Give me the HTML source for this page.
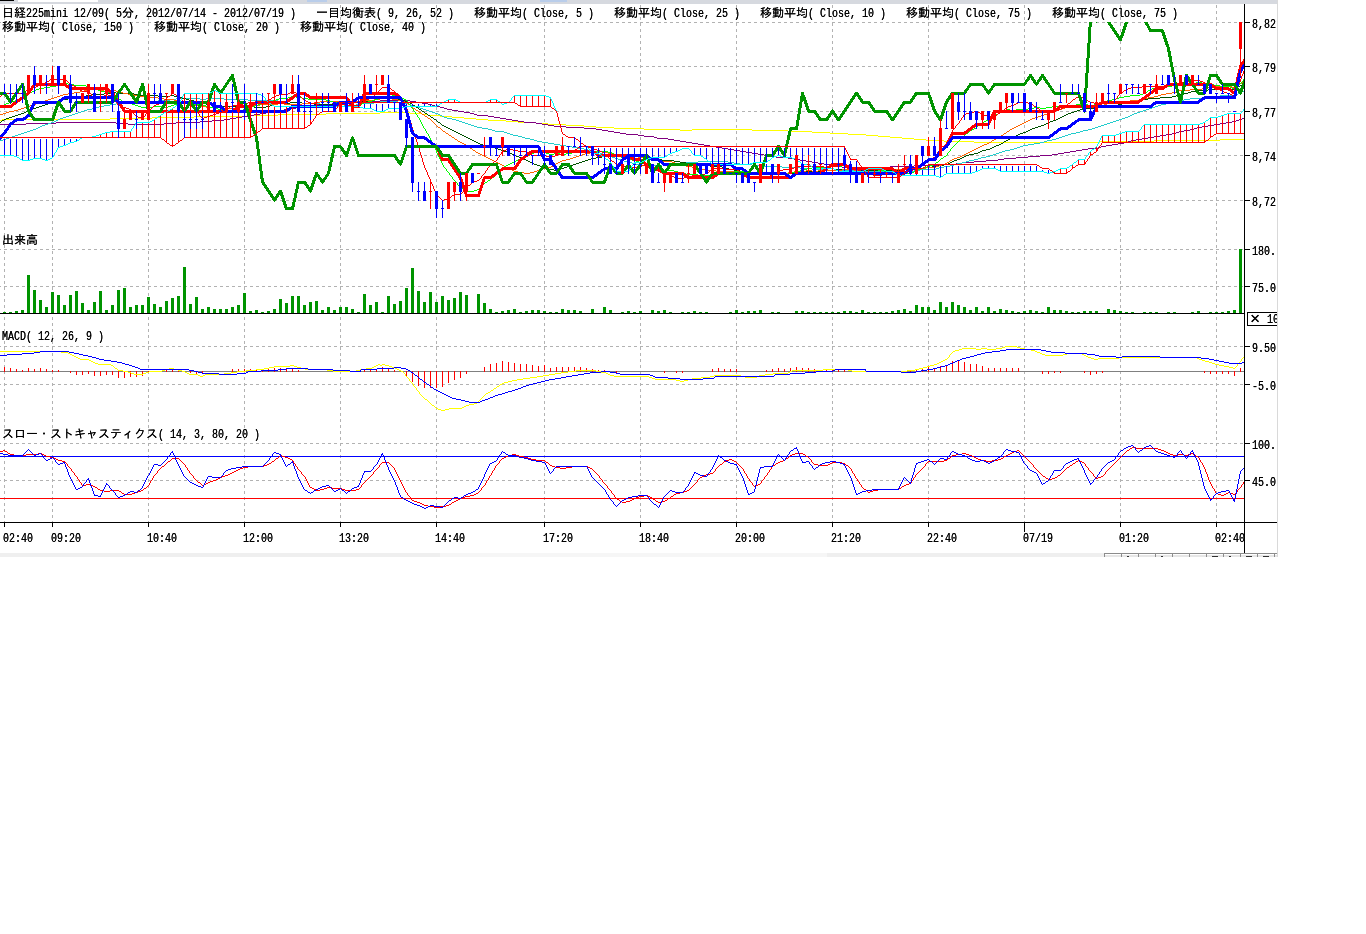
<!DOCTYPE html>
<html><head><meta charset="utf-8"><title>chart</title>
<style>
html,body{margin:0;padding:0;background:#fff;}
body{width:1366px;height:934px;position:relative;overflow:hidden;}
.t{position:absolute;white-space:nowrap;will-change:transform;text-shadow:0 0 0 #000;line-height:12px;height:12px;color:#000;font-size:12px;font-family:"Liberation Mono","IPAGothic",monospace;}
.j{font-family:"Liberation Mono","IPAGothic",monospace;font-size:12px;}
.l{font-family:"Liberation Mono",monospace;font-size:10px;display:inline-block;transform:scaleY(1.2);transform-origin:50% 70%;}
</style></head><body>
<svg width="1366" height="934" viewBox="0 0 1366 934" shape-rendering="crispEdges" style="position:absolute;left:0;top:0">
<defs><clipPath id="cm"><rect x="0" y="22" width="1244" height="204"/></clipPath><clipPath id="cl"><rect x="0" y="314" width="1244" height="208"/></clipPath></defs>
<rect x="0" y="0" width="1278" height="4" fill="#d6d9df"/>
<rect x="0" y="0" width="14" height="1" fill="#000"/>
<rect x="307" y="0" width="20" height="2" fill="#b9cdea"/>
<rect x="540" y="0" width="27" height="2" fill="#b9cdea"/>
<rect x="18" y="0" width="80" height="2" fill="#fff"/>
<rect x="1277" y="0" width="1" height="557" fill="#d9d9d9"/>
<line x1="0" y1="22.5" x2="1244" y2="22.5" stroke="#b2b2b2" stroke-width="1" stroke-dasharray="3,3" stroke-dashoffset="2"/>
<line x1="0" y1="66.5" x2="1244" y2="66.5" stroke="#b2b2b2" stroke-width="1" stroke-dasharray="3,3" stroke-dashoffset="2"/>
<line x1="0" y1="111.5" x2="1244" y2="111.5" stroke="#b2b2b2" stroke-width="1" stroke-dasharray="3,3" stroke-dashoffset="2"/>
<line x1="0" y1="155.5" x2="1244" y2="155.5" stroke="#b2b2b2" stroke-width="1" stroke-dasharray="3,3" stroke-dashoffset="2"/>
<line x1="0" y1="200.5" x2="1244" y2="200.5" stroke="#b2b2b2" stroke-width="1" stroke-dasharray="3,3" stroke-dashoffset="2"/>
<line x1="0" y1="249.5" x2="1244" y2="249.5" stroke="#b2b2b2" stroke-width="1" stroke-dasharray="3,3" stroke-dashoffset="2"/>
<line x1="0" y1="286.5" x2="1244" y2="286.5" stroke="#b2b2b2" stroke-width="1" stroke-dasharray="3,3" stroke-dashoffset="2"/>
<line x1="0" y1="346.5" x2="1244" y2="346.5" stroke="#b2b2b2" stroke-width="1" stroke-dasharray="3,3" stroke-dashoffset="2"/>
<line x1="0" y1="384.5" x2="1244" y2="384.5" stroke="#b2b2b2" stroke-width="1" stroke-dasharray="3,3" stroke-dashoffset="2"/>
<line x1="0" y1="443.5" x2="1244" y2="443.5" stroke="#b2b2b2" stroke-width="1" stroke-dasharray="3,3" stroke-dashoffset="2"/>
<line x1="0" y1="480.5" x2="1244" y2="480.5" stroke="#b2b2b2" stroke-width="1" stroke-dasharray="3,3" stroke-dashoffset="2"/>
<line x1="4.5" y1="4" x2="4.5" y2="522" stroke="#b2b2b2" stroke-width="1" stroke-dasharray="3,3" stroke-dashoffset="5"/>
<line x1="52.5" y1="4" x2="52.5" y2="522" stroke="#b2b2b2" stroke-width="1" stroke-dasharray="3,3" stroke-dashoffset="5"/>
<line x1="148.5" y1="4" x2="148.5" y2="522" stroke="#b2b2b2" stroke-width="1" stroke-dasharray="3,3" stroke-dashoffset="5"/>
<line x1="244.5" y1="4" x2="244.5" y2="522" stroke="#b2b2b2" stroke-width="1" stroke-dasharray="3,3" stroke-dashoffset="5"/>
<line x1="340.5" y1="4" x2="340.5" y2="522" stroke="#b2b2b2" stroke-width="1" stroke-dasharray="3,3" stroke-dashoffset="5"/>
<line x1="436.5" y1="4" x2="436.5" y2="522" stroke="#b2b2b2" stroke-width="1" stroke-dasharray="3,3" stroke-dashoffset="5"/>
<line x1="544.5" y1="4" x2="544.5" y2="522" stroke="#b2b2b2" stroke-width="1" stroke-dasharray="3,3" stroke-dashoffset="5"/>
<line x1="640.5" y1="4" x2="640.5" y2="522" stroke="#b2b2b2" stroke-width="1" stroke-dasharray="3,3" stroke-dashoffset="5"/>
<line x1="736.5" y1="4" x2="736.5" y2="522" stroke="#b2b2b2" stroke-width="1" stroke-dasharray="3,3" stroke-dashoffset="5"/>
<line x1="832.5" y1="4" x2="832.5" y2="522" stroke="#b2b2b2" stroke-width="1" stroke-dasharray="3,3" stroke-dashoffset="5"/>
<line x1="928.5" y1="4" x2="928.5" y2="522" stroke="#b2b2b2" stroke-width="1" stroke-dasharray="3,3" stroke-dashoffset="5"/>
<line x1="1024.5" y1="4" x2="1024.5" y2="522" stroke="#b2b2b2" stroke-width="1" stroke-dasharray="3,3" stroke-dashoffset="5"/>
<line x1="1120.5" y1="4" x2="1120.5" y2="522" stroke="#b2b2b2" stroke-width="1" stroke-dasharray="3,3" stroke-dashoffset="5"/>
<line x1="1216.5" y1="4" x2="1216.5" y2="522" stroke="#b2b2b2" stroke-width="1" stroke-dasharray="3,3" stroke-dashoffset="5"/>
<g clip-path="url(#cm)">
<path d="M0 120h2v1h-2zM2 119h108v1h-108zM110 118h42v1h-42zM152 117h42v1h-42zM194 116h54v1h-54zM248 115h30v1h-30zM278 114h48v1h-48zM326 113h54v1h-54zM380 112h30v1h-30zM410 113h12v1h-12zM422 114h6v1h-6zM428 115h12v1h-12zM440 116h12v1h-12zM452 117h12v1h-12zM464 118h12v1h-12zM476 119h12v1h-12zM488 120h18v1h-18zM506 121h12v1h-12zM518 122h18v1h-18zM536 123h12v1h-12zM548 124h18v1h-18zM566 125h18v1h-18zM584 126h12v1h-12zM596 127h18v1h-18zM614 128h30v1h-30zM644 129h36v1h-36zM680 130h12v1h-12zM692 129h60v1h-60zM752 130h36v1h-36zM788 131h24v1h-24zM812 132h18v1h-18zM830 133h18v1h-18zM848 134h18v1h-18zM866 135h12v1h-12zM878 136h12v1h-12zM890 137h12v1h-12zM902 138h12v1h-12zM914 139h12v1h-12zM926 140h18v1h-18zM944 141h30v1h-30zM974 142h126v1h-126zM1100 141h54v1h-54zM1154 140h66v1h-66zM1220 139h24v1h-24z" fill="#ffff00"/>
<path d="M0 124h26v1h-26zM26 123h30v1h-30zM56 122h60v1h-60zM116 123h12v1h-12zM128 124h36v1h-36zM164 123h12v1h-12zM176 122h24v1h-24zM200 121h12v1h-12zM212 120h12v1h-12zM224 119h6v1h-6zM230 118h6v1h-6zM236 117h6v1h-6zM242 116h6v1h-6zM248 115h6v1h-6zM254 114h6v1h-6zM260 113h6v1h-6zM266 112h6v1h-6zM272 111h6v1h-6zM278 110h6v1h-6zM284 109h6v1h-6zM290 108h6v1h-6zM296 107h6v1h-6zM302 106h6v1h-6zM308 105h12v1h-12zM320 104h12v1h-12zM332 103h18v1h-18zM350 102h18v1h-18zM368 101h12v1h-12zM380 100h30v1h-30zM410 101h6v1h-6zM416 102h6v1h-6zM422 103h6v1h-6zM428 104h4v1h-4zM432 105h3v1h-3zM435 106h5v1h-5zM440 107h4v1h-4zM444 108h3v1h-3zM447 109h5v1h-5zM452 110h6v1h-6zM458 111h6v1h-6zM464 112h6v1h-6zM470 113h4v1h-4zM474 114h3v1h-3zM477 115h11v1h-11zM488 116h6v1h-6zM494 117h6v1h-6zM500 118h6v1h-6zM506 119h6v1h-6zM512 120h6v1h-6zM518 121h6v1h-6zM524 122h12v1h-12zM536 123h6v1h-6zM542 124h6v1h-6zM548 125h6v1h-6zM554 126h12v1h-12zM566 127h18v1h-18zM584 128h12v1h-12zM596 129h6v1h-6zM602 130h6v1h-6zM608 131h6v1h-6zM614 132h6v1h-6zM620 133h6v1h-6zM626 134h12v1h-12zM638 135h6v1h-6zM644 136h10v1h-10zM654 137h3v1h-3zM657 138h11v1h-11zM668 139h6v1h-6zM674 140h6v1h-6zM680 141h6v1h-6zM686 142h6v1h-6zM692 143h6v1h-6zM698 144h6v1h-6zM704 145h6v1h-6zM710 146h6v1h-6zM716 147h6v1h-6zM722 148h6v1h-6zM728 149h6v1h-6zM734 150h6v1h-6zM740 151h6v1h-6zM746 152h6v1h-6zM752 153h6v1h-6zM758 154h6v1h-6zM764 155h6v1h-6zM770 156h6v1h-6zM776 157h12v1h-12zM788 158h6v1h-6zM794 159h6v1h-6zM800 160h6v1h-6zM806 161h6v1h-6zM812 162h6v1h-6zM818 163h6v1h-6zM824 164h6v1h-6zM830 165h6v1h-6zM836 166h6v1h-6zM842 167h12v1h-12zM854 168h18v1h-18zM872 167h18v1h-18zM890 166h24v1h-24zM914 165h24v1h-24zM938 164h18v1h-18zM956 163h6v1h-6zM962 162h12v1h-12zM974 161h12v1h-12zM986 160h12v1h-12zM998 159h6v1h-6zM1004 158h12v1h-12zM1016 157h12v1h-12zM1028 156h12v1h-12zM1040 155h12v1h-12zM1052 154h6v1h-6zM1058 153h6v1h-6zM1064 152h6v1h-6zM1070 151h6v1h-6zM1076 150h6v1h-6zM1082 149h6v1h-6zM1088 148h10v1h-10zM1098 147h3v1h-3zM1101 146h5v1h-5zM1106 145h6v1h-6zM1112 144h6v1h-6zM1118 143h6v1h-6zM1124 142h4v1h-4zM1128 141h3v1h-3zM1131 140h5v1h-5zM1136 139h6v1h-6zM1142 138h6v1h-6zM1148 137h6v1h-6zM1154 136h6v1h-6zM1160 135h6v1h-6zM1166 134h6v1h-6zM1172 133h4v1h-4zM1176 132h3v1h-3zM1179 131h5v1h-5zM1184 130h6v1h-6zM1190 129h4v1h-4zM1194 128h3v1h-3zM1197 127h5v1h-5zM1202 126h6v1h-6zM1208 125h6v1h-6zM1214 124h6v1h-6zM1220 123h6v1h-6zM1226 122h6v1h-6zM1232 121h4v1h-4zM1236 120h3v1h-3zM1239 119h3v1h-3zM1242 118h2v1h-2z" fill="#800080"/>
<path d="M0 140h3v1h-3zM3 139h3v1h-3zM6 138h3v1h-3zM9 137h3v1h-3zM12 136h3v1h-3zM15 135h3v1h-3zM18 134h3v1h-3zM21 133h3v1h-3zM24 132h3v1h-3zM27 131h3v1h-3zM30 130h3v1h-3zM33 129h3v1h-3zM36 128h2v1h-2zM38 127h2v1h-2zM40 126h2v1h-2zM42 125h3v1h-3zM45 124h3v1h-3zM48 123h3v1h-3zM51 122h3v1h-3zM54 121h2v1h-2zM56 120h2v1h-2zM58 119h2v1h-2zM60 118h3v1h-3zM63 117h3v1h-3zM66 116h3v1h-3zM69 115h3v1h-3zM72 114h3v1h-3zM75 113h3v1h-3zM78 112h3v1h-3zM81 111h3v1h-3zM84 110h3v1h-3zM87 109h5v1h-5zM92 108h4v1h-4zM96 107h3v1h-3zM99 106h5v1h-5zM104 105h6v1h-6zM110 104h6v1h-6zM116 103h12v1h-12zM128 102h18v1h-18zM146 101h12v1h-12zM158 100h12v1h-12zM170 99h6v1h-6zM176 98h24v1h-24zM200 99h6v1h-6zM206 98h18v1h-18zM224 99h24v1h-24zM248 100h30v1h-30zM278 101h12v1h-12zM290 102h12v1h-12zM302 103h18v1h-18zM320 104h24v1h-24zM344 105h12v1h-12zM356 104h6v1h-6zM362 103h12v1h-12zM374 102h6v1h-6zM380 101h18v1h-18zM398 102h6v1h-6zM404 103h4v1h-4zM408 104h3v1h-3zM411 105h3v1h-3zM414 106h3v1h-3zM417 107h3v1h-3zM420 108h3v1h-3zM423 109h3v1h-3zM426 110h3v1h-3zM429 111h3v1h-3zM432 112h3v1h-3zM435 113h3v1h-3zM438 114h2v1h-2zM440 115h2v1h-2zM442 116h2v1h-2zM444 117h3v1h-3zM447 118h5v1h-5zM452 119h4v1h-4zM456 120h3v1h-3zM459 121h3v1h-3zM462 122h3v1h-3zM465 123h3v1h-3zM468 124h3v1h-3zM471 125h3v1h-3zM474 126h3v1h-3zM477 127h5v1h-5zM482 128h6v1h-6zM488 129h4v1h-4zM492 130h3v1h-3zM495 131h9v1h-9zM504 132h3v1h-3zM507 133h3v1h-3zM510 134h3v1h-3zM513 135h5v1h-5zM518 136h4v1h-4zM522 137h3v1h-3zM525 138h5v1h-5zM530 139h4v1h-4zM534 140h3v1h-3zM537 141h5v1h-5zM542 142h6v1h-6zM548 143h6v1h-6zM554 144h6v1h-6zM560 145h6v1h-6zM566 146h6v1h-6zM572 147h6v1h-6zM578 148h6v1h-6zM584 149h4v1h-4zM588 150h3v1h-3zM591 151h5v1h-5zM596 152h4v1h-4zM600 153h3v1h-3zM603 154h3v1h-3zM606 155h3v1h-3zM609 156h3v1h-3zM612 157h3v1h-3zM615 158h3v1h-3zM618 159h3v1h-3zM621 160h3v1h-3zM624 161h3v1h-3zM627 162h5v1h-5zM632 163h4v1h-4zM636 164h3v1h-3zM639 165h23v1h-23zM662 164h12v1h-12zM674 163h12v1h-12zM686 162h12v1h-12zM698 161h30v1h-30zM728 162h6v1h-6zM734 163h6v1h-6zM740 164h12v1h-12zM752 165h12v1h-12zM764 166h18v1h-18zM782 167h18v1h-18zM800 168h12v1h-12zM812 169h12v1h-12zM824 170h36v1h-36zM860 171h54v1h-54zM914 170h6v1h-6zM920 169h16v1h-16zM936 168h3v1h-3zM939 167h5v1h-5zM944 166h6v1h-6zM950 165h4v1h-4zM954 164h3v1h-3zM957 163h5v1h-5zM962 162h4v1h-4zM966 161h3v1h-3zM969 160h5v1h-5zM974 159h4v1h-4zM978 158h3v1h-3zM981 157h5v1h-5zM986 156h4v1h-4zM990 155h3v1h-3zM993 154h3v1h-3zM996 153h3v1h-3zM999 152h3v1h-3zM1002 151h3v1h-3zM1005 150h5v1h-5zM1010 149h4v1h-4zM1014 148h3v1h-3zM1017 147h3v1h-3zM1020 146h3v1h-3zM1023 145h5v1h-5zM1028 144h6v1h-6zM1034 143h6v1h-6zM1040 142h4v1h-4zM1044 141h3v1h-3zM1047 140h5v1h-5zM1052 139h4v1h-4zM1056 138h3v1h-3zM1059 137h3v1h-3zM1062 136h3v1h-3zM1065 135h3v1h-3zM1068 134h3v1h-3zM1071 133h5v1h-5zM1076 132h4v1h-4zM1080 131h3v1h-3zM1083 130h5v1h-5zM1088 129h4v1h-4zM1092 128h3v1h-3zM1095 127h3v1h-3zM1098 126h3v1h-3zM1101 125h3v1h-3zM1104 124h3v1h-3zM1107 123h3v1h-3zM1110 122h3v1h-3zM1113 121h3v1h-3zM1116 120h3v1h-3zM1119 119h3v1h-3zM1122 118h3v1h-3zM1125 117h3v1h-3zM1128 116h2v1h-2zM1130 115h2v1h-2zM1132 114h2v1h-2zM1134 113h3v1h-3zM1137 112h3v1h-3zM1140 111h3v1h-3zM1143 110h3v1h-3zM1146 109h3v1h-3zM1149 108h3v1h-3zM1152 107h3v1h-3zM1155 106h3v1h-3zM1158 105h3v1h-3zM1161 104h5v1h-5zM1166 103h4v1h-4zM1170 102h3v1h-3zM1173 101h5v1h-5zM1178 100h6v1h-6zM1184 99h6v1h-6zM1190 98h12v1h-12zM1202 97h6v1h-6zM1208 96h12v1h-12zM1220 95h16v1h-16zM1236 94h2v1h-2zM1238 93h2v1h-2zM1240 92h2v1h-2zM1242 91h2v1h-2z" fill="#22cccc"/>
<path d="M0 122h1v1h-1zM1 121h1v1h-1zM2 120h2v1h-2zM4 119h2v1h-2zM6 118h3v1h-3zM9 117h3v1h-3zM12 116h3v1h-3zM15 115h3v1h-3zM18 114h3v1h-3zM21 113h3v1h-3zM24 112h2v1h-2zM26 111h2v1h-2zM28 110h2v1h-2zM30 109h3v1h-3zM33 108h3v1h-3zM36 107h3v1h-3zM39 106h3v1h-3zM42 105h3v1h-3zM45 104h3v1h-3zM48 103h3v1h-3zM51 102h5v1h-5zM56 101h4v1h-4zM60 100h3v1h-3zM63 99h5v1h-5zM68 98h10v1h-10zM78 97h3v1h-3zM81 96h5v1h-5zM86 95h6v1h-6zM92 94h12v1h-12zM104 93h6v1h-6zM110 92h6v1h-6zM116 93h18v1h-18zM134 94h6v1h-6zM140 95h18v1h-18zM158 96h12v1h-12zM170 95h4v1h-4zM174 96h3v1h-3zM177 97h5v1h-5zM182 98h4v1h-4zM186 99h3v1h-3zM189 100h5v1h-5zM194 101h4v1h-4zM198 102h3v1h-3zM201 103h5v1h-5zM206 104h6v1h-6zM212 105h6v1h-6zM218 106h18v1h-18zM236 107h6v1h-6zM242 106h12v1h-12zM254 107h12v1h-12zM266 106h4v1h-4zM270 105h3v1h-3zM273 104h5v1h-5zM278 103h12v1h-12zM290 102h12v1h-12zM302 103h12v1h-12zM314 104h24v1h-24zM338 103h12v1h-12zM350 102h12v1h-12zM362 101h6v1h-6zM368 100h6v1h-6zM374 99h6v1h-6zM380 98h18v1h-18zM398 99h4v1h-4zM402 100h3v1h-3zM405 101h3v1h-3zM408 102h2v1h-2zM410 103h2v1h-2zM412 104h1v1h-1zM413 105h2v1h-2zM415 106h1v1h-1zM416 107h2v1h-2zM418 108h1v1h-1zM419 109h2v1h-2zM421 110h1v1h-1zM422 111h2v1h-2zM424 112h1v1h-1zM425 113h2v1h-2zM427 114h1v1h-1zM428 115h2v1h-2zM430 116h1v1h-1zM431 117h2v1h-2zM433 118h1v1h-1zM434 119h2v1h-2zM436 120h1v1h-1zM437 121h1v1h-1zM438 122h2v1h-2zM440 123h1v1h-1zM441 124h1v1h-1zM442 125h2v1h-2zM444 126h2v1h-2zM446 127h2v1h-2zM448 128h2v1h-2zM450 129h2v1h-2zM452 130h2v1h-2zM454 131h2v1h-2zM456 132h2v1h-2zM458 133h2v1h-2zM460 134h2v1h-2zM462 135h2v1h-2zM464 136h2v1h-2zM466 137h2v1h-2zM468 138h2v1h-2zM470 139h2v1h-2zM472 140h2v1h-2zM474 141h2v1h-2zM476 142h2v1h-2zM478 143h2v1h-2zM480 144h3v1h-3zM483 145h5v1h-5zM488 146h4v1h-4zM492 147h3v1h-3zM495 148h3v1h-3zM498 149h3v1h-3zM501 150h3v1h-3zM504 151h3v1h-3zM507 152h3v1h-3zM510 153h2v1h-2zM512 154h2v1h-2zM514 155h2v1h-2zM516 156h3v1h-3zM519 157h3v1h-3zM522 158h2v1h-2zM524 159h2v1h-2zM526 160h2v1h-2zM528 161h2v1h-2zM530 162h2v1h-2zM532 163h2v1h-2zM534 164h3v1h-3zM537 165h3v1h-3zM540 166h3v1h-3zM543 167h3v1h-3zM546 168h3v1h-3zM549 169h5v1h-5zM554 170h4v1h-4zM558 169h3v1h-3zM561 168h3v1h-3zM564 167h3v1h-3zM567 166h3v1h-3zM570 165h3v1h-3zM573 164h3v1h-3zM576 163h3v1h-3zM579 162h3v1h-3zM582 161h3v1h-3zM585 160h3v1h-3zM588 159h3v1h-3zM591 158h5v1h-5zM596 157h6v1h-6zM602 156h6v1h-6zM608 155h18v1h-18zM626 154h6v1h-6zM632 155h6v1h-6zM638 156h10v1h-10zM648 157h3v1h-3zM651 158h5v1h-5zM656 159h6v1h-6zM662 160h12v1h-12zM674 161h6v1h-6zM680 162h6v1h-6zM686 163h6v1h-6zM692 164h12v1h-12zM704 165h6v1h-6zM710 166h12v1h-12zM722 167h4v1h-4zM726 168h3v1h-3zM729 169h5v1h-5zM734 170h6v1h-6zM740 171h6v1h-6zM746 172h36v1h-36zM782 173h12v1h-12zM794 172h12v1h-12zM806 171h18v1h-18zM824 170h12v1h-12zM836 169h18v1h-18zM854 170h48v1h-48zM902 169h18v1h-18zM920 168h6v1h-6zM926 167h6v1h-6zM932 166h6v1h-6zM938 165h6v1h-6zM944 164h4v1h-4zM948 163h2v1h-2zM950 162h2v1h-2zM952 161h2v1h-2zM954 160h3v1h-3zM957 159h3v1h-3zM960 158h2v1h-2zM962 157h2v1h-2zM964 156h2v1h-2zM966 155h3v1h-3zM969 154h5v1h-5zM974 153h4v1h-4zM978 152h2v1h-2zM980 151h2v1h-2zM982 150h4v1h-4zM986 149h4v1h-4zM990 148h2v1h-2zM992 147h2v1h-2zM994 146h2v1h-2zM996 145h3v1h-3zM999 144h2v1h-2zM1001 143h2v1h-2zM1003 142h1v1h-1zM1004 141h2v1h-2zM1006 140h2v1h-2zM1008 139h2v1h-2zM1010 138h2v1h-2zM1012 137h2v1h-2zM1014 136h2v1h-2zM1016 135h2v1h-2zM1018 134h2v1h-2zM1020 133h3v1h-3zM1023 132h3v1h-3zM1026 131h2v1h-2zM1028 130h2v1h-2zM1030 129h2v1h-2zM1032 128h3v1h-3zM1035 127h3v1h-3zM1038 126h3v1h-3zM1041 125h3v1h-3zM1044 124h2v1h-2zM1046 123h2v1h-2zM1048 122h2v1h-2zM1050 121h3v1h-3zM1053 120h3v1h-3zM1056 119h2v1h-2zM1058 118h2v1h-2zM1060 117h2v1h-2zM1062 116h2v1h-2zM1064 115h2v1h-2zM1066 114h2v1h-2zM1068 113h3v1h-3zM1071 112h3v1h-3zM1074 111h3v1h-3zM1077 110h3v1h-3zM1080 109h3v1h-3zM1083 108h11v1h-11zM1094 107h12v1h-12zM1106 106h6v1h-6zM1112 105h6v1h-6zM1118 104h4v1h-4zM1122 103h3v1h-3zM1125 102h5v1h-5zM1130 101h6v1h-6zM1136 100h6v1h-6zM1142 99h6v1h-6zM1148 98h12v1h-12zM1160 97h12v1h-12zM1172 96h4v1h-4zM1176 95h3v1h-3zM1179 94h5v1h-5zM1184 93h4v1h-4zM1188 92h3v1h-3zM1191 91h5v1h-5zM1196 90h12v1h-12zM1208 89h27v1h-27zM1235 88h2v1h-2zM1237 87h1v1h-1zM1238 86h2v1h-2zM1240 85h2v1h-2zM1242 84h2v1h-2z" fill="#005000"/>
<path d="M0 114h3v1h-3zM3 113h3v1h-3zM6 112h3v1h-3zM9 111h5v1h-5zM14 110h4v1h-4zM18 109h3v1h-3zM21 108h3v1h-3zM24 107h3v1h-3zM27 106h3v1h-3zM30 105h3v1h-3zM33 104h3v1h-3zM36 103h3v1h-3zM39 102h3v1h-3zM42 101h3v1h-3zM45 100h3v1h-3zM48 99h3v1h-3zM51 98h3v1h-3zM54 97h3v1h-3zM57 96h3v1h-3zM60 95h3v1h-3zM63 94h5v1h-5zM68 93h6v1h-6zM74 92h6v1h-6zM80 91h4v1h-4zM84 90h3v1h-3zM87 89h11v1h-11zM98 90h6v1h-6zM104 89h6v1h-6zM110 90h6v1h-6zM116 91h4v1h-4zM120 92h3v1h-3zM123 93h5v1h-5zM128 94h6v1h-6zM134 95h6v1h-6zM140 96h6v1h-6zM146 97h12v1h-12zM158 98h6v1h-6zM164 99h10v1h-10zM174 100h3v1h-3zM177 101h3v1h-3zM180 102h3v1h-3zM183 103h5v1h-5zM188 104h6v1h-6zM194 105h6v1h-6zM200 106h6v1h-6zM206 107h18v1h-18zM224 108h12v1h-12zM236 107h6v1h-6zM242 106h12v1h-12zM254 105h6v1h-6zM260 104h18v1h-18zM278 103h6v1h-6zM284 104h18v1h-18zM302 103h12v1h-12zM314 102h6v1h-6zM320 101h42v1h-42zM362 100h12v1h-12zM374 99h6v1h-6zM380 98h12v1h-12zM392 99h6v1h-6zM398 100h4v1h-4zM402 101h3v1h-3zM405 102h2v1h-2zM407 103h1v1h-1zM408 104h2v1h-2zM410 105h1v1h-1zM411 106h1v1h-1zM412 107h1v1h-1zM413 108h2v1h-2zM415 109h1v1h-1zM416 110h2v1h-2zM418 111h1v1h-1zM419 112h2v1h-2zM421 113h1v1h-1zM422 114h2v1h-2zM424 115h1v1h-1zM425 116h2v1h-2zM427 117h1v1h-1zM428 118h2v1h-2zM430 119h1v1h-1zM431 120h1v1h-1zM432 121h1v1h-1zM433 122h1v1h-1zM434 123h1v1h-1zM435 124h1v1h-1zM436 125h1v1h-1zM437 126h1v1h-1zM438 127h2v1h-2zM440 128h1v1h-1zM441 129h1v1h-1zM442 130h1v1h-1zM443 131h2v1h-2zM445 132h1v1h-1zM446 133h2v1h-2zM448 134h1v1h-1zM449 135h2v1h-2zM451 136h1v1h-1zM452 137h2v1h-2zM454 138h1v1h-1zM455 139h2v1h-2zM457 140h1v1h-1zM458 141h2v1h-2zM460 142h2v1h-2zM462 143h2v1h-2zM464 144h2v1h-2zM466 145h1v1h-1zM467 146h2v1h-2zM469 147h1v1h-1zM470 148h2v1h-2zM472 149h1v1h-1zM473 150h2v1h-2zM475 151h1v1h-1zM476 152h2v1h-2zM478 153h2v1h-2zM480 154h2v1h-2zM482 155h2v1h-2zM484 156h2v1h-2zM486 157h2v1h-2zM488 158h2v1h-2zM490 159h2v1h-2zM492 160h2v1h-2zM494 161h2v1h-2zM496 162h2v1h-2zM498 163h2v1h-2zM500 164h2v1h-2zM502 165h2v1h-2zM504 166h2v1h-2zM506 167h2v1h-2zM508 168h2v1h-2zM510 169h2v1h-2zM512 170h2v1h-2zM514 171h4v1h-4zM518 172h6v1h-6zM524 173h6v1h-6zM530 172h4v1h-4zM534 171h3v1h-3zM537 170h3v1h-3zM540 169h3v1h-3zM543 168h5v1h-5zM548 167h3v1h-3zM551 166h2v1h-2zM553 165h1v1h-1zM554 164h2v1h-2zM556 163h2v1h-2zM558 162h2v1h-2zM560 161h2v1h-2zM562 160h4v1h-4zM566 159h4v1h-4zM570 158h3v1h-3zM573 157h3v1h-3zM576 156h3v1h-3zM579 155h3v1h-3zM582 154h3v1h-3zM585 153h5v1h-5zM590 152h6v1h-6zM596 151h6v1h-6zM602 152h6v1h-6zM608 153h6v1h-6zM614 154h6v1h-6zM620 155h6v1h-6zM626 156h12v1h-12zM638 157h10v1h-10zM648 158h3v1h-3zM651 159h5v1h-5zM656 160h6v1h-6zM662 161h10v1h-10zM672 162h3v1h-3zM675 163h3v1h-3zM678 164h3v1h-3zM681 165h5v1h-5zM686 166h6v1h-6zM692 167h6v1h-6zM698 168h4v1h-4zM702 169h3v1h-3zM705 170h11v1h-11zM716 171h24v1h-24zM740 172h6v1h-6zM746 173h6v1h-6zM752 174h24v1h-24zM776 173h12v1h-12zM788 172h6v1h-6zM794 171h12v1h-12zM806 170h6v1h-6zM812 171h6v1h-6zM818 170h24v1h-24zM842 169h12v1h-12zM854 170h6v1h-6zM860 169h12v1h-12zM872 168h6v1h-6zM878 169h42v1h-42zM920 168h6v1h-6zM926 167h10v1h-10zM936 166h3v1h-3zM939 165h3v1h-3zM942 164h3v1h-3zM945 163h2v1h-2zM947 162h2v1h-2zM949 161h1v1h-1zM950 160h2v1h-2zM952 159h2v1h-2zM954 158h3v1h-3zM957 157h3v1h-3zM960 156h2v1h-2zM962 155h2v1h-2zM964 154h2v1h-2zM966 153h2v1h-2zM968 152h2v1h-2zM970 151h2v1h-2zM972 150h2v1h-2zM974 149h2v1h-2zM976 148h2v1h-2zM978 147h2v1h-2zM980 146h2v1h-2zM982 145h2v1h-2zM984 144h3v1h-3zM987 143h2v1h-2zM989 142h2v1h-2zM991 141h1v1h-1zM992 140h2v1h-2zM994 139h2v1h-2zM996 138h2v1h-2zM998 137h2v1h-2zM1000 136h1v1h-1zM1001 135h2v1h-2zM1003 134h1v1h-1zM1004 133h2v1h-2zM1006 132h1v1h-1zM1007 131h2v1h-2zM1009 130h1v1h-1zM1010 129h2v1h-2zM1012 128h2v1h-2zM1014 127h2v1h-2zM1016 126h2v1h-2zM1018 125h2v1h-2zM1020 124h2v1h-2zM1022 123h2v1h-2zM1024 122h2v1h-2zM1026 121h2v1h-2zM1028 120h2v1h-2zM1030 119h2v1h-2zM1032 118h3v1h-3zM1035 117h3v1h-3zM1038 116h3v1h-3zM1041 115h3v1h-3zM1044 114h3v1h-3zM1047 113h3v1h-3zM1050 112h3v1h-3zM1053 111h3v1h-3zM1056 110h3v1h-3zM1059 109h3v1h-3zM1062 108h3v1h-3zM1065 107h11v1h-11zM1076 106h24v1h-24zM1100 105h4v1h-4zM1104 104h3v1h-3zM1107 103h5v1h-5zM1112 102h12v1h-12zM1124 101h6v1h-6zM1130 100h10v1h-10zM1140 99h3v1h-3zM1143 98h5v1h-5zM1148 97h6v1h-6zM1154 96h4v1h-4zM1158 95h3v1h-3zM1161 94h5v1h-5zM1166 93h6v1h-6zM1172 92h4v1h-4zM1176 91h3v1h-3zM1179 90h11v1h-11zM1190 89h12v1h-12zM1202 88h4v1h-4zM1206 87h3v1h-3zM1209 86h23v1h-23zM1232 87h3v1h-3zM1235 86h2v1h-2zM1237 85h1v1h-1zM1238 84h2v1h-2zM1240 83h2v1h-2zM1242 82h2v1h-2z" fill="#ff6400"/>
<path d="M0 106h2v1h-2zM2 105h2v1h-2zM4 104h2v1h-2zM6 103h3v1h-3zM9 102h3v1h-3zM12 101h3v1h-3zM15 100h3v1h-3zM18 99h2v1h-2zM20 98h2v1h-2zM22 97h1v1h-1zM23 96h2v1h-2zM25 95h1v1h-1zM26 94h2v1h-2zM28 93h2v1h-2zM30 92h2v1h-2zM32 91h2v1h-2zM34 90h2v1h-2zM36 89h3v1h-3zM39 88h5v1h-5zM44 87h6v1h-6zM50 86h6v1h-6zM56 85h4v1h-4zM60 84h3v1h-3zM63 83h5v1h-5zM68 84h6v1h-6zM74 85h12v1h-12zM86 86h4v1h-4zM90 87h3v1h-3zM93 88h3v1h-3zM96 89h2v1h-2zM98 90h2v1h-2zM100 91h8v1h-8zM108 92h2v1h-2zM110 93h2v1h-2zM112 94h1v1h-1zM113 95h2v1h-2zM115 96h1v1h-1zM116 97h2v1h-2zM118 98h1v1h-1zM119 99h2v1h-2zM121 100h1v1h-1zM122 101h2v1h-2zM124 102h4v1h-4zM128 103h4v1h-4zM132 104h3v1h-3zM135 105h3v1h-3zM138 106h3v1h-3zM141 107h5v1h-5zM146 108h4v1h-4zM150 107h3v1h-3zM153 106h11v1h-11zM164 107h4v1h-4zM168 106h3v1h-3zM171 105h3v1h-3zM174 104h3v1h-3zM177 103h11v1h-11zM188 104h12v1h-12zM200 105h6v1h-6zM206 106h4v1h-4zM210 107h3v1h-3zM213 108h5v1h-5zM218 109h6v1h-6zM224 110h6v1h-6zM230 111h10v1h-10zM240 110h3v1h-3zM243 109h3v1h-3zM246 108h3v1h-3zM249 107h3v1h-3zM252 106h3v1h-3zM255 105h3v1h-3zM258 104h3v1h-3zM261 103h5v1h-5zM266 102h4v1h-4zM270 101h3v1h-3zM273 100h3v1h-3zM276 99h3v1h-3zM279 98h9v1h-9zM288 97h3v1h-3zM291 96h5v1h-5zM296 97h6v1h-6zM302 98h6v1h-6zM308 99h18v1h-18zM326 100h4v1h-4zM330 101h3v1h-3zM333 102h5v1h-5zM338 103h6v1h-6zM344 104h4v1h-4zM348 105h3v1h-3zM351 106h5v1h-5zM356 105h4v1h-4zM360 104h2v1h-2zM362 103h2v1h-2zM364 102h4v1h-4zM368 101h4v1h-4zM372 100h3v1h-3zM375 99h3v1h-3zM378 98h2v1h-2zM380 97h2v1h-2zM382 96h10v1h-10zM392 95h4v1h-4zM396 96h3v1h-3zM399 97h3v1h-3zM402 98h2v1h-2zM404 99h2v1h-2zM406 100h1v1h-1zM407 101h1v1h-1zM407 102h1v1h-1zM408 103h1v1h-1zM409 104h1v1h-1zM410 105h1v1h-1zM410 106h1v1h-1zM411 107h1v1h-1zM412 108h1v1h-1zM413 109h1v1h-1zM413 110h1v1h-1zM414 111h1v1h-1zM415 112h1v1h-1zM415 113h1v1h-1zM416 114h1v1h-1zM417 115h1v1h-1zM417 116h1v1h-1zM418 117h1v1h-1zM419 118h1v1h-1zM419 119h1v1h-1zM420 120h1v1h-1zM420 121h1v1h-1zM421 122h1v1h-1zM421 123h1v1h-1zM422 124h1v1h-1zM422 125h1v1h-1zM423 126h1v1h-1zM423 127h1v1h-1zM424 128h1v1h-1zM425 129h1v1h-1zM425 130h1v1h-1zM426 131h1v1h-1zM426 132h1v1h-1zM427 133h1v1h-1zM428 134h1v1h-1zM428 135h1v1h-1zM429 136h1v1h-1zM429 137h1v1h-1zM430 138h1v1h-1zM430 139h1v1h-1zM431 140h1v1h-1zM431 141h1v1h-1zM432 142h1v1h-1zM432 143h1v1h-1zM433 144h1v1h-1zM433 145h1v1h-1zM434 146h1v1h-1zM434 147h1v1h-1zM435 148h1v1h-1zM435 149h1v1h-1zM436 150h1v1h-1zM436 151h1v1h-1zM436 152h1v1h-1zM437 153h1v1h-1zM437 154h1v1h-1zM438 155h1v1h-1zM438 156h1v1h-1zM439 157h1v1h-1zM439 158h1v1h-1zM440 159h1v1h-1zM440 160h1v1h-1zM441 161h1v1h-1zM441 162h1v1h-1zM442 163h1v1h-1zM442 164h1v1h-1zM443 165h1v1h-1zM443 166h1v1h-1zM444 167h1v1h-1zM445 168h1v1h-1zM446 169h1v1h-1zM446 170h1v1h-1zM447 171h1v1h-1zM448 172h1v1h-1zM449 173h1v1h-1zM449 174h1v1h-1zM450 175h1v1h-1zM451 176h1v1h-1zM452 177h1v1h-1zM452 178h1v1h-1zM453 179h1v1h-1zM454 180h1v1h-1zM455 181h1v1h-1zM456 182h1v1h-1zM457 183h1v1h-1zM457 184h1v1h-1zM458 185h1v1h-1zM459 186h1v1h-1zM460 187h1v1h-1zM461 188h2v1h-2zM463 189h1v1h-1zM464 190h2v1h-2zM466 191h8v1h-8zM474 190h3v1h-3zM477 189h2v1h-2zM479 188h1v1h-1zM480 187h1v1h-1zM481 186h1v1h-1zM482 185h1v1h-1zM483 184h1v1h-1zM484 183h1v1h-1zM485 182h2v1h-2zM487 181h1v1h-1zM488 180h2v1h-2zM490 179h1v1h-1zM491 178h1v1h-1zM492 177h2v1h-2zM494 176h1v1h-1zM495 175h1v1h-1zM496 174h1v1h-1zM497 173h1v1h-1zM498 172h1v1h-1zM499 170h1v1h-1zM499 171h1v1h-1zM500 169h1v1h-1zM501 168h1v1h-1zM502 167h2v1h-2zM504 166h2v1h-2zM506 165h2v1h-2zM508 164h2v1h-2zM510 163h2v1h-2zM512 162h2v1h-2zM514 161h2v1h-2zM516 160h2v1h-2zM518 159h2v1h-2zM520 158h2v1h-2zM522 157h3v1h-3zM525 156h3v1h-3zM528 155h2v1h-2zM530 154h2v1h-2zM532 153h2v1h-2zM534 152h3v1h-3zM537 151h5v1h-5zM542 152h4v1h-4zM546 153h3v1h-3zM549 154h5v1h-5zM554 153h6v1h-6zM560 154h6v1h-6zM566 153h6v1h-6zM572 152h6v1h-6zM578 151h30v1h-30zM608 152h4v1h-4zM612 153h2v1h-2zM614 154h2v1h-2zM616 155h2v1h-2zM618 156h3v1h-3zM621 157h3v1h-3zM624 158h3v1h-3zM627 159h5v1h-5zM632 160h4v1h-4zM636 161h3v1h-3zM639 162h3v1h-3zM642 163h3v1h-3zM645 164h3v1h-3zM648 165h2v1h-2zM650 166h2v1h-2zM652 167h2v1h-2zM654 168h3v1h-3zM657 169h5v1h-5zM662 170h12v1h-12zM674 171h4v1h-4zM678 172h3v1h-3zM681 173h5v1h-5zM686 174h12v1h-12zM698 175h12v1h-12zM710 174h4v1h-4zM714 173h3v1h-3zM717 172h17v1h-17zM734 171h12v1h-12zM746 172h4v1h-4zM750 173h3v1h-3zM753 174h5v1h-5zM758 173h12v1h-12zM770 174h18v1h-18zM788 173h4v1h-4zM792 172h3v1h-3zM795 171h5v1h-5zM800 170h4v1h-4zM804 169h3v1h-3zM807 168h5v1h-5zM812 167h18v1h-18zM830 166h12v1h-12zM842 165h6v1h-6zM848 166h4v1h-4zM852 167h3v1h-3zM855 168h11v1h-11zM866 169h12v1h-12zM878 170h6v1h-6zM884 171h6v1h-6zM890 172h6v1h-6zM896 173h16v1h-16zM912 172h2v1h-2zM914 171h2v1h-2zM916 170h2v1h-2zM918 169h3v1h-3zM921 168h3v1h-3zM924 167h3v1h-3zM927 166h3v1h-3zM930 165h3v1h-3zM933 164h2v1h-2zM935 163h1v1h-1zM936 162h2v1h-2zM938 161h1v1h-1zM939 160h1v1h-1zM940 159h1v1h-1zM941 158h2v1h-2zM943 157h1v1h-1zM944 156h2v1h-2zM946 155h1v1h-1zM947 153h1v1h-1zM947 154h1v1h-1zM948 152h1v1h-1zM949 151h1v1h-1zM950 149h1v1h-1zM950 150h1v1h-1zM951 148h1v1h-1zM952 147h1v1h-1zM953 146h1v1h-1zM954 145h1v1h-1zM955 144h1v1h-1zM956 143h1v1h-1zM957 142h1v1h-1zM958 141h1v1h-1zM959 140h1v1h-1zM960 139h1v1h-1zM961 138h1v1h-1zM962 137h1v1h-1zM963 136h1v1h-1zM964 135h1v1h-1zM965 134h1v1h-1zM966 133h2v1h-2zM968 132h1v1h-1zM969 131h1v1h-1zM970 130h2v1h-2zM972 129h2v1h-2zM974 128h2v1h-2zM976 127h1v1h-1zM977 126h1v1h-1zM978 125h2v1h-2zM980 124h1v1h-1zM981 123h1v1h-1zM982 122h2v1h-2zM984 121h2v1h-2zM986 120h2v1h-2zM988 119h1v1h-1zM989 118h2v1h-2zM991 117h1v1h-1zM992 116h2v1h-2zM994 115h2v1h-2zM996 114h2v1h-2zM998 113h2v1h-2zM1000 112h2v1h-2zM1002 111h2v1h-2zM1004 110h2v1h-2zM1006 109h4v1h-4zM1010 110h6v1h-6zM1016 109h12v1h-12zM1028 108h6v1h-6zM1034 107h6v1h-6zM1040 108h6v1h-6zM1046 107h6v1h-6zM1052 106h18v1h-18zM1070 105h6v1h-6zM1076 104h12v1h-12zM1088 105h6v1h-6zM1094 104h4v1h-4zM1098 103h3v1h-3zM1101 102h3v1h-3zM1104 101h3v1h-3zM1107 100h5v1h-5zM1112 99h4v1h-4zM1116 98h3v1h-3zM1119 97h5v1h-5zM1124 96h6v1h-6zM1130 95h10v1h-10zM1140 94h3v1h-3zM1143 93h2v1h-2zM1145 92h2v1h-2zM1147 91h1v1h-1zM1148 90h2v1h-2zM1150 89h2v1h-2zM1152 88h3v1h-3zM1155 87h5v1h-5zM1160 86h12v1h-12zM1172 85h6v1h-6zM1178 84h12v1h-12zM1190 83h6v1h-6zM1196 82h6v1h-6zM1202 83h6v1h-6zM1208 84h6v1h-6zM1214 85h6v1h-6zM1220 86h10v1h-10zM1230 87h2v1h-2zM1232 88h2v1h-2zM1234 89h1v1h-1zM1235 88h1v1h-1zM1236 87h1v1h-1zM1237 86h1v1h-1zM1238 85h1v1h-1zM1239 84h1v1h-1zM1240 83h1v1h-1zM1241 82h1v1h-1zM1242 81h1v1h-1zM1243 79h1v1h-1zM1243 80h1v1h-1z" fill="#00ff00"/>
<path d="M0 96h1v1h-1zM1 95h1v1h-1zM2 94h2v1h-2zM4 93h19v1h-19zM23 92h2v1h-2zM25 91h1v1h-1zM26 90h2v1h-2zM28 89h2v1h-2zM30 88h3v1h-3zM33 87h3v1h-3zM36 86h2v1h-2zM38 85h2v1h-2zM40 84h2v1h-2zM42 83h3v1h-3zM45 82h2v1h-2zM47 81h2v1h-2zM49 80h1v1h-1zM50 79h2v1h-2zM52 78h2v1h-2zM54 79h3v1h-3zM57 80h3v1h-3zM60 79h3v1h-3zM63 78h2v1h-2zM65 79h1v1h-1zM66 80h1v1h-1zM67 81h1v1h-1zM68 82h1v1h-1zM69 83h1v1h-1zM70 84h2v1h-2zM72 85h2v1h-2zM74 86h2v1h-2zM76 87h1v1h-1zM77 88h2v1h-2zM79 89h1v1h-1zM80 90h2v1h-2zM82 91h7v1h-7zM89 92h1v1h-1zM90 93h1v1h-1zM91 94h1v1h-1zM91 95h1v1h-1zM92 96h1v1h-1zM93 97h1v1h-1zM94 98h7v1h-7zM101 97h2v1h-2zM103 96h1v1h-1zM104 95h2v1h-2zM106 94h2v1h-2zM108 95h3v1h-3zM111 96h2v1h-2zM113 97h1v1h-1zM113 98h1v1h-1zM114 99h1v1h-1zM115 100h1v1h-1zM115 101h1v1h-1zM116 102h1v1h-1zM117 103h1v1h-1zM117 104h1v1h-1zM118 105h2v1h-2zM120 106h3v1h-3zM123 107h3v1h-3zM126 108h3v1h-3zM129 109h2v1h-2zM131 110h1v1h-1zM132 111h1v1h-1zM133 112h1v1h-1zM133 113h1v1h-1zM134 114h1v1h-1zM135 115h1v1h-1zM136 116h2v1h-2zM138 117h3v1h-3zM141 118h2v1h-2zM143 117h1v1h-1zM144 116h1v1h-1zM145 114h1v1h-1zM145 115h1v1h-1zM146 113h1v1h-1zM147 112h1v1h-1zM148 111h1v1h-1zM149 110h1v1h-1zM150 109h1v1h-1zM151 108h1v1h-1zM152 107h1v1h-1zM153 106h1v1h-1zM154 105h2v1h-2zM156 104h3v1h-3zM159 103h2v1h-2zM161 102h1v1h-1zM162 101h2v1h-2zM164 100h1v1h-1zM165 99h1v1h-1zM166 98h1v1h-1zM167 97h1v1h-1zM168 96h2v1h-2zM170 95h1v1h-1zM171 94h1v1h-1zM172 93h2v1h-2zM174 94h2v1h-2zM176 95h2v1h-2zM178 96h1v1h-1zM179 97h1v1h-1zM180 98h1v1h-1zM181 99h1v1h-1zM182 100h1v1h-1zM183 101h1v1h-1zM184 102h2v1h-2zM186 103h2v1h-2zM188 104h2v1h-2zM190 105h1v1h-1zM191 106h1v1h-1zM192 107h1v1h-1zM193 108h1v1h-1zM194 109h1v1h-1zM195 110h1v1h-1zM196 111h1v1h-1zM197 112h1v1h-1zM198 113h1v1h-1zM199 114h1v1h-1zM199 115h1v1h-1zM200 116h1v1h-1zM201 117h1v1h-1zM202 118h2v1h-2zM204 117h3v1h-3zM207 116h3v1h-3zM210 115h3v1h-3zM213 114h3v1h-3zM216 113h3v1h-3zM219 112h3v1h-3zM222 111h2v1h-2zM224 110h2v1h-2zM226 109h1v1h-1zM227 108h2v1h-2zM229 107h1v1h-1zM230 106h2v1h-2zM232 105h8v1h-8zM240 104h3v1h-3zM243 103h5v1h-5zM248 102h16v1h-16zM264 101h3v1h-3zM267 100h2v1h-2zM269 99h2v1h-2zM271 98h1v1h-1zM272 97h2v1h-2zM274 96h2v1h-2zM276 95h3v1h-3zM279 94h9v1h-9zM288 93h2v1h-2zM290 92h2v1h-2zM292 91h2v1h-2zM294 92h2v1h-2zM296 93h2v1h-2zM298 94h1v1h-1zM299 95h1v1h-1zM300 96h1v1h-1zM301 97h1v1h-1zM302 98h1v1h-1zM303 99h1v1h-1zM304 100h2v1h-2zM306 101h2v1h-2zM308 102h2v1h-2zM310 103h7v1h-7zM317 104h2v1h-2zM319 105h1v1h-1zM320 106h2v1h-2zM322 107h2v1h-2zM324 106h3v1h-3zM327 105h9v1h-9zM336 104h3v1h-3zM339 103h3v1h-3zM342 104h3v1h-3zM345 105h14v1h-14zM359 104h1v1h-1zM360 103h2v1h-2zM362 102h1v1h-1zM363 101h1v1h-1zM364 100h2v1h-2zM366 99h3v1h-3zM369 98h2v1h-2zM371 97h1v1h-1zM372 96h2v1h-2zM374 95h1v1h-1zM375 94h1v1h-1zM376 93h1v1h-1zM377 92h1v1h-1zM378 91h1v1h-1zM379 90h1v1h-1zM380 89h1v1h-1zM381 88h1v1h-1zM382 87h7v1h-7zM389 88h2v1h-2zM391 89h1v1h-1zM392 90h2v1h-2zM394 91h1v1h-1zM395 92h1v1h-1zM396 93h2v1h-2zM398 94h1v1h-1zM399 95h1v1h-1zM400 96h1v1h-1zM401 97h1v1h-1zM401 98h1v1h-1zM402 99h1v1h-1zM402 100h1v1h-1zM403 101h1v1h-1zM403 102h1v1h-1zM404 103h1v1h-1zM404 104h1v1h-1zM405 105h1v1h-1zM405 106h1v1h-1zM406 107h1v1h-1zM406 108h1v1h-1zM407 109h1v1h-1zM407 110h1v1h-1zM407 111h1v1h-1zM407 112h1v1h-1zM408 113h1v1h-1zM408 114h1v1h-1zM408 115h1v1h-1zM409 116h1v1h-1zM409 117h1v1h-1zM409 118h1v1h-1zM409 119h1v1h-1zM410 120h1v1h-1zM410 121h1v1h-1zM410 122h1v1h-1zM411 123h1v1h-1zM411 124h1v1h-1zM411 125h1v1h-1zM411 126h1v1h-1zM412 127h1v1h-1zM412 128h1v1h-1zM412 129h1v1h-1zM413 130h1v1h-1zM413 131h1v1h-1zM413 132h1v1h-1zM414 133h1v1h-1zM414 134h1v1h-1zM414 135h1v1h-1zM415 136h1v1h-1zM415 137h1v1h-1zM415 138h1v1h-1zM416 139h1v1h-1zM416 140h1v1h-1zM416 141h1v1h-1zM417 142h1v1h-1zM417 143h1v1h-1zM417 144h1v1h-1zM418 145h1v1h-1zM418 146h1v1h-1zM418 147h1v1h-1zM419 148h1v1h-1zM419 149h1v1h-1zM419 150h1v1h-1zM419 151h1v1h-1zM420 152h1v1h-1zM420 153h1v1h-1zM420 154h1v1h-1zM421 155h1v1h-1zM421 156h1v1h-1zM421 157h1v1h-1zM422 158h1v1h-1zM422 159h1v1h-1zM422 160h1v1h-1zM422 161h1v1h-1zM423 162h1v1h-1zM423 163h1v1h-1zM423 164h1v1h-1zM424 165h1v1h-1zM424 166h1v1h-1zM424 167h1v1h-1zM425 168h1v1h-1zM425 169h1v1h-1zM426 170h1v1h-1zM426 171h1v1h-1zM427 172h1v1h-1zM427 173h1v1h-1zM427 174h1v1h-1zM428 175h1v1h-1zM428 176h1v1h-1zM429 177h1v1h-1zM429 178h1v1h-1zM430 179h1v1h-1zM430 180h1v1h-1zM430 181h1v1h-1zM431 182h1v1h-1zM431 183h1v1h-1zM432 184h1v1h-1zM432 185h1v1h-1zM433 186h1v1h-1zM433 187h1v1h-1zM433 188h1v1h-1zM434 189h1v1h-1zM434 190h1v1h-1zM435 191h1v1h-1zM435 192h1v1h-1zM436 193h1v1h-1zM436 194h1v1h-1zM437 195h1v1h-1zM438 196h1v1h-1zM439 197h1v1h-1zM440 198h1v1h-1zM441 199h1v1h-1zM442 200h2v1h-2zM444 199h3v1h-3zM447 198h2v1h-2zM449 197h2v1h-2zM451 196h1v1h-1zM452 195h2v1h-2zM454 194h7v1h-7zM461 193h1v1h-1zM462 192h1v1h-1zM463 190h1v1h-1zM463 191h1v1h-1zM464 189h1v1h-1zM465 188h1v1h-1zM466 187h1v1h-1zM467 186h1v1h-1zM468 185h2v1h-2zM470 184h1v1h-1zM471 183h1v1h-1zM472 182h2v1h-2zM474 181h3v1h-3zM477 180h2v1h-2zM479 179h1v1h-1zM480 178h1v1h-1zM481 176h1v1h-1zM481 177h1v1h-1zM482 175h1v1h-1zM483 174h1v1h-1zM484 173h1v1h-1zM485 171h1v1h-1zM485 172h1v1h-1zM486 170h1v1h-1zM487 168h1v1h-1zM487 169h1v1h-1zM488 167h1v1h-1zM489 165h1v1h-1zM489 166h1v1h-1zM490 164h1v1h-1zM491 163h2v1h-2zM493 162h1v1h-1zM494 161h2v1h-2zM496 160h1v1h-1zM497 158h1v1h-1zM497 159h1v1h-1zM498 157h1v1h-1zM499 155h1v1h-1zM499 156h1v1h-1zM500 154h1v1h-1zM501 152h1v1h-1zM501 153h1v1h-1zM502 151h2v1h-2zM504 150h2v1h-2zM506 149h2v1h-2zM508 148h2v1h-2zM510 149h3v1h-3zM513 150h5v1h-5zM518 151h9v1h-9zM527 152h2v1h-2zM529 153h1v1h-1zM530 154h2v1h-2zM532 155h14v1h-14zM546 156h3v1h-3zM549 157h3v1h-3zM552 156h3v1h-3zM555 155h3v1h-3zM558 154h3v1h-3zM561 153h3v1h-3zM564 152h3v1h-3zM567 151h5v1h-5zM572 150h3v1h-3zM575 149h2v1h-2zM577 148h1v1h-1zM578 147h2v1h-2zM580 146h8v1h-8zM588 147h3v1h-3zM591 148h3v1h-3zM594 149h3v1h-3zM597 150h3v1h-3zM600 151h2v1h-2zM602 152h2v1h-2zM604 153h1v1h-1zM605 154h1v1h-1zM606 155h1v1h-1zM607 156h1v1h-1zM608 157h1v1h-1zM609 158h1v1h-1zM610 159h1v1h-1zM611 160h1v1h-1zM612 161h2v1h-2zM614 162h1v1h-1zM615 163h1v1h-1zM616 164h2v1h-2zM618 165h3v1h-3zM621 166h5v1h-5zM626 167h12v1h-12zM638 166h4v1h-4zM642 165h3v1h-3zM645 164h3v1h-3zM648 165h2v1h-2zM650 166h2v1h-2zM652 167h1v1h-1zM653 168h2v1h-2zM655 169h1v1h-1zM656 170h2v1h-2zM658 171h2v1h-2zM660 172h3v1h-3zM663 173h3v1h-3zM666 174h3v1h-3zM669 175h3v1h-3zM672 176h2v1h-2zM674 177h2v1h-2zM676 178h8v1h-8zM684 177h3v1h-3zM687 176h5v1h-5zM692 175h10v1h-10zM702 174h3v1h-3zM705 173h2v1h-2zM707 172h2v1h-2zM709 171h1v1h-1zM710 170h2v1h-2zM712 169h2v1h-2zM714 168h3v1h-3zM717 167h3v1h-3zM720 168h3v1h-3zM723 169h14v1h-14zM737 170h2v1h-2zM739 171h1v1h-1zM740 172h2v1h-2zM742 173h2v1h-2zM744 174h2v1h-2zM746 175h2v1h-2zM748 176h2v1h-2zM750 177h3v1h-3zM753 178h3v1h-3zM756 177h3v1h-3zM759 176h11v1h-11zM770 175h3v1h-3zM773 174h2v1h-2zM775 173h1v1h-1zM776 172h2v1h-2zM778 171h2v1h-2zM780 170h3v1h-3zM783 169h9v1h-9zM792 168h2v1h-2zM794 167h2v1h-2zM796 166h28v1h-28zM824 167h6v1h-6zM830 166h10v1h-10zM840 165h3v1h-3zM843 164h3v1h-3zM846 165h3v1h-3zM849 166h3v1h-3zM852 167h2v1h-2zM854 168h2v1h-2zM856 169h2v1h-2zM858 170h3v1h-3zM861 171h3v1h-3zM864 172h3v1h-3zM867 173h3v1h-3zM870 174h3v1h-3zM873 175h9v1h-9zM882 174h3v1h-3zM885 173h15v1h-15zM900 172h3v1h-3zM903 171h8v1h-8zM911 170h2v1h-2zM913 169h1v1h-1zM914 168h2v1h-2zM916 167h2v1h-2zM918 166h2v1h-2zM920 165h2v1h-2zM922 164h1v1h-1zM923 163h1v1h-1zM924 162h2v1h-2zM926 161h1v1h-1zM927 160h1v1h-1zM928 159h2v1h-2zM930 158h3v1h-3zM933 157h2v1h-2zM935 155h1v1h-1zM935 156h1v1h-1zM936 154h1v1h-1zM937 152h1v1h-1zM937 153h1v1h-1zM938 151h1v1h-1zM939 149h1v1h-1zM939 150h1v1h-1zM940 148h1v1h-1zM941 147h1v1h-1zM942 146h2v1h-2zM944 145h1v1h-1zM945 144h1v1h-1zM946 142h1v1h-1zM946 143h1v1h-1zM947 140h1v1h-1zM947 141h1v1h-1zM948 138h1v1h-1zM948 139h1v1h-1zM949 136h1v1h-1zM949 137h1v1h-1zM950 134h1v1h-1zM950 135h1v1h-1zM951 132h1v1h-1zM951 133h1v1h-1zM952 130h1v1h-1zM952 131h1v1h-1zM953 129h1v1h-1zM954 128h1v1h-1zM955 126h1v1h-1zM955 127h1v1h-1zM956 125h1v1h-1zM957 124h1v1h-1zM958 123h1v1h-1zM959 121h1v1h-1zM959 122h1v1h-1zM960 120h1v1h-1zM961 118h1v1h-1zM961 119h1v1h-1zM962 117h1v1h-1zM963 115h1v1h-1zM963 116h1v1h-1zM964 114h2v1h-2zM966 113h3v1h-3zM969 112h5v1h-5zM974 111h4v1h-4zM978 112h2v1h-2zM980 113h2v1h-2zM982 114h2v1h-2zM984 115h3v1h-3zM987 116h8v1h-8zM995 115h2v1h-2zM997 114h1v1h-1zM998 113h2v1h-2zM1000 112h1v1h-1zM1001 111h1v1h-1zM1002 110h2v1h-2zM1004 109h1v1h-1zM1005 108h1v1h-1zM1006 107h2v1h-2zM1008 106h3v1h-3zM1011 105h3v1h-3zM1014 104h2v1h-2zM1016 103h2v1h-2zM1018 102h10v1h-10zM1028 103h3v1h-3zM1031 104h2v1h-2zM1033 105h1v1h-1zM1034 106h2v1h-2zM1036 107h1v1h-1zM1037 108h2v1h-2zM1039 109h1v1h-1zM1040 110h2v1h-2zM1042 111h4v1h-4zM1046 112h6v1h-6zM1052 111h4v1h-4zM1056 110h3v1h-3zM1059 109h2v1h-2zM1061 108h2v1h-2zM1063 107h1v1h-1zM1064 106h2v1h-2zM1066 105h1v1h-1zM1067 104h1v1h-1zM1068 103h2v1h-2zM1070 102h1v1h-1zM1071 101h1v1h-1zM1072 100h1v1h-1zM1073 99h2v1h-2zM1075 98h1v1h-1zM1076 97h2v1h-2zM1078 96h2v1h-2zM1080 97h3v1h-3zM1083 98h2v1h-2zM1085 99h2v1h-2zM1087 100h1v1h-1zM1088 101h2v1h-2zM1090 102h4v1h-4zM1094 103h16v1h-16zM1110 102h2v1h-2zM1112 101h2v1h-2zM1114 100h1v1h-1zM1115 99h1v1h-1zM1116 98h1v1h-1zM1117 96h1v1h-1zM1117 97h1v1h-1zM1118 95h1v1h-1zM1119 94h1v1h-1zM1120 93h1v1h-1zM1121 92h2v1h-2zM1123 91h1v1h-1zM1124 90h2v1h-2zM1126 89h2v1h-2zM1128 88h3v1h-3zM1131 87h11v1h-11zM1142 86h22v1h-22zM1164 85h3v1h-3zM1167 84h9v1h-9zM1176 83h3v1h-3zM1179 82h9v1h-9zM1188 81h3v1h-3zM1191 80h9v1h-9zM1200 81h3v1h-3zM1203 82h2v1h-2zM1205 83h2v1h-2zM1207 84h1v1h-1zM1208 85h2v1h-2zM1210 86h4v1h-4zM1214 87h3v1h-3zM1217 88h2v1h-2zM1219 89h1v1h-1zM1220 90h2v1h-2zM1222 91h2v1h-2zM1224 92h3v1h-3zM1227 93h3v1h-3zM1230 94h2v1h-2zM1232 95h3v1h-3zM1234 96h1v1h-1zM1235 92h1v1h-1zM1235 93h1v1h-1zM1235 94h1v1h-1zM1236 90h1v1h-1zM1236 91h1v1h-1zM1237 87h1v1h-1zM1237 88h1v1h-1zM1237 89h1v1h-1zM1238 84h1v1h-1zM1238 85h1v1h-1zM1238 86h1v1h-1zM1239 82h1v1h-1zM1239 83h1v1h-1zM1240 79h1v1h-1zM1240 80h1v1h-1zM1240 81h1v1h-1zM1241 76h1v1h-1zM1241 77h1v1h-1zM1241 78h1v1h-1zM1242 74h1v1h-1zM1242 75h1v1h-1zM1243 71h1v1h-1zM1243 72h1v1h-1zM1243 73h1v1h-1z" fill="#ff0000"/>
<polyline points="-1.5,106.6 4.5,106.6 10.5,106.6 16.5,102.1 22.5,97.7 28.5,93.2 34.5,84.3 40.5,84.3 46.5,84.3 52.5,84.3 58.5,84.3 64.5,84.3 70.5,88.8 76.5,88.8 82.5,88.8 88.5,88.8 94.5,88.8 100.5,88.8 106.5,88.8 112.5,93.2 118.5,102.1 124.5,111.0 130.5,111.0 136.5,111.0 142.5,111.0 148.5,111.0 154.5,111.0 160.5,111.0 166.5,111.0 172.5,111.0 178.5,111.0 184.5,111.0 190.5,111.0 196.5,111.0 202.5,111.0 208.5,111.0 214.5,111.0 220.5,111.0 226.5,111.0 232.5,111.0 238.5,106.6 244.5,106.6 250.5,106.6 256.5,102.1 262.5,102.1 268.5,102.1 274.5,102.1 280.5,102.1 286.5,102.1 292.5,97.7 298.5,93.2 304.5,93.2 310.5,97.7 316.5,97.7 322.5,97.7 328.5,97.7 334.5,97.7 340.5,97.7 346.5,97.7 352.5,106.6 358.5,106.6 364.5,93.2 370.5,93.2 376.5,93.2 382.5,93.2 388.5,93.2 394.5,93.2 400.5,97.7 406.5,111.0 412.5,133.2 418.5,137.7 424.5,137.7 430.5,142.2 436.5,146.6 442.5,159.9 448.5,159.9 454.5,168.9 460.5,177.8 466.5,195.6 472.5,195.6 478.5,195.6 484.5,177.8 490.5,177.8 496.5,173.3 502.5,168.9 508.5,168.9 514.5,168.9 520.5,159.9 526.5,155.5 532.5,151.1 538.5,151.1 544.5,151.1 550.5,151.1 556.5,151.1 562.5,151.1 568.5,151.1 574.5,151.1 580.5,151.1 586.5,151.1 592.5,151.1 598.5,155.5 604.5,155.5 610.5,155.5 616.5,155.5 622.5,155.5 628.5,155.5 634.5,159.9 640.5,159.9 646.5,164.4 652.5,168.9 658.5,168.9 664.5,173.3 670.5,173.3 676.5,173.3 682.5,173.3 688.5,177.8 694.5,177.8 700.5,177.8 706.5,177.8 712.5,177.8 718.5,173.3 724.5,173.3 730.5,173.3 736.5,173.3 742.5,173.3 748.5,177.8 754.5,177.8 760.5,177.8 766.5,177.8 772.5,177.8 778.5,177.8 784.5,177.8 790.5,177.8 796.5,173.3 802.5,173.3 808.5,173.3 814.5,173.3 820.5,173.3 826.5,168.9 832.5,164.4 838.5,164.4 844.5,164.4 850.5,168.9 856.5,168.9 862.5,168.9 868.5,168.9 874.5,168.9 880.5,168.9 886.5,168.9 892.5,168.9 898.5,173.3 904.5,168.9 910.5,168.9 916.5,168.9 922.5,164.4 928.5,159.9 934.5,159.9 940.5,151.1 946.5,146.6 952.5,133.2 958.5,133.2 964.5,133.2 970.5,128.8 976.5,124.3 982.5,124.3 988.5,124.3 994.5,111.0 1000.5,111.0 1006.5,111.0 1012.5,111.0 1018.5,111.0 1024.5,111.0 1030.5,111.0 1036.5,111.0 1042.5,111.0 1048.5,111.0 1054.5,111.0 1060.5,106.6 1066.5,106.6 1072.5,106.6 1078.5,106.6 1084.5,106.6 1090.5,106.6 1096.5,106.6 1102.5,102.1 1108.5,102.1 1114.5,102.1 1120.5,102.1 1126.5,102.1 1132.5,102.1 1138.5,102.1 1144.5,97.7 1150.5,93.2 1156.5,88.8 1162.5,88.8 1168.5,84.3 1174.5,84.3 1180.5,84.3 1186.5,84.3 1192.5,84.3 1198.5,84.3 1204.5,84.3 1210.5,84.3 1216.5,88.8 1222.5,88.8 1228.5,88.8 1234.5,93.2 1240.5,66.5 1246.5,57.6" fill="none" stroke="#ff0000" stroke-width="3" stroke-linejoin="round"/>
<polyline points="-1.5,139.5 4.5,133.2 10.5,124.3 16.5,119.9 22.5,119.9 28.5,115.5 34.5,102.1 40.5,102.1 46.5,102.1 52.5,102.1 58.5,102.1 64.5,97.7 70.5,97.7 76.5,97.7 82.5,97.7 88.5,97.7 94.5,97.7 100.5,97.7 106.5,97.7 112.5,97.7 118.5,102.1 124.5,102.1 130.5,102.1 136.5,102.1 142.5,102.1 148.5,102.1 154.5,102.1 160.5,102.1 166.5,102.1 172.5,102.1 178.5,102.1 184.5,102.1 190.5,102.1 196.5,102.1 202.5,102.1 208.5,102.1 214.5,106.6 220.5,106.6 226.5,111.0 232.5,111.0 238.5,111.0 244.5,111.0 250.5,111.0 256.5,111.0 262.5,111.0 268.5,111.0 274.5,111.0 280.5,111.0 286.5,111.0 292.5,106.6 298.5,106.6 304.5,106.6 310.5,106.6 316.5,106.6 322.5,106.6 328.5,106.6 334.5,106.6 340.5,102.1 346.5,102.1 352.5,102.1 358.5,97.7 364.5,97.7 370.5,97.7 376.5,97.7 382.5,97.7 388.5,97.7 394.5,97.7 400.5,97.7 406.5,111.0 412.5,133.2 418.5,137.7 424.5,137.7 430.5,142.2 436.5,146.6 442.5,146.6 448.5,146.6 454.5,146.6 460.5,146.6 466.5,146.6 472.5,146.6 478.5,146.6 484.5,146.6 490.5,146.6 496.5,146.6 502.5,146.6 508.5,146.6 514.5,146.6 520.5,146.6 526.5,146.6 532.5,146.6 538.5,146.6 544.5,159.9 550.5,159.9 556.5,168.9 562.5,177.8 568.5,177.8 574.5,177.8 580.5,177.8 586.5,177.8 592.5,177.8 598.5,173.3 604.5,168.9 610.5,168.9 616.5,168.9 622.5,159.9 628.5,155.5 634.5,155.5 640.5,155.5 646.5,155.5 652.5,159.9 658.5,159.9 664.5,164.4 670.5,164.4 676.5,164.4 682.5,164.4 688.5,164.4 694.5,164.4 700.5,164.4 706.5,164.4 712.5,164.4 718.5,164.4 724.5,164.4 730.5,164.4 736.5,168.9 742.5,168.9 748.5,173.3 754.5,173.3 760.5,173.3 766.5,173.3 772.5,173.3 778.5,173.3 784.5,173.3 790.5,177.8 796.5,173.3 802.5,173.3 808.5,173.3 814.5,173.3 820.5,173.3 826.5,173.3 832.5,173.3 838.5,173.3 844.5,173.3 850.5,173.3 856.5,173.3 862.5,173.3 868.5,173.3 874.5,173.3 880.5,173.3 886.5,173.3 892.5,173.3 898.5,173.3 904.5,173.3 910.5,168.9 916.5,168.9 922.5,164.4 928.5,159.9 934.5,159.9 940.5,151.1 946.5,146.6 952.5,137.7 958.5,137.7 964.5,137.7 970.5,137.7 976.5,137.7 982.5,137.7 988.5,137.7 994.5,137.7 1000.5,137.7 1006.5,137.7 1012.5,137.7 1018.5,137.7 1024.5,137.7 1030.5,137.7 1036.5,137.7 1042.5,137.7 1048.5,137.7 1054.5,133.2 1060.5,128.8 1066.5,128.8 1072.5,124.3 1078.5,119.9 1084.5,119.9 1090.5,119.9 1096.5,106.6 1102.5,106.6 1108.5,106.6 1114.5,106.6 1120.5,106.6 1126.5,106.6 1132.5,106.6 1138.5,106.6 1144.5,106.6 1150.5,106.6 1156.5,102.1 1162.5,102.1 1168.5,102.1 1174.5,102.1 1180.5,102.1 1186.5,102.1 1192.5,102.1 1198.5,102.1 1204.5,97.7 1210.5,97.7 1216.5,97.7 1222.5,97.7 1228.5,97.7 1234.5,97.7 1240.5,71.0 1246.5,62.0" fill="none" stroke="#0000ff" stroke-width="3" stroke-linejoin="round"/>
<polyline points="-1.5,93.2 4.5,93.2 10.5,102.1 16.5,93.2 22.5,84.3 28.5,111.0 34.5,119.9 40.5,119.9 46.5,119.9 52.5,119.9 58.5,102.1 64.5,111.0 70.5,111.0 76.5,102.1 82.5,102.1 88.5,102.1 94.5,102.1 100.5,102.1 106.5,102.1 112.5,102.1 118.5,93.2 124.5,84.3 130.5,93.2 136.5,102.1 142.5,84.3 148.5,111.0 154.5,111.0 160.5,111.0 166.5,102.1 172.5,102.1 178.5,102.1 184.5,111.0 190.5,102.1 196.5,111.0 202.5,102.1 208.5,102.1 214.5,84.3 220.5,93.2 226.5,84.3 232.5,75.4 238.5,102.1 244.5,102.1 250.5,119.9 256.5,137.7 262.5,182.2 268.5,191.1 274.5,200.0 280.5,191.1 286.5,208.9 292.5,208.9 298.5,182.2 304.5,182.2 310.5,191.1 316.5,173.3 322.5,182.2 328.5,173.3 334.5,146.6 340.5,146.6 346.5,155.5 352.5,137.7 358.5,155.5 364.5,155.5 370.5,155.5 376.5,155.5 382.5,155.5 388.5,155.5 394.5,155.5 400.5,164.4 406.5,146.6 412.5,146.6 418.5,146.6 424.5,146.6 430.5,146.6 436.5,146.6 442.5,155.5 448.5,155.5 454.5,164.4 460.5,173.3 466.5,173.3 472.5,164.4 478.5,164.4 484.5,164.4 490.5,164.4 496.5,164.4 502.5,182.2 508.5,182.2 514.5,173.3 520.5,173.3 526.5,182.2 532.5,182.2 538.5,173.3 544.5,164.4 550.5,173.3 556.5,173.3 562.5,164.4 568.5,164.4 574.5,173.3 580.5,173.3 586.5,173.3 592.5,182.2 598.5,182.2 604.5,182.2 610.5,164.4 616.5,173.3 622.5,173.3 628.5,164.4 634.5,173.3 640.5,164.4 646.5,155.5 652.5,173.3 658.5,164.4 664.5,173.3 670.5,164.4 676.5,164.4 682.5,164.4 688.5,164.4 694.5,164.4 700.5,173.3 706.5,182.2 712.5,173.3 718.5,173.3 724.5,173.3 730.5,173.3 736.5,173.3 742.5,173.3 748.5,173.3 754.5,164.4 760.5,173.3 766.5,155.5 772.5,155.5 778.5,146.6 784.5,155.5 790.5,128.8 796.5,128.8 802.5,93.2 808.5,111.0 814.5,111.0 820.5,119.9 826.5,119.9 832.5,111.0 838.5,119.9 844.5,111.0 850.5,102.1 856.5,93.2 862.5,102.1 868.5,102.1 874.5,111.0 880.5,111.0 886.5,111.0 892.5,119.9 898.5,111.0 904.5,102.1 910.5,102.1 916.5,93.2 922.5,93.2 928.5,93.2 934.5,111.0 940.5,119.9 946.5,102.1 952.5,93.2 958.5,93.2 964.5,93.2 970.5,84.3 976.5,84.3 982.5,84.3 988.5,93.2 994.5,84.3 1000.5,84.3 1006.5,84.3 1012.5,84.3 1018.5,84.3 1024.5,84.3 1030.5,75.4 1036.5,84.3 1042.5,75.4 1048.5,84.3 1054.5,93.2 1060.5,93.2 1066.5,93.2 1072.5,93.2 1078.5,93.2 1084.5,111.0 1090.5,20.2 1096.5,21.1 1102.5,8.6 1108.5,22.0 1114.5,30.9 1120.5,39.8 1126.5,22.0 1132.5,8.6 1138.5,8.6 1144.5,19.3 1150.5,30.9 1156.5,30.9 1162.5,30.9 1168.5,48.7 1174.5,79.8 1180.5,102.1 1186.5,75.4 1192.5,84.3 1198.5,93.2 1204.5,93.2 1210.5,75.4 1216.5,75.4 1222.5,84.3 1228.5,84.3 1234.5,84.3 1240.5,93.2 1246.5,75.4" fill="none" stroke="#009400" stroke-width="3" stroke-linejoin="round"/>
<rect x="4" y="139" width="1" height="17" fill="#0000ff"/>
<rect x="10" y="139" width="1" height="17" fill="#0000ff"/>
<rect x="16" y="139" width="1" height="18" fill="#0000ff"/>
<rect x="22" y="139" width="1" height="22" fill="#0000ff"/>
<rect x="28" y="139" width="1" height="22" fill="#0000ff"/>
<rect x="34" y="139" width="1" height="20" fill="#0000ff"/>
<rect x="40" y="139" width="1" height="20" fill="#0000ff"/>
<rect x="46" y="139" width="1" height="22" fill="#0000ff"/>
<rect x="52" y="139" width="1" height="19" fill="#0000ff"/>
<rect x="58" y="139" width="1" height="9" fill="#0000ff"/>
<rect x="64" y="139" width="1" height="7" fill="#0000ff"/>
<rect x="70" y="139" width="1" height="4" fill="#0000ff"/>
<rect x="76" y="139" width="1" height="3" fill="#0000ff"/>
<rect x="100" y="134" width="1" height="4" fill="#ff0000"/>
<rect x="106" y="132" width="1" height="6" fill="#ff0000"/>
<rect x="112" y="131" width="1" height="7" fill="#ff0000"/>
<rect x="118" y="131" width="1" height="7" fill="#ff0000"/>
<rect x="124" y="131" width="1" height="7" fill="#ff0000"/>
<rect x="130" y="131" width="1" height="7" fill="#ff0000"/>
<rect x="136" y="122" width="1" height="16" fill="#ff0000"/>
<rect x="142" y="122" width="1" height="16" fill="#ff0000"/>
<rect x="148" y="122" width="1" height="16" fill="#ff0000"/>
<rect x="154" y="119" width="1" height="19" fill="#ff0000"/>
<rect x="160" y="115" width="1" height="23" fill="#ff0000"/>
<rect x="166" y="111" width="1" height="32" fill="#ff0000"/>
<rect x="172" y="108" width="1" height="39" fill="#ff0000"/>
<rect x="178" y="104" width="1" height="39" fill="#ff0000"/>
<rect x="184" y="93" width="1" height="45" fill="#ff0000"/>
<rect x="190" y="93" width="1" height="45" fill="#ff0000"/>
<rect x="196" y="93" width="1" height="45" fill="#ff0000"/>
<rect x="202" y="93" width="1" height="45" fill="#ff0000"/>
<rect x="208" y="93" width="1" height="45" fill="#ff0000"/>
<rect x="214" y="90" width="1" height="48" fill="#ff0000"/>
<rect x="220" y="93" width="1" height="45" fill="#ff0000"/>
<rect x="226" y="93" width="1" height="45" fill="#ff0000"/>
<rect x="232" y="93" width="1" height="45" fill="#ff0000"/>
<rect x="238" y="93" width="1" height="45" fill="#ff0000"/>
<rect x="244" y="93" width="1" height="45" fill="#ff0000"/>
<rect x="250" y="93" width="1" height="45" fill="#ff0000"/>
<rect x="256" y="93" width="1" height="41" fill="#ff0000"/>
<rect x="262" y="95" width="1" height="34" fill="#ff0000"/>
<rect x="268" y="102" width="1" height="27" fill="#ff0000"/>
<rect x="274" y="106" width="1" height="23" fill="#ff0000"/>
<rect x="280" y="106" width="1" height="23" fill="#ff0000"/>
<rect x="286" y="106" width="1" height="23" fill="#ff0000"/>
<rect x="292" y="106" width="1" height="23" fill="#ff0000"/>
<rect x="298" y="106" width="1" height="23" fill="#ff0000"/>
<rect x="304" y="106" width="1" height="23" fill="#ff0000"/>
<rect x="310" y="106" width="1" height="19" fill="#ff0000"/>
<rect x="316" y="106" width="1" height="10" fill="#ff0000"/>
<rect x="322" y="106" width="1" height="6" fill="#ff0000"/>
<rect x="328" y="106" width="1" height="6" fill="#ff0000"/>
<rect x="334" y="106" width="1" height="6" fill="#ff0000"/>
<rect x="340" y="104" width="1" height="3" fill="#0000ff"/>
<rect x="346" y="104" width="1" height="3" fill="#0000ff"/>
<rect x="352" y="104" width="1" height="3" fill="#0000ff"/>
<rect x="358" y="104" width="1" height="3" fill="#0000ff"/>
<rect x="364" y="104" width="1" height="5" fill="#0000ff"/>
<rect x="370" y="104" width="1" height="5" fill="#0000ff"/>
<rect x="376" y="104" width="1" height="8" fill="#0000ff"/>
<rect x="382" y="104" width="1" height="8" fill="#0000ff"/>
<rect x="388" y="104" width="1" height="5" fill="#0000ff"/>
<rect x="394" y="104" width="1" height="5" fill="#0000ff"/>
<rect x="400" y="104" width="1" height="5" fill="#0000ff"/>
<rect x="406" y="104" width="1" height="3" fill="#0000ff"/>
<rect x="412" y="104" width="1" height="3" fill="#0000ff"/>
<rect x="418" y="104" width="1" height="3" fill="#0000ff"/>
<rect x="424" y="104" width="1" height="3" fill="#0000ff"/>
<rect x="430" y="104" width="1" height="3" fill="#0000ff"/>
<rect x="436" y="104" width="1" height="3" fill="#0000ff"/>
<rect x="448" y="99" width="1" height="4" fill="#ff0000"/>
<rect x="454" y="99" width="1" height="4" fill="#ff0000"/>
<rect x="490" y="99" width="1" height="4" fill="#ff0000"/>
<rect x="496" y="99" width="1" height="4" fill="#ff0000"/>
<rect x="502" y="104" width="1" height="1" fill="#0000ff"/>
<rect x="514" y="95" width="1" height="8" fill="#ff0000"/>
<rect x="520" y="95" width="1" height="12" fill="#ff0000"/>
<rect x="526" y="95" width="1" height="12" fill="#ff0000"/>
<rect x="532" y="95" width="1" height="12" fill="#ff0000"/>
<rect x="538" y="95" width="1" height="12" fill="#ff0000"/>
<rect x="544" y="95" width="1" height="12" fill="#ff0000"/>
<rect x="550" y="97" width="1" height="10" fill="#ff0000"/>
<rect x="592" y="148" width="1" height="6" fill="#0000ff"/>
<rect x="598" y="148" width="1" height="6" fill="#0000ff"/>
<rect x="604" y="148" width="1" height="10" fill="#0000ff"/>
<rect x="610" y="148" width="1" height="15" fill="#0000ff"/>
<rect x="616" y="148" width="1" height="24" fill="#0000ff"/>
<rect x="622" y="148" width="1" height="24" fill="#0000ff"/>
<rect x="628" y="148" width="1" height="24" fill="#0000ff"/>
<rect x="634" y="148" width="1" height="15" fill="#0000ff"/>
<rect x="640" y="148" width="1" height="15" fill="#0000ff"/>
<rect x="646" y="148" width="1" height="12" fill="#0000ff"/>
<rect x="652" y="148" width="1" height="10" fill="#0000ff"/>
<rect x="658" y="148" width="1" height="10" fill="#0000ff"/>
<rect x="664" y="148" width="1" height="10" fill="#0000ff"/>
<rect x="670" y="148" width="1" height="6" fill="#0000ff"/>
<rect x="676" y="148" width="1" height="4" fill="#0000ff"/>
<rect x="682" y="148" width="1" height="1" fill="#0000ff"/>
<rect x="688" y="148" width="1" height="1" fill="#0000ff"/>
<rect x="694" y="148" width="1" height="8" fill="#0000ff"/>
<rect x="700" y="148" width="1" height="8" fill="#0000ff"/>
<rect x="706" y="148" width="1" height="12" fill="#0000ff"/>
<rect x="712" y="148" width="1" height="17" fill="#0000ff"/>
<rect x="718" y="148" width="1" height="17" fill="#0000ff"/>
<rect x="724" y="148" width="1" height="17" fill="#0000ff"/>
<rect x="730" y="148" width="1" height="17" fill="#0000ff"/>
<rect x="736" y="148" width="1" height="17" fill="#0000ff"/>
<rect x="742" y="148" width="1" height="17" fill="#0000ff"/>
<rect x="748" y="148" width="1" height="17" fill="#0000ff"/>
<rect x="754" y="148" width="1" height="15" fill="#0000ff"/>
<rect x="760" y="148" width="1" height="15" fill="#0000ff"/>
<rect x="766" y="148" width="1" height="15" fill="#0000ff"/>
<rect x="772" y="148" width="1" height="10" fill="#0000ff"/>
<rect x="778" y="148" width="1" height="8" fill="#0000ff"/>
<rect x="784" y="148" width="1" height="10" fill="#0000ff"/>
<rect x="790" y="148" width="1" height="10" fill="#0000ff"/>
<rect x="796" y="148" width="1" height="12" fill="#0000ff"/>
<rect x="802" y="148" width="1" height="17" fill="#0000ff"/>
<rect x="808" y="148" width="1" height="17" fill="#0000ff"/>
<rect x="814" y="148" width="1" height="21" fill="#0000ff"/>
<rect x="820" y="148" width="1" height="21" fill="#0000ff"/>
<rect x="826" y="148" width="1" height="21" fill="#0000ff"/>
<rect x="832" y="148" width="1" height="21" fill="#0000ff"/>
<rect x="838" y="148" width="1" height="24" fill="#0000ff"/>
<rect x="844" y="148" width="1" height="24" fill="#0000ff"/>
<rect x="850" y="161" width="1" height="11" fill="#0000ff"/>
<rect x="856" y="161" width="1" height="11" fill="#0000ff"/>
<rect x="862" y="170" width="1" height="2" fill="#0000ff"/>
<rect x="868" y="168" width="1" height="10" fill="#ff0000"/>
<rect x="874" y="168" width="1" height="10" fill="#ff0000"/>
<rect x="880" y="168" width="1" height="10" fill="#ff0000"/>
<rect x="886" y="171" width="1" height="7" fill="#ff0000"/>
<rect x="892" y="171" width="1" height="7" fill="#ff0000"/>
<rect x="898" y="175" width="1" height="3" fill="#ff0000"/>
<rect x="904" y="175" width="1" height="1" fill="#0000ff"/>
<rect x="910" y="170" width="1" height="6" fill="#0000ff"/>
<rect x="916" y="170" width="1" height="6" fill="#0000ff"/>
<rect x="922" y="170" width="1" height="6" fill="#0000ff"/>
<rect x="928" y="166" width="1" height="10" fill="#0000ff"/>
<rect x="934" y="166" width="1" height="10" fill="#0000ff"/>
<rect x="940" y="166" width="1" height="12" fill="#0000ff"/>
<rect x="946" y="166" width="1" height="8" fill="#0000ff"/>
<rect x="952" y="166" width="1" height="8" fill="#0000ff"/>
<rect x="958" y="166" width="1" height="8" fill="#0000ff"/>
<rect x="964" y="166" width="1" height="8" fill="#0000ff"/>
<rect x="970" y="166" width="1" height="8" fill="#0000ff"/>
<rect x="976" y="166" width="1" height="6" fill="#0000ff"/>
<rect x="982" y="166" width="1" height="3" fill="#0000ff"/>
<rect x="988" y="166" width="1" height="3" fill="#0000ff"/>
<rect x="994" y="166" width="1" height="3" fill="#0000ff"/>
<rect x="1000" y="166" width="1" height="6" fill="#0000ff"/>
<rect x="1006" y="166" width="1" height="6" fill="#0000ff"/>
<rect x="1012" y="166" width="1" height="6" fill="#0000ff"/>
<rect x="1018" y="166" width="1" height="6" fill="#0000ff"/>
<rect x="1024" y="166" width="1" height="6" fill="#0000ff"/>
<rect x="1030" y="166" width="1" height="6" fill="#0000ff"/>
<rect x="1036" y="166" width="1" height="6" fill="#0000ff"/>
<rect x="1042" y="170" width="1" height="2" fill="#0000ff"/>
<rect x="1048" y="170" width="1" height="4" fill="#0000ff"/>
<rect x="1054" y="171" width="1" height="3" fill="#ff0000"/>
<rect x="1060" y="168" width="1" height="6" fill="#ff0000"/>
<rect x="1066" y="168" width="1" height="6" fill="#ff0000"/>
<rect x="1072" y="164" width="1" height="5" fill="#ff0000"/>
<rect x="1078" y="159" width="1" height="6" fill="#ff0000"/>
<rect x="1084" y="159" width="1" height="6" fill="#ff0000"/>
<rect x="1090" y="151" width="1" height="5" fill="#ff0000"/>
<rect x="1096" y="146" width="1" height="6" fill="#ff0000"/>
<rect x="1102" y="135" width="1" height="8" fill="#ff0000"/>
<rect x="1108" y="135" width="1" height="8" fill="#ff0000"/>
<rect x="1114" y="135" width="1" height="8" fill="#ff0000"/>
<rect x="1120" y="133" width="1" height="10" fill="#ff0000"/>
<rect x="1126" y="131" width="1" height="12" fill="#ff0000"/>
<rect x="1132" y="131" width="1" height="12" fill="#ff0000"/>
<rect x="1138" y="131" width="1" height="12" fill="#ff0000"/>
<rect x="1144" y="124" width="1" height="19" fill="#ff0000"/>
<rect x="1150" y="124" width="1" height="19" fill="#ff0000"/>
<rect x="1156" y="124" width="1" height="19" fill="#ff0000"/>
<rect x="1162" y="124" width="1" height="19" fill="#ff0000"/>
<rect x="1168" y="124" width="1" height="19" fill="#ff0000"/>
<rect x="1174" y="124" width="1" height="19" fill="#ff0000"/>
<rect x="1180" y="124" width="1" height="19" fill="#ff0000"/>
<rect x="1186" y="124" width="1" height="19" fill="#ff0000"/>
<rect x="1192" y="124" width="1" height="19" fill="#ff0000"/>
<rect x="1198" y="124" width="1" height="19" fill="#ff0000"/>
<rect x="1204" y="122" width="1" height="21" fill="#ff0000"/>
<rect x="1210" y="117" width="1" height="21" fill="#ff0000"/>
<rect x="1216" y="117" width="1" height="17" fill="#ff0000"/>
<rect x="1222" y="115" width="1" height="19" fill="#ff0000"/>
<rect x="1228" y="113" width="1" height="21" fill="#ff0000"/>
<rect x="1234" y="113" width="1" height="21" fill="#ff0000"/>
<rect x="1240" y="113" width="1" height="21" fill="#ff0000"/>
<path d="M0 155h14v1h-14zM14 156h3v1h-3zM17 157h2v1h-2zM19 158h1v1h-1zM20 159h2v1h-2zM22 160h8v1h-8zM30 159h3v1h-3zM33 158h9v1h-9zM42 159h3v1h-3zM45 160h3v1h-3zM48 159h2v1h-2zM50 158h2v1h-2zM52 157h1v1h-1zM53 155h1v1h-1zM53 156h1v1h-1zM54 153h1v1h-1zM54 154h1v1h-1zM55 152h1v1h-1zM56 150h1v1h-1zM56 151h1v1h-1zM57 148h1v1h-1zM57 149h1v1h-1zM58 147h2v1h-2zM60 146h3v1h-3zM63 145h3v1h-3zM66 144h2v1h-2zM68 143h2v1h-2zM70 142h4v1h-4zM74 141h3v1h-3zM77 140h2v1h-2zM79 139h1v1h-1zM80 138h2v1h-2zM82 137h10v1h-10zM92 136h4v1h-4zM96 135h3v1h-3zM99 134h3v1h-3zM102 133h3v1h-3zM105 132h5v1h-5zM110 131h21v1h-21zM131 129h1v1h-1zM131 130h1v1h-1zM132 128h1v1h-1zM133 126h1v1h-1zM133 127h1v1h-1zM134 125h1v1h-1zM135 123h1v1h-1zM135 124h1v1h-1zM136 122h14v1h-14zM150 121h2v1h-2zM152 120h2v1h-2zM154 119h1v1h-1zM155 118h2v1h-2zM157 117h1v1h-1zM158 116h2v1h-2zM160 115h1v1h-1zM161 114h2v1h-2zM163 113h1v1h-1zM164 112h2v1h-2zM166 111h2v1h-2zM168 110h2v1h-2zM170 109h2v1h-2zM172 108h1v1h-1zM173 107h2v1h-2zM175 106h1v1h-1zM176 105h2v1h-2zM178 104h1v1h-1zM179 102h1v1h-1zM179 103h1v1h-1zM180 100h1v1h-1zM180 101h1v1h-1zM181 98h1v1h-1zM181 99h1v1h-1zM182 96h1v1h-1zM182 97h1v1h-1zM183 94h1v1h-1zM183 95h1v1h-1zM184 93h26v1h-26zM210 92h2v1h-2zM212 91h2v1h-2zM214 90h2v1h-2zM216 91h2v1h-2zM218 92h2v1h-2zM220 93h38v1h-38zM258 94h3v1h-3zM261 95h2v1h-2zM263 96h1v1h-1zM264 97h1v1h-1zM265 98h1v1h-1zM265 99h1v1h-1zM266 100h1v1h-1zM267 101h1v1h-1zM268 102h1v1h-1zM269 103h2v1h-2zM271 104h1v1h-1zM272 105h2v1h-2zM274 106h86v1h-86zM360 107h3v1h-3zM363 108h9v1h-9zM372 109h2v1h-2zM374 110h2v1h-2zM376 111h8v1h-8zM384 110h2v1h-2zM386 109h2v1h-2zM388 108h14v1h-14zM402 107h3v1h-3zM405 106h32v1h-32zM437 105h2v1h-2zM439 104h1v1h-1zM440 103h2v1h-2zM442 102h2v1h-2zM444 101h2v1h-2zM446 100h2v1h-2zM448 99h8v1h-8zM456 100h2v1h-2zM458 101h2v1h-2zM460 102h26v1h-26zM486 101h2v1h-2zM488 100h2v1h-2zM490 99h7v1h-7zM497 100h1v1h-1zM498 101h2v1h-2zM500 102h1v1h-1zM501 103h1v1h-1zM502 104h2v1h-2zM504 103h3v1h-3zM507 102h2v1h-2zM509 101h1v1h-1zM510 100h1v1h-1zM511 98h1v1h-1zM511 99h1v1h-1zM512 97h1v1h-1zM513 96h1v1h-1zM514 95h32v1h-32zM546 96h3v1h-3zM549 97h2v1h-2zM550 98h1v1h-1zM551 99h1v1h-1zM551 100h1v1h-1zM552 101h1v1h-1zM552 102h1v1h-1zM553 103h1v1h-1zM553 104h1v1h-1zM553 105h1v1h-1zM554 106h1v1h-1zM554 107h1v1h-1zM555 108h1v1h-1zM555 109h1v1h-1zM556 110h1v1h-1zM556 111h1v1h-1zM556 112h1v1h-1zM557 113h1v1h-1zM557 114h1v1h-1zM557 115h1v1h-1zM557 116h1v1h-1zM558 117h1v1h-1zM558 118h1v1h-1zM558 119h1v1h-1zM558 120h1v1h-1zM559 121h1v1h-1zM559 122h1v1h-1zM559 123h1v1h-1zM560 124h1v1h-1zM560 125h1v1h-1zM560 126h1v1h-1zM560 127h1v1h-1zM561 128h1v1h-1zM561 129h1v1h-1zM561 130h1v1h-1zM561 131h1v1h-1zM562 132h1v1h-1zM562 133h1v1h-1zM563 134h2v1h-2zM565 135h1v1h-1zM566 136h2v1h-2zM568 137h7v1h-7zM575 138h1v1h-1zM576 139h2v1h-2zM578 140h1v1h-1zM579 141h1v1h-1zM580 142h1v1h-1zM581 143h2v1h-2zM583 144h1v1h-1zM584 145h2v1h-2zM586 146h1v1h-1zM587 147h1v1h-1zM588 148h1v1h-1zM589 149h1v1h-1zM589 150h1v1h-1zM590 151h1v1h-1zM591 152h1v1h-1zM592 153h7v1h-7zM599 154h2v1h-2zM601 155h1v1h-1zM602 156h2v1h-2zM604 157h1v1h-1zM605 158h1v1h-1zM606 159h2v1h-2zM608 160h1v1h-1zM609 161h1v1h-1zM610 162h1v1h-1zM611 163h1v1h-1zM611 164h1v1h-1zM612 165h1v1h-1zM613 166h1v1h-1zM613 167h1v1h-1zM614 168h1v1h-1zM615 169h1v1h-1zM615 170h1v1h-1zM616 171h13v1h-13zM629 169h1v1h-1zM629 170h1v1h-1zM630 168h1v1h-1zM631 166h1v1h-1zM631 167h1v1h-1zM632 165h1v1h-1zM633 163h1v1h-1zM633 164h1v1h-1zM634 162h8v1h-8zM642 161h2v1h-2zM644 160h2v1h-2zM646 159h2v1h-2zM648 158h3v1h-3zM651 157h14v1h-14zM665 156h2v1h-2zM667 155h1v1h-1zM668 154h2v1h-2zM670 153h2v1h-2zM672 152h3v1h-3zM675 151h3v1h-3zM678 150h2v1h-2zM680 149h2v1h-2zM682 148h7v1h-7zM689 149h1v1h-1zM690 150h1v1h-1zM691 151h1v1h-1zM691 152h1v1h-1zM692 153h1v1h-1zM693 154h1v1h-1zM694 155h7v1h-7zM701 156h2v1h-2zM703 157h1v1h-1zM704 158h2v1h-2zM706 159h1v1h-1zM707 160h1v1h-1zM708 161h2v1h-2zM710 162h1v1h-1zM711 163h1v1h-1zM712 164h38v1h-38zM750 163h3v1h-3zM753 162h14v1h-14zM767 161h1v1h-1zM768 160h2v1h-2zM770 159h1v1h-1zM771 158h1v1h-1zM772 157h2v1h-2zM774 156h3v1h-3zM777 155h3v1h-3zM780 156h3v1h-3zM783 157h9v1h-9zM792 158h3v1h-3zM795 159h2v1h-2zM797 160h1v1h-1zM798 161h2v1h-2zM800 162h1v1h-1zM801 163h1v1h-1zM802 164h7v1h-7zM809 165h2v1h-2zM811 166h1v1h-1zM812 167h2v1h-2zM814 168h20v1h-20zM834 169h2v1h-2zM836 170h2v1h-2zM838 171h26v1h-26zM864 170h2v1h-2zM866 169h2v1h-2zM868 168h14v1h-14zM882 169h2v1h-2zM884 170h2v1h-2zM886 171h7v1h-7zM893 172h2v1h-2zM895 173h1v1h-1zM896 174h2v1h-2zM898 175h38v1h-38zM936 176h3v1h-3zM939 177h2v1h-2zM941 176h2v1h-2zM943 175h1v1h-1zM944 174h2v1h-2zM946 173h26v1h-26zM972 172h3v1h-3zM975 171h3v1h-3zM978 170h2v1h-2zM980 169h2v1h-2zM982 168h14v1h-14zM996 169h2v1h-2zM998 170h2v1h-2zM1000 171h44v1h-44zM1044 172h3v1h-3zM1047 173h3v1h-3zM1050 172h3v1h-3zM1053 171h3v1h-3zM1056 170h2v1h-2zM1058 169h2v1h-2zM1060 168h7v1h-7zM1067 167h2v1h-2zM1069 166h1v1h-1zM1070 165h2v1h-2zM1072 164h1v1h-1zM1073 163h1v1h-1zM1074 162h2v1h-2zM1076 161h1v1h-1zM1077 160h1v1h-1zM1078 159h7v1h-7zM1085 157h1v1h-1zM1085 158h1v1h-1zM1086 156h1v1h-1zM1087 155h1v1h-1zM1088 153h1v1h-1zM1088 154h1v1h-1zM1089 152h1v1h-1zM1090 151h1v1h-1zM1091 150h1v1h-1zM1092 149h2v1h-2zM1094 148h1v1h-1zM1095 147h1v1h-1zM1096 146h1v1h-1zM1097 144h1v1h-1zM1097 145h1v1h-1zM1098 142h1v1h-1zM1098 143h1v1h-1zM1099 140h1v1h-1zM1099 141h1v1h-1zM1100 138h1v1h-1zM1100 139h1v1h-1zM1101 136h1v1h-1zM1101 137h1v1h-1zM1102 135h14v1h-14zM1116 134h3v1h-3zM1119 133h3v1h-3zM1122 132h3v1h-3zM1125 131h14v1h-14zM1139 130h1v1h-1zM1140 129h1v1h-1zM1141 127h1v1h-1zM1141 128h1v1h-1zM1142 126h1v1h-1zM1143 125h1v1h-1zM1144 124h56v1h-56zM1200 123h3v1h-3zM1203 122h2v1h-2zM1205 121h1v1h-1zM1206 120h2v1h-2zM1208 119h1v1h-1zM1209 118h1v1h-1zM1210 117h8v1h-8zM1218 116h3v1h-3zM1221 115h3v1h-3zM1224 114h3v1h-3zM1227 113h14v1h-14zM1241 112h1v1h-1zM1242 111h1v1h-1zM1243 109h1v1h-1zM1243 110h1v1h-1z" fill="#00ffff"/>
<path d="M0 137h161v1h-161zM161 138h1v1h-1zM162 139h2v1h-2zM164 140h1v1h-1zM165 141h1v1h-1zM166 142h1v1h-1zM167 143h2v1h-2zM169 144h1v1h-1zM170 145h2v1h-2zM172 146h1v1h-1zM173 145h2v1h-2zM175 144h1v1h-1zM176 143h2v1h-2zM178 142h1v1h-1zM179 141h1v1h-1zM180 140h2v1h-2zM182 139h1v1h-1zM183 138h1v1h-1zM184 137h67v1h-67zM251 136h2v1h-2zM253 135h1v1h-1zM254 134h2v1h-2zM256 133h1v1h-1zM257 132h1v1h-1zM258 131h2v1h-2zM260 130h1v1h-1zM261 129h1v1h-1zM262 128h43v1h-43zM305 127h2v1h-2zM307 126h1v1h-1zM308 125h2v1h-2zM310 124h1v1h-1zM311 122h1v1h-1zM311 123h1v1h-1zM312 121h1v1h-1zM313 119h1v1h-1zM313 120h1v1h-1zM314 118h1v1h-1zM315 116h1v1h-1zM315 117h1v1h-1zM316 115h1v1h-1zM317 114h2v1h-2zM319 113h1v1h-1zM320 112h2v1h-2zM322 111h13v1h-13zM335 109h1v1h-1zM335 110h1v1h-1zM336 108h1v1h-1zM337 106h1v1h-1zM337 107h1v1h-1zM338 105h1v1h-1zM339 103h1v1h-1zM339 104h1v1h-1zM340 102h175v1h-175zM515 103h2v1h-2zM517 104h1v1h-1zM518 105h2v1h-2zM520 106h31v1h-31zM551 107h1v1h-1zM552 108h2v1h-2zM554 109h1v1h-1zM555 110h1v1h-1zM556 111h1v1h-1zM556 112h1v1h-1zM557 113h1v1h-1zM557 114h1v1h-1zM557 115h1v1h-1zM557 116h1v1h-1zM558 117h1v1h-1zM558 118h1v1h-1zM558 119h1v1h-1zM558 120h1v1h-1zM559 121h1v1h-1zM559 122h1v1h-1zM559 123h1v1h-1zM560 124h1v1h-1zM560 125h1v1h-1zM560 126h1v1h-1zM560 127h1v1h-1zM561 128h1v1h-1zM561 129h1v1h-1zM561 130h1v1h-1zM561 131h1v1h-1zM562 132h1v1h-1zM562 133h1v1h-1zM563 134h2v1h-2zM565 135h1v1h-1zM566 136h2v1h-2zM568 137h7v1h-7zM575 138h1v1h-1zM576 139h2v1h-2zM578 140h1v1h-1zM579 141h1v1h-1zM580 142h1v1h-1zM581 143h2v1h-2zM583 144h1v1h-1zM584 145h2v1h-2zM586 146h259v1h-259zM844 147h1v1h-1zM845 148h1v1h-1zM845 149h1v1h-1zM846 150h1v1h-1zM846 151h1v1h-1zM847 152h1v1h-1zM847 153h1v1h-1zM848 154h1v1h-1zM848 155h1v1h-1zM849 156h1v1h-1zM849 157h1v1h-1zM850 158h1v1h-1zM850 159h7v1h-7zM857 160h1v1h-1zM857 161h1v1h-1zM858 162h1v1h-1zM859 163h1v1h-1zM859 164h1v1h-1zM860 165h1v1h-1zM861 166h1v1h-1zM861 167h1v1h-1zM862 168h1v1h-1zM863 169h1v1h-1zM863 170h1v1h-1zM864 171h1v1h-1zM865 172h1v1h-1zM865 173h1v1h-1zM866 174h1v1h-1zM867 175h1v1h-1zM867 176h1v1h-1zM868 177h31v1h-31zM899 176h2v1h-2zM901 175h1v1h-1zM902 174h2v1h-2zM904 173h1v1h-1zM905 172h1v1h-1zM906 171h2v1h-2zM908 170h1v1h-1zM909 169h1v1h-1zM910 168h13v1h-13zM923 167h2v1h-2zM925 166h1v1h-1zM926 165h2v1h-2zM928 164h109v1h-109zM1037 165h2v1h-2zM1039 166h1v1h-1zM1040 167h2v1h-2zM1042 168h7v1h-7zM1049 169h1v1h-1zM1050 170h2v1h-2zM1052 171h1v1h-1zM1053 172h1v1h-1zM1054 173h13v1h-13zM1067 172h1v1h-1zM1068 171h2v1h-2zM1070 170h1v1h-1zM1071 169h1v1h-1zM1072 168h1v1h-1zM1073 167h2v1h-2zM1075 166h1v1h-1zM1076 165h2v1h-2zM1078 164h7v1h-7zM1085 162h1v1h-1zM1085 163h1v1h-1zM1086 161h1v1h-1zM1087 159h1v1h-1zM1087 160h1v1h-1zM1088 158h1v1h-1zM1089 156h1v1h-1zM1089 157h1v1h-1zM1090 155h1v1h-1zM1091 154h2v1h-2zM1093 153h1v1h-1zM1094 152h2v1h-2zM1096 151h1v1h-1zM1097 149h1v1h-1zM1097 150h1v1h-1zM1098 148h1v1h-1zM1099 146h1v1h-1zM1099 147h1v1h-1zM1100 145h1v1h-1zM1101 143h1v1h-1zM1101 144h1v1h-1zM1102 142h103v1h-103zM1205 141h1v1h-1zM1206 140h2v1h-2zM1208 139h1v1h-1zM1209 138h1v1h-1zM1210 137h1v1h-1zM1211 136h2v1h-2zM1213 135h1v1h-1zM1214 134h2v1h-2zM1216 133h28v1h-28z" fill="#ff0000"/>
<rect x="4" y="84" width="1" height="10" fill="#0000ff"/>
<rect x="3" y="93" width="3" height="1" fill="#0000ff"/>
<rect x="10" y="84" width="1" height="19" fill="#0000ff"/>
<rect x="9" y="93" width="3" height="1" fill="#0000ff"/>
<rect x="16" y="84" width="1" height="19" fill="#0000ff"/>
<rect x="15" y="93" width="3" height="1" fill="#0000ff"/>
<rect x="22" y="84" width="1" height="19" fill="#0000ff"/>
<rect x="21" y="93" width="3" height="1" fill="#0000ff"/>
<rect x="28" y="75" width="1" height="19" fill="#ff0000"/>
<rect x="27" y="75" width="3" height="19" fill="#ff0000"/>
<rect x="34" y="66" width="1" height="28" fill="#0000ff"/>
<rect x="33" y="75" width="3" height="10" fill="#0000ff"/>
<rect x="40" y="75" width="1" height="19" fill="#ff0000"/>
<rect x="39" y="75" width="3" height="10" fill="#ff0000"/>
<rect x="46" y="75" width="1" height="19" fill="#0000ff"/>
<rect x="45" y="84" width="3" height="1" fill="#0000ff"/>
<rect x="52" y="66" width="1" height="19" fill="#ff0000"/>
<rect x="51" y="75" width="3" height="10" fill="#ff0000"/>
<rect x="58" y="66" width="1" height="28" fill="#0000ff"/>
<rect x="57" y="66" width="3" height="19" fill="#0000ff"/>
<rect x="64" y="75" width="1" height="10" fill="#ff0000"/>
<rect x="63" y="75" width="3" height="10" fill="#ff0000"/>
<rect x="70" y="75" width="1" height="37" fill="#0000ff"/>
<rect x="69" y="84" width="3" height="19" fill="#0000ff"/>
<rect x="76" y="93" width="1" height="19" fill="#0000ff"/>
<rect x="75" y="102" width="3" height="1" fill="#0000ff"/>
<rect x="82" y="93" width="1" height="10" fill="#ff0000"/>
<rect x="81" y="93" width="3" height="10" fill="#ff0000"/>
<rect x="88" y="84" width="1" height="19" fill="#ff0000"/>
<rect x="87" y="84" width="3" height="10" fill="#ff0000"/>
<rect x="94" y="84" width="1" height="28" fill="#0000ff"/>
<rect x="93" y="93" width="3" height="19" fill="#0000ff"/>
<rect x="100" y="84" width="1" height="28" fill="#ff0000"/>
<rect x="99" y="102" width="3" height="1" fill="#ff0000"/>
<rect x="106" y="84" width="1" height="19" fill="#ff0000"/>
<rect x="105" y="84" width="3" height="10" fill="#ff0000"/>
<rect x="112" y="84" width="1" height="28" fill="#0000ff"/>
<rect x="111" y="84" width="3" height="19" fill="#0000ff"/>
<rect x="118" y="93" width="1" height="45" fill="#0000ff"/>
<rect x="117" y="111" width="3" height="18" fill="#0000ff"/>
<rect x="124" y="111" width="1" height="18" fill="#ff0000"/>
<rect x="123" y="119" width="3" height="10" fill="#ff0000"/>
<rect x="130" y="111" width="1" height="9" fill="#ff0000"/>
<rect x="129" y="111" width="3" height="9" fill="#ff0000"/>
<rect x="136" y="111" width="1" height="18" fill="#0000ff"/>
<rect x="135" y="119" width="3" height="1" fill="#0000ff"/>
<rect x="142" y="111" width="1" height="9" fill="#ff0000"/>
<rect x="141" y="111" width="3" height="9" fill="#ff0000"/>
<rect x="148" y="84" width="1" height="36" fill="#ff0000"/>
<rect x="147" y="93" width="3" height="27" fill="#ff0000"/>
<rect x="154" y="84" width="1" height="19" fill="#0000ff"/>
<rect x="153" y="93" width="3" height="1" fill="#0000ff"/>
<rect x="160" y="84" width="1" height="19" fill="#0000ff"/>
<rect x="159" y="93" width="3" height="10" fill="#0000ff"/>
<rect x="166" y="93" width="1" height="19" fill="#ff0000"/>
<rect x="165" y="93" width="3" height="1" fill="#ff0000"/>
<rect x="172" y="84" width="1" height="10" fill="#ff0000"/>
<rect x="171" y="84" width="3" height="10" fill="#ff0000"/>
<rect x="178" y="84" width="1" height="36" fill="#0000ff"/>
<rect x="177" y="84" width="3" height="28" fill="#0000ff"/>
<rect x="184" y="111" width="1" height="27" fill="#0000ff"/>
<rect x="183" y="119" width="3" height="1" fill="#0000ff"/>
<rect x="190" y="111" width="1" height="18" fill="#0000ff"/>
<rect x="189" y="119" width="3" height="1" fill="#0000ff"/>
<rect x="196" y="102" width="1" height="27" fill="#0000ff"/>
<rect x="195" y="119" width="3" height="1" fill="#0000ff"/>
<rect x="202" y="111" width="1" height="18" fill="#0000ff"/>
<rect x="201" y="119" width="3" height="1" fill="#0000ff"/>
<rect x="208" y="93" width="1" height="19" fill="#ff0000"/>
<rect x="207" y="102" width="3" height="10" fill="#ff0000"/>
<rect x="214" y="102" width="1" height="10" fill="#0000ff"/>
<rect x="213" y="102" width="3" height="10" fill="#0000ff"/>
<rect x="220" y="102" width="1" height="10" fill="#0000ff"/>
<rect x="219" y="111" width="3" height="1" fill="#0000ff"/>
<rect x="226" y="102" width="1" height="10" fill="#ff0000"/>
<rect x="225" y="102" width="3" height="10" fill="#ff0000"/>
<rect x="232" y="84" width="1" height="28" fill="#0000ff"/>
<rect x="231" y="102" width="3" height="1" fill="#0000ff"/>
<rect x="238" y="102" width="1" height="10" fill="#ff0000"/>
<rect x="237" y="102" width="3" height="10" fill="#ff0000"/>
<rect x="244" y="84" width="1" height="36" fill="#0000ff"/>
<rect x="243" y="102" width="3" height="1" fill="#0000ff"/>
<rect x="250" y="102" width="1" height="10" fill="#ff0000"/>
<rect x="249" y="102" width="3" height="10" fill="#ff0000"/>
<rect x="256" y="93" width="1" height="19" fill="#0000ff"/>
<rect x="255" y="102" width="3" height="1" fill="#0000ff"/>
<rect x="262" y="93" width="1" height="10" fill="#0000ff"/>
<rect x="261" y="102" width="3" height="1" fill="#0000ff"/>
<rect x="268" y="93" width="1" height="10" fill="#ff0000"/>
<rect x="267" y="93" width="3" height="1" fill="#ff0000"/>
<rect x="274" y="84" width="1" height="19" fill="#ff0000"/>
<rect x="273" y="84" width="3" height="10" fill="#ff0000"/>
<rect x="280" y="84" width="1" height="28" fill="#0000ff"/>
<rect x="279" y="84" width="3" height="10" fill="#0000ff"/>
<rect x="286" y="84" width="1" height="19" fill="#0000ff"/>
<rect x="285" y="102" width="3" height="1" fill="#0000ff"/>
<rect x="292" y="75" width="1" height="19" fill="#ff0000"/>
<rect x="291" y="84" width="3" height="10" fill="#ff0000"/>
<rect x="298" y="75" width="1" height="37" fill="#0000ff"/>
<rect x="297" y="84" width="3" height="28" fill="#0000ff"/>
<rect x="304" y="93" width="1" height="19" fill="#0000ff"/>
<rect x="303" y="111" width="3" height="1" fill="#0000ff"/>
<rect x="310" y="102" width="1" height="18" fill="#0000ff"/>
<rect x="309" y="111" width="3" height="1" fill="#0000ff"/>
<rect x="316" y="93" width="1" height="19" fill="#ff0000"/>
<rect x="315" y="102" width="3" height="1" fill="#ff0000"/>
<rect x="322" y="93" width="1" height="19" fill="#0000ff"/>
<rect x="321" y="102" width="3" height="1" fill="#0000ff"/>
<rect x="328" y="93" width="1" height="19" fill="#0000ff"/>
<rect x="327" y="102" width="3" height="1" fill="#0000ff"/>
<rect x="334" y="102" width="1" height="10" fill="#0000ff"/>
<rect x="333" y="102" width="3" height="10" fill="#0000ff"/>
<rect x="340" y="102" width="1" height="10" fill="#ff0000"/>
<rect x="339" y="102" width="3" height="10" fill="#ff0000"/>
<rect x="346" y="93" width="1" height="19" fill="#0000ff"/>
<rect x="345" y="102" width="3" height="10" fill="#0000ff"/>
<rect x="352" y="93" width="1" height="19" fill="#ff0000"/>
<rect x="351" y="102" width="3" height="10" fill="#ff0000"/>
<rect x="358" y="93" width="1" height="14" fill="#0000ff"/>
<rect x="357" y="102" width="3" height="1" fill="#0000ff"/>
<rect x="364" y="75" width="1" height="28" fill="#ff0000"/>
<rect x="363" y="84" width="3" height="19" fill="#ff0000"/>
<rect x="370" y="84" width="1" height="10" fill="#0000ff"/>
<rect x="369" y="84" width="3" height="10" fill="#0000ff"/>
<rect x="376" y="75" width="1" height="19" fill="#ff0000"/>
<rect x="375" y="84" width="3" height="1" fill="#ff0000"/>
<rect x="382" y="75" width="1" height="10" fill="#ff0000"/>
<rect x="381" y="75" width="3" height="10" fill="#ff0000"/>
<rect x="388" y="75" width="1" height="28" fill="#0000ff"/>
<rect x="387" y="84" width="3" height="19" fill="#0000ff"/>
<rect x="394" y="102" width="1" height="10" fill="#0000ff"/>
<rect x="393" y="102" width="3" height="1" fill="#0000ff"/>
<rect x="400" y="102" width="1" height="18" fill="#0000ff"/>
<rect x="399" y="102" width="3" height="18" fill="#0000ff"/>
<rect x="406" y="119" width="1" height="28" fill="#0000ff"/>
<rect x="405" y="119" width="3" height="19" fill="#0000ff"/>
<rect x="412" y="137" width="1" height="55" fill="#0000ff"/>
<rect x="411" y="137" width="3" height="46" fill="#0000ff"/>
<rect x="418" y="182" width="1" height="19" fill="#0000ff"/>
<rect x="417" y="191" width="3" height="1" fill="#0000ff"/>
<rect x="424" y="182" width="1" height="19" fill="#0000ff"/>
<rect x="423" y="191" width="3" height="10" fill="#0000ff"/>
<rect x="430" y="182" width="1" height="27" fill="#ff0000"/>
<rect x="429" y="191" width="3" height="1" fill="#ff0000"/>
<rect x="436" y="191" width="1" height="27" fill="#0000ff"/>
<rect x="435" y="191" width="3" height="18" fill="#0000ff"/>
<rect x="442" y="200" width="1" height="18" fill="#0000ff"/>
<rect x="441" y="208" width="3" height="1" fill="#0000ff"/>
<rect x="448" y="182" width="1" height="27" fill="#ff0000"/>
<rect x="447" y="182" width="3" height="27" fill="#ff0000"/>
<rect x="454" y="182" width="1" height="19" fill="#ff0000"/>
<rect x="453" y="182" width="3" height="10" fill="#ff0000"/>
<rect x="460" y="173" width="1" height="28" fill="#0000ff"/>
<rect x="459" y="182" width="3" height="10" fill="#0000ff"/>
<rect x="466" y="173" width="1" height="28" fill="#ff0000"/>
<rect x="465" y="173" width="3" height="19" fill="#ff0000"/>
<rect x="472" y="173" width="1" height="10" fill="#0000ff"/>
<rect x="471" y="173" width="3" height="10" fill="#0000ff"/>
<rect x="478" y="173" width="1" height="1" fill="#ff0000"/>
<rect x="477" y="173" width="3" height="1" fill="#ff0000"/>
<rect x="484" y="137" width="1" height="19" fill="#ff0000"/>
<rect x="483" y="146" width="3" height="1" fill="#ff0000"/>
<rect x="490" y="137" width="1" height="19" fill="#0000ff"/>
<rect x="489" y="137" width="3" height="10" fill="#0000ff"/>
<rect x="496" y="146" width="1" height="10" fill="#0000ff"/>
<rect x="495" y="155" width="3" height="1" fill="#0000ff"/>
<rect x="502" y="137" width="1" height="19" fill="#ff0000"/>
<rect x="501" y="137" width="3" height="10" fill="#ff0000"/>
<rect x="508" y="146" width="1" height="10" fill="#0000ff"/>
<rect x="507" y="146" width="3" height="10" fill="#0000ff"/>
<rect x="514" y="146" width="1" height="19" fill="#0000ff"/>
<rect x="513" y="155" width="3" height="1" fill="#0000ff"/>
<rect x="520" y="146" width="1" height="10" fill="#0000ff"/>
<rect x="519" y="155" width="3" height="1" fill="#0000ff"/>
<rect x="526" y="146" width="1" height="10" fill="#0000ff"/>
<rect x="525" y="155" width="3" height="1" fill="#0000ff"/>
<rect x="532" y="155" width="1" height="10" fill="#0000ff"/>
<rect x="531" y="155" width="3" height="1" fill="#0000ff"/>
<rect x="538" y="146" width="1" height="10" fill="#0000ff"/>
<rect x="537" y="155" width="3" height="1" fill="#0000ff"/>
<rect x="544" y="146" width="1" height="19" fill="#0000ff"/>
<rect x="543" y="155" width="3" height="1" fill="#0000ff"/>
<rect x="550" y="155" width="1" height="10" fill="#0000ff"/>
<rect x="549" y="155" width="3" height="10" fill="#0000ff"/>
<rect x="556" y="146" width="1" height="10" fill="#ff0000"/>
<rect x="555" y="146" width="3" height="10" fill="#ff0000"/>
<rect x="562" y="137" width="1" height="19" fill="#ff0000"/>
<rect x="561" y="146" width="3" height="10" fill="#ff0000"/>
<rect x="568" y="146" width="1" height="10" fill="#0000ff"/>
<rect x="567" y="146" width="3" height="1" fill="#0000ff"/>
<rect x="574" y="137" width="1" height="10" fill="#0000ff"/>
<rect x="573" y="146" width="3" height="1" fill="#0000ff"/>
<rect x="580" y="137" width="1" height="19" fill="#0000ff"/>
<rect x="579" y="146" width="3" height="1" fill="#0000ff"/>
<rect x="586" y="146" width="1" height="10" fill="#0000ff"/>
<rect x="585" y="146" width="3" height="1" fill="#0000ff"/>
<rect x="592" y="146" width="1" height="19" fill="#0000ff"/>
<rect x="591" y="146" width="3" height="10" fill="#0000ff"/>
<rect x="598" y="155" width="1" height="10" fill="#0000ff"/>
<rect x="597" y="155" width="3" height="1" fill="#0000ff"/>
<rect x="604" y="155" width="1" height="19" fill="#0000ff"/>
<rect x="603" y="164" width="3" height="1" fill="#0000ff"/>
<rect x="610" y="164" width="1" height="10" fill="#0000ff"/>
<rect x="609" y="164" width="3" height="10" fill="#0000ff"/>
<rect x="616" y="164" width="1" height="10" fill="#0000ff"/>
<rect x="615" y="173" width="3" height="1" fill="#0000ff"/>
<rect x="622" y="164" width="1" height="10" fill="#ff0000"/>
<rect x="621" y="164" width="3" height="10" fill="#ff0000"/>
<rect x="628" y="155" width="1" height="19" fill="#0000ff"/>
<rect x="627" y="155" width="3" height="10" fill="#0000ff"/>
<rect x="634" y="164" width="1" height="10" fill="#0000ff"/>
<rect x="633" y="164" width="3" height="1" fill="#0000ff"/>
<rect x="640" y="164" width="1" height="10" fill="#0000ff"/>
<rect x="639" y="164" width="3" height="1" fill="#0000ff"/>
<rect x="646" y="164" width="1" height="10" fill="#ff0000"/>
<rect x="645" y="164" width="3" height="10" fill="#ff0000"/>
<rect x="652" y="164" width="1" height="19" fill="#0000ff"/>
<rect x="651" y="164" width="3" height="19" fill="#0000ff"/>
<rect x="658" y="173" width="1" height="10" fill="#0000ff"/>
<rect x="657" y="182" width="3" height="1" fill="#0000ff"/>
<rect x="664" y="173" width="1" height="19" fill="#ff0000"/>
<rect x="663" y="173" width="3" height="10" fill="#ff0000"/>
<rect x="670" y="173" width="1" height="10" fill="#ff0000"/>
<rect x="669" y="173" width="3" height="10" fill="#ff0000"/>
<rect x="676" y="173" width="1" height="10" fill="#0000ff"/>
<rect x="675" y="173" width="3" height="10" fill="#0000ff"/>
<rect x="682" y="173" width="1" height="10" fill="#0000ff"/>
<rect x="681" y="182" width="3" height="1" fill="#0000ff"/>
<rect x="688" y="164" width="1" height="19" fill="#ff0000"/>
<rect x="687" y="173" width="3" height="1" fill="#ff0000"/>
<rect x="694" y="164" width="1" height="10" fill="#ff0000"/>
<rect x="693" y="164" width="3" height="10" fill="#ff0000"/>
<rect x="700" y="164" width="1" height="10" fill="#0000ff"/>
<rect x="699" y="164" width="3" height="10" fill="#0000ff"/>
<rect x="706" y="164" width="1" height="10" fill="#0000ff"/>
<rect x="705" y="164" width="3" height="10" fill="#0000ff"/>
<rect x="712" y="164" width="1" height="10" fill="#ff0000"/>
<rect x="711" y="164" width="3" height="10" fill="#ff0000"/>
<rect x="718" y="164" width="1" height="10" fill="#ff0000"/>
<rect x="717" y="164" width="3" height="10" fill="#ff0000"/>
<rect x="724" y="164" width="1" height="10" fill="#0000ff"/>
<rect x="723" y="164" width="3" height="10" fill="#0000ff"/>
<rect x="730" y="173" width="1" height="1" fill="#0000ff"/>
<rect x="729" y="173" width="3" height="1" fill="#0000ff"/>
<rect x="736" y="173" width="1" height="10" fill="#0000ff"/>
<rect x="735" y="173" width="3" height="1" fill="#0000ff"/>
<rect x="742" y="173" width="1" height="10" fill="#0000ff"/>
<rect x="741" y="173" width="3" height="10" fill="#0000ff"/>
<rect x="748" y="173" width="1" height="10" fill="#0000ff"/>
<rect x="747" y="173" width="3" height="10" fill="#0000ff"/>
<rect x="754" y="182" width="1" height="10" fill="#0000ff"/>
<rect x="753" y="182" width="3" height="1" fill="#0000ff"/>
<rect x="760" y="164" width="1" height="19" fill="#ff0000"/>
<rect x="759" y="164" width="3" height="19" fill="#ff0000"/>
<rect x="766" y="164" width="1" height="10" fill="#0000ff"/>
<rect x="765" y="173" width="3" height="1" fill="#0000ff"/>
<rect x="772" y="164" width="1" height="19" fill="#0000ff"/>
<rect x="771" y="164" width="3" height="10" fill="#0000ff"/>
<rect x="778" y="164" width="1" height="19" fill="#ff0000"/>
<rect x="777" y="164" width="3" height="10" fill="#ff0000"/>
<rect x="784" y="173" width="1" height="1" fill="#0000ff"/>
<rect x="783" y="173" width="3" height="1" fill="#0000ff"/>
<rect x="790" y="164" width="1" height="10" fill="#ff0000"/>
<rect x="789" y="164" width="3" height="10" fill="#ff0000"/>
<rect x="796" y="155" width="1" height="19" fill="#ff0000"/>
<rect x="795" y="155" width="3" height="19" fill="#ff0000"/>
<rect x="802" y="164" width="1" height="10" fill="#0000ff"/>
<rect x="801" y="164" width="3" height="10" fill="#0000ff"/>
<rect x="808" y="155" width="1" height="19" fill="#ff0000"/>
<rect x="807" y="164" width="3" height="1" fill="#ff0000"/>
<rect x="814" y="164" width="1" height="10" fill="#0000ff"/>
<rect x="813" y="164" width="3" height="10" fill="#0000ff"/>
<rect x="820" y="164" width="1" height="10" fill="#ff0000"/>
<rect x="819" y="164" width="3" height="1" fill="#ff0000"/>
<rect x="826" y="164" width="1" height="10" fill="#0000ff"/>
<rect x="825" y="164" width="3" height="1" fill="#0000ff"/>
<rect x="832" y="164" width="1" height="10" fill="#ff0000"/>
<rect x="831" y="164" width="3" height="1" fill="#ff0000"/>
<rect x="838" y="164" width="1" height="10" fill="#0000ff"/>
<rect x="837" y="164" width="3" height="1" fill="#0000ff"/>
<rect x="844" y="155" width="1" height="10" fill="#0000ff"/>
<rect x="843" y="155" width="3" height="10" fill="#0000ff"/>
<rect x="850" y="164" width="1" height="19" fill="#0000ff"/>
<rect x="849" y="164" width="3" height="10" fill="#0000ff"/>
<rect x="856" y="164" width="1" height="19" fill="#0000ff"/>
<rect x="855" y="173" width="3" height="10" fill="#0000ff"/>
<rect x="862" y="173" width="1" height="10" fill="#ff0000"/>
<rect x="861" y="173" width="3" height="10" fill="#ff0000"/>
<rect x="868" y="173" width="1" height="10" fill="#0000ff"/>
<rect x="867" y="173" width="3" height="1" fill="#0000ff"/>
<rect x="874" y="173" width="1" height="1" fill="#ff0000"/>
<rect x="873" y="173" width="3" height="1" fill="#ff0000"/>
<rect x="880" y="173" width="1" height="10" fill="#0000ff"/>
<rect x="879" y="173" width="3" height="1" fill="#0000ff"/>
<rect x="886" y="173" width="1" height="1" fill="#ff0000"/>
<rect x="885" y="173" width="3" height="1" fill="#ff0000"/>
<rect x="892" y="173" width="1" height="10" fill="#0000ff"/>
<rect x="891" y="173" width="3" height="1" fill="#0000ff"/>
<rect x="898" y="164" width="1" height="19" fill="#ff0000"/>
<rect x="897" y="173" width="3" height="10" fill="#ff0000"/>
<rect x="904" y="155" width="1" height="19" fill="#ff0000"/>
<rect x="903" y="164" width="3" height="1" fill="#ff0000"/>
<rect x="910" y="155" width="1" height="19" fill="#0000ff"/>
<rect x="909" y="164" width="3" height="10" fill="#0000ff"/>
<rect x="916" y="155" width="1" height="19" fill="#ff0000"/>
<rect x="915" y="155" width="3" height="19" fill="#ff0000"/>
<rect x="922" y="146" width="1" height="19" fill="#0000ff"/>
<rect x="921" y="146" width="3" height="10" fill="#0000ff"/>
<rect x="928" y="137" width="1" height="19" fill="#ff0000"/>
<rect x="927" y="146" width="3" height="10" fill="#ff0000"/>
<rect x="934" y="137" width="1" height="19" fill="#0000ff"/>
<rect x="933" y="146" width="3" height="10" fill="#0000ff"/>
<rect x="940" y="119" width="1" height="37" fill="#ff0000"/>
<rect x="939" y="128" width="3" height="28" fill="#ff0000"/>
<rect x="946" y="111" width="1" height="18" fill="#0000ff"/>
<rect x="945" y="128" width="3" height="1" fill="#0000ff"/>
<rect x="952" y="93" width="1" height="36" fill="#ff0000"/>
<rect x="951" y="93" width="3" height="36" fill="#ff0000"/>
<rect x="958" y="93" width="1" height="27" fill="#0000ff"/>
<rect x="957" y="102" width="3" height="10" fill="#0000ff"/>
<rect x="964" y="93" width="1" height="27" fill="#0000ff"/>
<rect x="963" y="111" width="3" height="1" fill="#0000ff"/>
<rect x="970" y="102" width="1" height="18" fill="#0000ff"/>
<rect x="969" y="111" width="3" height="9" fill="#0000ff"/>
<rect x="976" y="111" width="1" height="18" fill="#0000ff"/>
<rect x="975" y="111" width="3" height="9" fill="#0000ff"/>
<rect x="982" y="111" width="1" height="18" fill="#ff0000"/>
<rect x="981" y="111" width="3" height="9" fill="#ff0000"/>
<rect x="988" y="111" width="1" height="18" fill="#0000ff"/>
<rect x="987" y="111" width="3" height="9" fill="#0000ff"/>
<rect x="994" y="111" width="1" height="18" fill="#ff0000"/>
<rect x="993" y="111" width="3" height="9" fill="#ff0000"/>
<rect x="1000" y="102" width="1" height="10" fill="#ff0000"/>
<rect x="999" y="102" width="3" height="10" fill="#ff0000"/>
<rect x="1006" y="93" width="1" height="19" fill="#ff0000"/>
<rect x="1005" y="93" width="3" height="10" fill="#ff0000"/>
<rect x="1012" y="93" width="1" height="19" fill="#0000ff"/>
<rect x="1011" y="93" width="3" height="10" fill="#0000ff"/>
<rect x="1018" y="93" width="1" height="10" fill="#0000ff"/>
<rect x="1017" y="102" width="3" height="1" fill="#0000ff"/>
<rect x="1024" y="93" width="1" height="19" fill="#0000ff"/>
<rect x="1023" y="93" width="3" height="19" fill="#0000ff"/>
<rect x="1030" y="102" width="1" height="10" fill="#0000ff"/>
<rect x="1029" y="102" width="3" height="10" fill="#0000ff"/>
<rect x="1036" y="102" width="1" height="18" fill="#0000ff"/>
<rect x="1035" y="111" width="3" height="1" fill="#0000ff"/>
<rect x="1042" y="111" width="1" height="9" fill="#0000ff"/>
<rect x="1041" y="119" width="3" height="1" fill="#0000ff"/>
<rect x="1048" y="111" width="1" height="18" fill="#ff0000"/>
<rect x="1047" y="111" width="3" height="9" fill="#ff0000"/>
<rect x="1054" y="102" width="1" height="18" fill="#ff0000"/>
<rect x="1053" y="102" width="3" height="10" fill="#ff0000"/>
<rect x="1060" y="84" width="1" height="19" fill="#0000ff"/>
<rect x="1059" y="102" width="3" height="1" fill="#0000ff"/>
<rect x="1066" y="93" width="1" height="10" fill="#ff0000"/>
<rect x="1065" y="93" width="3" height="1" fill="#ff0000"/>
<rect x="1072" y="84" width="1" height="10" fill="#0000ff"/>
<rect x="1071" y="93" width="3" height="1" fill="#0000ff"/>
<rect x="1078" y="84" width="1" height="10" fill="#0000ff"/>
<rect x="1077" y="93" width="3" height="1" fill="#0000ff"/>
<rect x="1084" y="93" width="1" height="19" fill="#0000ff"/>
<rect x="1083" y="93" width="3" height="19" fill="#0000ff"/>
<rect x="1090" y="102" width="1" height="18" fill="#0000ff"/>
<rect x="1089" y="111" width="3" height="9" fill="#0000ff"/>
<rect x="1096" y="93" width="1" height="19" fill="#ff0000"/>
<rect x="1095" y="102" width="3" height="10" fill="#ff0000"/>
<rect x="1102" y="93" width="1" height="10" fill="#ff0000"/>
<rect x="1101" y="93" width="3" height="10" fill="#ff0000"/>
<rect x="1108" y="84" width="1" height="19" fill="#0000ff"/>
<rect x="1107" y="93" width="3" height="1" fill="#0000ff"/>
<rect x="1114" y="93" width="1" height="10" fill="#0000ff"/>
<rect x="1113" y="93" width="3" height="1" fill="#0000ff"/>
<rect x="1120" y="84" width="1" height="10" fill="#ff0000"/>
<rect x="1119" y="84" width="3" height="10" fill="#ff0000"/>
<rect x="1126" y="84" width="1" height="10" fill="#0000ff"/>
<rect x="1125" y="84" width="3" height="1" fill="#0000ff"/>
<rect x="1132" y="84" width="1" height="10" fill="#0000ff"/>
<rect x="1131" y="84" width="3" height="1" fill="#0000ff"/>
<rect x="1138" y="84" width="1" height="10" fill="#0000ff"/>
<rect x="1137" y="93" width="3" height="1" fill="#0000ff"/>
<rect x="1144" y="84" width="1" height="10" fill="#ff0000"/>
<rect x="1143" y="84" width="3" height="10" fill="#ff0000"/>
<rect x="1150" y="84" width="1" height="10" fill="#0000ff"/>
<rect x="1149" y="84" width="3" height="1" fill="#0000ff"/>
<rect x="1156" y="75" width="1" height="19" fill="#ff0000"/>
<rect x="1155" y="84" width="3" height="10" fill="#ff0000"/>
<rect x="1162" y="75" width="1" height="10" fill="#0000ff"/>
<rect x="1161" y="84" width="3" height="1" fill="#0000ff"/>
<rect x="1168" y="75" width="1" height="10" fill="#0000ff"/>
<rect x="1167" y="75" width="3" height="10" fill="#0000ff"/>
<rect x="1174" y="75" width="1" height="19" fill="#0000ff"/>
<rect x="1173" y="84" width="3" height="1" fill="#0000ff"/>
<rect x="1180" y="75" width="1" height="10" fill="#ff0000"/>
<rect x="1179" y="75" width="3" height="10" fill="#ff0000"/>
<rect x="1186" y="75" width="1" height="10" fill="#0000ff"/>
<rect x="1185" y="75" width="3" height="10" fill="#0000ff"/>
<rect x="1192" y="75" width="1" height="10" fill="#ff0000"/>
<rect x="1191" y="75" width="3" height="10" fill="#ff0000"/>
<rect x="1198" y="75" width="1" height="10" fill="#0000ff"/>
<rect x="1197" y="84" width="3" height="1" fill="#0000ff"/>
<rect x="1204" y="84" width="1" height="10" fill="#0000ff"/>
<rect x="1203" y="84" width="3" height="10" fill="#0000ff"/>
<rect x="1210" y="84" width="1" height="10" fill="#0000ff"/>
<rect x="1209" y="84" width="3" height="10" fill="#0000ff"/>
<rect x="1216" y="93" width="1" height="10" fill="#0000ff"/>
<rect x="1215" y="93" width="3" height="1" fill="#0000ff"/>
<rect x="1222" y="84" width="1" height="10" fill="#0000ff"/>
<rect x="1221" y="93" width="3" height="1" fill="#0000ff"/>
<rect x="1228" y="93" width="1" height="10" fill="#0000ff"/>
<rect x="1227" y="93" width="3" height="1" fill="#0000ff"/>
<rect x="1234" y="111" width="1" height="1" fill="#0000ff"/>
<rect x="1233" y="111" width="3" height="1" fill="#0000ff"/>
<rect x="1240" y="22" width="1" height="54" fill="#ff0000"/>
<rect x="1239" y="22" width="3" height="27" fill="#ff0000"/>
</g>
<rect x="3" y="312" width="3" height="1" fill="#009400"/>
<rect x="9" y="312" width="3" height="1" fill="#009400"/>
<rect x="15" y="311" width="3" height="2" fill="#009400"/>
<rect x="21" y="310" width="3" height="3" fill="#009400"/>
<rect x="27" y="275" width="3" height="38" fill="#009400"/>
<rect x="33" y="290" width="3" height="23" fill="#009400"/>
<rect x="39" y="300" width="3" height="13" fill="#009400"/>
<rect x="45" y="307" width="3" height="6" fill="#009400"/>
<rect x="51" y="292" width="3" height="21" fill="#009400"/>
<rect x="57" y="295" width="3" height="18" fill="#009400"/>
<rect x="63" y="305" width="3" height="8" fill="#009400"/>
<rect x="69" y="295" width="3" height="18" fill="#009400"/>
<rect x="75" y="291" width="3" height="22" fill="#009400"/>
<rect x="81" y="303" width="3" height="10" fill="#009400"/>
<rect x="87" y="310" width="3" height="3" fill="#009400"/>
<rect x="93" y="302" width="3" height="11" fill="#009400"/>
<rect x="99" y="291" width="3" height="22" fill="#009400"/>
<rect x="105" y="310" width="3" height="3" fill="#009400"/>
<rect x="111" y="305" width="3" height="8" fill="#009400"/>
<rect x="117" y="290" width="3" height="23" fill="#009400"/>
<rect x="123" y="288" width="3" height="25" fill="#009400"/>
<rect x="129" y="307" width="3" height="6" fill="#009400"/>
<rect x="135" y="305" width="3" height="8" fill="#009400"/>
<rect x="141" y="305" width="3" height="8" fill="#009400"/>
<rect x="147" y="297" width="3" height="16" fill="#009400"/>
<rect x="153" y="304" width="3" height="9" fill="#009400"/>
<rect x="159" y="307" width="3" height="6" fill="#009400"/>
<rect x="165" y="301" width="3" height="12" fill="#009400"/>
<rect x="171" y="298" width="3" height="15" fill="#009400"/>
<rect x="177" y="296" width="3" height="17" fill="#009400"/>
<rect x="183" y="267" width="3" height="46" fill="#009400"/>
<rect x="189" y="304" width="3" height="9" fill="#009400"/>
<rect x="195" y="297" width="3" height="16" fill="#009400"/>
<rect x="201" y="309" width="3" height="4" fill="#009400"/>
<rect x="207" y="307" width="3" height="6" fill="#009400"/>
<rect x="213" y="309" width="3" height="4" fill="#009400"/>
<rect x="219" y="309" width="3" height="4" fill="#009400"/>
<rect x="225" y="309" width="3" height="4" fill="#009400"/>
<rect x="231" y="307" width="3" height="6" fill="#009400"/>
<rect x="237" y="305" width="3" height="8" fill="#009400"/>
<rect x="243" y="293" width="3" height="20" fill="#009400"/>
<rect x="249" y="311" width="3" height="2" fill="#009400"/>
<rect x="255" y="310" width="3" height="3" fill="#009400"/>
<rect x="261" y="312" width="3" height="1" fill="#009400"/>
<rect x="267" y="311" width="3" height="2" fill="#009400"/>
<rect x="273" y="309" width="3" height="4" fill="#009400"/>
<rect x="279" y="299" width="3" height="14" fill="#009400"/>
<rect x="285" y="303" width="3" height="10" fill="#009400"/>
<rect x="291" y="296" width="3" height="17" fill="#009400"/>
<rect x="297" y="296" width="3" height="17" fill="#009400"/>
<rect x="303" y="305" width="3" height="8" fill="#009400"/>
<rect x="309" y="302" width="3" height="11" fill="#009400"/>
<rect x="315" y="301" width="3" height="12" fill="#009400"/>
<rect x="321" y="310" width="3" height="3" fill="#009400"/>
<rect x="327" y="307" width="3" height="6" fill="#009400"/>
<rect x="333" y="310" width="3" height="3" fill="#009400"/>
<rect x="339" y="307" width="3" height="6" fill="#009400"/>
<rect x="345" y="307" width="3" height="6" fill="#009400"/>
<rect x="351" y="309" width="3" height="4" fill="#009400"/>
<rect x="357" y="312" width="3" height="1" fill="#009400"/>
<rect x="363" y="294" width="3" height="19" fill="#009400"/>
<rect x="369" y="305" width="3" height="8" fill="#009400"/>
<rect x="375" y="302" width="3" height="11" fill="#009400"/>
<rect x="381" y="312" width="3" height="1" fill="#009400"/>
<rect x="387" y="296" width="3" height="17" fill="#009400"/>
<rect x="393" y="304" width="3" height="9" fill="#009400"/>
<rect x="399" y="301" width="3" height="12" fill="#009400"/>
<rect x="405" y="288" width="3" height="25" fill="#009400"/>
<rect x="411" y="268" width="3" height="45" fill="#009400"/>
<rect x="417" y="291" width="3" height="22" fill="#009400"/>
<rect x="423" y="302" width="3" height="11" fill="#009400"/>
<rect x="429" y="292" width="3" height="21" fill="#009400"/>
<rect x="435" y="302" width="3" height="11" fill="#009400"/>
<rect x="441" y="296" width="3" height="17" fill="#009400"/>
<rect x="447" y="300" width="3" height="13" fill="#009400"/>
<rect x="453" y="298" width="3" height="15" fill="#009400"/>
<rect x="459" y="292" width="3" height="21" fill="#009400"/>
<rect x="465" y="295" width="3" height="18" fill="#009400"/>
<rect x="477" y="294" width="3" height="19" fill="#009400"/>
<rect x="483" y="303" width="3" height="10" fill="#009400"/>
<rect x="489" y="309" width="3" height="4" fill="#009400"/>
<rect x="495" y="312" width="3" height="1" fill="#009400"/>
<rect x="501" y="311" width="3" height="2" fill="#009400"/>
<rect x="507" y="310" width="3" height="3" fill="#009400"/>
<rect x="513" y="309" width="3" height="4" fill="#009400"/>
<rect x="519" y="312" width="3" height="1" fill="#009400"/>
<rect x="525" y="311" width="3" height="2" fill="#009400"/>
<rect x="531" y="310" width="3" height="3" fill="#009400"/>
<rect x="537" y="310" width="3" height="3" fill="#009400"/>
<rect x="543" y="311" width="3" height="2" fill="#009400"/>
<rect x="549" y="312" width="3" height="1" fill="#009400"/>
<rect x="555" y="312" width="3" height="1" fill="#009400"/>
<rect x="561" y="309" width="3" height="4" fill="#009400"/>
<rect x="567" y="310" width="3" height="3" fill="#009400"/>
<rect x="573" y="310" width="3" height="3" fill="#009400"/>
<rect x="579" y="311" width="3" height="2" fill="#009400"/>
<rect x="591" y="309" width="3" height="4" fill="#009400"/>
<rect x="603" y="307" width="3" height="6" fill="#009400"/>
<rect x="609" y="310" width="3" height="3" fill="#009400"/>
<rect x="621" y="312" width="3" height="1" fill="#009400"/>
<rect x="627" y="311" width="3" height="2" fill="#009400"/>
<rect x="633" y="312" width="3" height="1" fill="#009400"/>
<rect x="639" y="311" width="3" height="2" fill="#009400"/>
<rect x="651" y="310" width="3" height="3" fill="#009400"/>
<rect x="657" y="311" width="3" height="2" fill="#009400"/>
<rect x="663" y="310" width="3" height="3" fill="#009400"/>
<rect x="669" y="312" width="3" height="1" fill="#009400"/>
<rect x="681" y="312" width="3" height="1" fill="#009400"/>
<rect x="687" y="312" width="3" height="1" fill="#009400"/>
<rect x="693" y="311" width="3" height="2" fill="#009400"/>
<rect x="699" y="312" width="3" height="1" fill="#009400"/>
<rect x="705" y="312" width="3" height="1" fill="#009400"/>
<rect x="729" y="312" width="3" height="1" fill="#009400"/>
<rect x="735" y="310" width="3" height="3" fill="#009400"/>
<rect x="741" y="312" width="3" height="1" fill="#009400"/>
<rect x="747" y="311" width="3" height="2" fill="#009400"/>
<rect x="753" y="311" width="3" height="2" fill="#009400"/>
<rect x="759" y="310" width="3" height="3" fill="#009400"/>
<rect x="771" y="312" width="3" height="1" fill="#009400"/>
<rect x="777" y="312" width="3" height="1" fill="#009400"/>
<rect x="795" y="311" width="3" height="2" fill="#009400"/>
<rect x="801" y="311" width="3" height="2" fill="#009400"/>
<rect x="807" y="312" width="3" height="1" fill="#009400"/>
<rect x="813" y="312" width="3" height="1" fill="#009400"/>
<rect x="819" y="312" width="3" height="1" fill="#009400"/>
<rect x="825" y="312" width="3" height="1" fill="#009400"/>
<rect x="831" y="312" width="3" height="1" fill="#009400"/>
<rect x="837" y="312" width="3" height="1" fill="#009400"/>
<rect x="843" y="311" width="3" height="2" fill="#009400"/>
<rect x="849" y="311" width="3" height="2" fill="#009400"/>
<rect x="855" y="312" width="3" height="1" fill="#009400"/>
<rect x="861" y="310" width="3" height="3" fill="#009400"/>
<rect x="867" y="312" width="3" height="1" fill="#009400"/>
<rect x="873" y="312" width="3" height="1" fill="#009400"/>
<rect x="879" y="312" width="3" height="1" fill="#009400"/>
<rect x="885" y="312" width="3" height="1" fill="#009400"/>
<rect x="891" y="311" width="3" height="2" fill="#009400"/>
<rect x="897" y="310" width="3" height="3" fill="#009400"/>
<rect x="903" y="309" width="3" height="4" fill="#009400"/>
<rect x="909" y="311" width="3" height="2" fill="#009400"/>
<rect x="915" y="305" width="3" height="8" fill="#009400"/>
<rect x="921" y="307" width="3" height="6" fill="#009400"/>
<rect x="927" y="307" width="3" height="6" fill="#009400"/>
<rect x="933" y="310" width="3" height="3" fill="#009400"/>
<rect x="939" y="302" width="3" height="11" fill="#009400"/>
<rect x="945" y="307" width="3" height="6" fill="#009400"/>
<rect x="951" y="302" width="3" height="11" fill="#009400"/>
<rect x="957" y="305" width="3" height="8" fill="#009400"/>
<rect x="963" y="307" width="3" height="6" fill="#009400"/>
<rect x="969" y="310" width="3" height="3" fill="#009400"/>
<rect x="975" y="307" width="3" height="6" fill="#009400"/>
<rect x="981" y="311" width="3" height="2" fill="#009400"/>
<rect x="987" y="307" width="3" height="6" fill="#009400"/>
<rect x="993" y="311" width="3" height="2" fill="#009400"/>
<rect x="999" y="309" width="3" height="4" fill="#009400"/>
<rect x="1005" y="310" width="3" height="3" fill="#009400"/>
<rect x="1011" y="311" width="3" height="2" fill="#009400"/>
<rect x="1017" y="312" width="3" height="1" fill="#009400"/>
<rect x="1023" y="311" width="3" height="2" fill="#009400"/>
<rect x="1029" y="310" width="3" height="3" fill="#009400"/>
<rect x="1035" y="311" width="3" height="2" fill="#009400"/>
<rect x="1041" y="312" width="3" height="1" fill="#009400"/>
<rect x="1047" y="307" width="3" height="6" fill="#009400"/>
<rect x="1053" y="310" width="3" height="3" fill="#009400"/>
<rect x="1059" y="310" width="3" height="3" fill="#009400"/>
<rect x="1065" y="311" width="3" height="2" fill="#009400"/>
<rect x="1071" y="312" width="3" height="1" fill="#009400"/>
<rect x="1077" y="312" width="3" height="1" fill="#009400"/>
<rect x="1083" y="311" width="3" height="2" fill="#009400"/>
<rect x="1089" y="311" width="3" height="2" fill="#009400"/>
<rect x="1095" y="311" width="3" height="2" fill="#009400"/>
<rect x="1107" y="309" width="3" height="4" fill="#009400"/>
<rect x="1113" y="310" width="3" height="3" fill="#009400"/>
<rect x="1119" y="311" width="3" height="2" fill="#009400"/>
<rect x="1125" y="312" width="3" height="1" fill="#009400"/>
<rect x="1131" y="312" width="3" height="1" fill="#009400"/>
<rect x="1143" y="312" width="3" height="1" fill="#009400"/>
<rect x="1149" y="312" width="3" height="1" fill="#009400"/>
<rect x="1155" y="312" width="3" height="1" fill="#009400"/>
<rect x="1167" y="312" width="3" height="1" fill="#009400"/>
<rect x="1173" y="312" width="3" height="1" fill="#009400"/>
<rect x="1191" y="312" width="3" height="1" fill="#009400"/>
<rect x="1197" y="311" width="3" height="2" fill="#009400"/>
<rect x="1209" y="312" width="3" height="1" fill="#009400"/>
<rect x="1215" y="312" width="3" height="1" fill="#009400"/>
<rect x="1221" y="312" width="3" height="1" fill="#009400"/>
<rect x="1227" y="311" width="3" height="2" fill="#009400"/>
<rect x="1233" y="310" width="3" height="3" fill="#009400"/>
<rect x="1239" y="249" width="3" height="64" fill="#009400"/>
<rect x="0" y="313" width="1244" height="1" fill="#000"/>
<g clip-path="url(#cl)">
<rect x="0" y="371" width="1244" height="1" fill="#808080"/>
<rect x="4" y="367" width="1" height="5" fill="#ff0000"/>
<rect x="10" y="368" width="1" height="4" fill="#ff0000"/>
<rect x="16" y="369" width="1" height="3" fill="#ff0000"/>
<rect x="22" y="370" width="1" height="2" fill="#ff0000"/>
<rect x="28" y="368" width="1" height="4" fill="#ff0000"/>
<rect x="34" y="369" width="1" height="3" fill="#ff0000"/>
<rect x="40" y="368" width="1" height="4" fill="#ff0000"/>
<rect x="46" y="369" width="1" height="3" fill="#ff0000"/>
<rect x="52" y="370" width="1" height="2" fill="#ff0000"/>
<rect x="58" y="370" width="1" height="2" fill="#ff0000"/>
<rect x="70" y="371" width="1" height="2" fill="#ff0000"/>
<rect x="76" y="371" width="1" height="4" fill="#ff0000"/>
<rect x="82" y="371" width="1" height="4" fill="#ff0000"/>
<rect x="88" y="371" width="1" height="3" fill="#ff0000"/>
<rect x="94" y="371" width="1" height="5" fill="#ff0000"/>
<rect x="100" y="371" width="1" height="5" fill="#ff0000"/>
<rect x="106" y="371" width="1" height="4" fill="#ff0000"/>
<rect x="112" y="371" width="1" height="4" fill="#ff0000"/>
<rect x="118" y="371" width="1" height="7" fill="#ff0000"/>
<rect x="124" y="371" width="1" height="7" fill="#ff0000"/>
<rect x="130" y="371" width="1" height="6" fill="#ff0000"/>
<rect x="136" y="371" width="1" height="6" fill="#ff0000"/>
<rect x="142" y="371" width="1" height="5" fill="#ff0000"/>
<rect x="148" y="371" width="1" height="2" fill="#ff0000"/>
<rect x="166" y="370" width="1" height="2" fill="#ff0000"/>
<rect x="172" y="370" width="1" height="2" fill="#ff0000"/>
<rect x="178" y="370" width="1" height="2" fill="#ff0000"/>
<rect x="190" y="371" width="1" height="2" fill="#ff0000"/>
<rect x="196" y="371" width="1" height="3" fill="#ff0000"/>
<rect x="202" y="371" width="1" height="3" fill="#ff0000"/>
<rect x="232" y="369" width="1" height="3" fill="#ff0000"/>
<rect x="238" y="369" width="1" height="3" fill="#ff0000"/>
<rect x="244" y="369" width="1" height="3" fill="#ff0000"/>
<rect x="250" y="369" width="1" height="3" fill="#ff0000"/>
<rect x="256" y="369" width="1" height="3" fill="#ff0000"/>
<rect x="262" y="369" width="1" height="3" fill="#ff0000"/>
<rect x="268" y="368" width="1" height="4" fill="#ff0000"/>
<rect x="274" y="368" width="1" height="4" fill="#ff0000"/>
<rect x="280" y="368" width="1" height="4" fill="#ff0000"/>
<rect x="286" y="369" width="1" height="3" fill="#ff0000"/>
<rect x="292" y="368" width="1" height="4" fill="#ff0000"/>
<rect x="298" y="370" width="1" height="2" fill="#ff0000"/>
<rect x="364" y="369" width="1" height="3" fill="#ff0000"/>
<rect x="370" y="369" width="1" height="3" fill="#ff0000"/>
<rect x="376" y="369" width="1" height="3" fill="#ff0000"/>
<rect x="382" y="367" width="1" height="5" fill="#ff0000"/>
<rect x="388" y="368" width="1" height="4" fill="#ff0000"/>
<rect x="394" y="370" width="1" height="2" fill="#ff0000"/>
<rect x="406" y="371" width="1" height="5" fill="#ff0000"/>
<rect x="412" y="371" width="1" height="11" fill="#ff0000"/>
<rect x="418" y="371" width="1" height="15" fill="#ff0000"/>
<rect x="424" y="371" width="1" height="17" fill="#ff0000"/>
<rect x="430" y="371" width="1" height="17" fill="#ff0000"/>
<rect x="436" y="371" width="1" height="17" fill="#ff0000"/>
<rect x="442" y="371" width="1" height="16" fill="#ff0000"/>
<rect x="448" y="371" width="1" height="12" fill="#ff0000"/>
<rect x="454" y="371" width="1" height="9" fill="#ff0000"/>
<rect x="460" y="371" width="1" height="7" fill="#ff0000"/>
<rect x="466" y="371" width="1" height="3" fill="#ff0000"/>
<rect x="484" y="367" width="1" height="5" fill="#ff0000"/>
<rect x="490" y="364" width="1" height="8" fill="#ff0000"/>
<rect x="496" y="363" width="1" height="9" fill="#ff0000"/>
<rect x="502" y="361" width="1" height="11" fill="#ff0000"/>
<rect x="508" y="362" width="1" height="10" fill="#ff0000"/>
<rect x="514" y="363" width="1" height="9" fill="#ff0000"/>
<rect x="520" y="364" width="1" height="8" fill="#ff0000"/>
<rect x="526" y="364" width="1" height="8" fill="#ff0000"/>
<rect x="532" y="365" width="1" height="7" fill="#ff0000"/>
<rect x="538" y="366" width="1" height="6" fill="#ff0000"/>
<rect x="544" y="365" width="1" height="7" fill="#ff0000"/>
<rect x="550" y="368" width="1" height="4" fill="#ff0000"/>
<rect x="556" y="367" width="1" height="5" fill="#ff0000"/>
<rect x="562" y="367" width="1" height="5" fill="#ff0000"/>
<rect x="568" y="367" width="1" height="5" fill="#ff0000"/>
<rect x="574" y="367" width="1" height="5" fill="#ff0000"/>
<rect x="580" y="367" width="1" height="5" fill="#ff0000"/>
<rect x="586" y="368" width="1" height="4" fill="#ff0000"/>
<rect x="592" y="369" width="1" height="3" fill="#ff0000"/>
<rect x="598" y="370" width="1" height="2" fill="#ff0000"/>
<rect x="604" y="370" width="1" height="2" fill="#ff0000"/>
<rect x="616" y="371" width="1" height="2" fill="#ff0000"/>
<rect x="664" y="371" width="1" height="2" fill="#ff0000"/>
<rect x="676" y="371" width="1" height="2" fill="#ff0000"/>
<rect x="682" y="371" width="1" height="2" fill="#ff0000"/>
<rect x="712" y="369" width="1" height="3" fill="#ff0000"/>
<rect x="718" y="368" width="1" height="4" fill="#ff0000"/>
<rect x="724" y="369" width="1" height="3" fill="#ff0000"/>
<rect x="730" y="369" width="1" height="3" fill="#ff0000"/>
<rect x="736" y="369" width="1" height="3" fill="#ff0000"/>
<rect x="766" y="370" width="1" height="2" fill="#ff0000"/>
<rect x="772" y="369" width="1" height="3" fill="#ff0000"/>
<rect x="778" y="368" width="1" height="4" fill="#ff0000"/>
<rect x="784" y="369" width="1" height="3" fill="#ff0000"/>
<rect x="790" y="368" width="1" height="4" fill="#ff0000"/>
<rect x="796" y="367" width="1" height="5" fill="#ff0000"/>
<rect x="802" y="368" width="1" height="4" fill="#ff0000"/>
<rect x="808" y="368" width="1" height="4" fill="#ff0000"/>
<rect x="814" y="369" width="1" height="3" fill="#ff0000"/>
<rect x="820" y="370" width="1" height="2" fill="#ff0000"/>
<rect x="826" y="370" width="1" height="2" fill="#ff0000"/>
<rect x="832" y="370" width="1" height="2" fill="#ff0000"/>
<rect x="838" y="370" width="1" height="2" fill="#ff0000"/>
<rect x="844" y="370" width="1" height="2" fill="#ff0000"/>
<rect x="910" y="370" width="1" height="2" fill="#ff0000"/>
<rect x="916" y="370" width="1" height="2" fill="#ff0000"/>
<rect x="922" y="368" width="1" height="4" fill="#ff0000"/>
<rect x="928" y="367" width="1" height="5" fill="#ff0000"/>
<rect x="934" y="368" width="1" height="4" fill="#ff0000"/>
<rect x="940" y="366" width="1" height="6" fill="#ff0000"/>
<rect x="946" y="365" width="1" height="7" fill="#ff0000"/>
<rect x="952" y="361" width="1" height="11" fill="#ff0000"/>
<rect x="958" y="361" width="1" height="11" fill="#ff0000"/>
<rect x="964" y="362" width="1" height="10" fill="#ff0000"/>
<rect x="970" y="364" width="1" height="8" fill="#ff0000"/>
<rect x="976" y="364" width="1" height="8" fill="#ff0000"/>
<rect x="982" y="366" width="1" height="6" fill="#ff0000"/>
<rect x="988" y="368" width="1" height="4" fill="#ff0000"/>
<rect x="994" y="368" width="1" height="4" fill="#ff0000"/>
<rect x="1000" y="368" width="1" height="4" fill="#ff0000"/>
<rect x="1006" y="368" width="1" height="4" fill="#ff0000"/>
<rect x="1012" y="368" width="1" height="4" fill="#ff0000"/>
<rect x="1018" y="368" width="1" height="4" fill="#ff0000"/>
<rect x="1042" y="371" width="1" height="3" fill="#ff0000"/>
<rect x="1048" y="371" width="1" height="3" fill="#ff0000"/>
<rect x="1054" y="371" width="1" height="2" fill="#ff0000"/>
<rect x="1060" y="371" width="1" height="2" fill="#ff0000"/>
<rect x="1084" y="371" width="1" height="2" fill="#ff0000"/>
<rect x="1090" y="371" width="1" height="4" fill="#ff0000"/>
<rect x="1096" y="371" width="1" height="3" fill="#ff0000"/>
<rect x="1102" y="371" width="1" height="2" fill="#ff0000"/>
<rect x="1204" y="371" width="1" height="2" fill="#ff0000"/>
<rect x="1210" y="371" width="1" height="3" fill="#ff0000"/>
<rect x="1216" y="371" width="1" height="3" fill="#ff0000"/>
<rect x="1222" y="371" width="1" height="3" fill="#ff0000"/>
<rect x="1228" y="371" width="1" height="3" fill="#ff0000"/>
<rect x="1234" y="371" width="1" height="5" fill="#ff0000"/>
<rect x="1240" y="368" width="1" height="4" fill="#ff0000"/>
<path d="M0 351h61v1h-61zM61 352h7v1h-7zM68 353h2v1h-2zM70 354h2v1h-2zM72 355h2v1h-2zM74 356h2v1h-2zM76 357h2v1h-2zM78 358h2v1h-2zM80 359h9v1h-9zM89 360h2v1h-2zM91 361h2v1h-2zM93 362h2v1h-2zM95 363h3v1h-3zM98 364h13v1h-13zM111 365h2v1h-2zM113 366h1v1h-1zM114 367h1v1h-1zM115 368h2v1h-2zM117 369h1v1h-1zM118 370h5v1h-5zM123 371h5v1h-5zM128 372h3v1h-3zM131 373h3v1h-3zM134 374h9v1h-9zM143 373h3v1h-3zM146 372h3v1h-3zM149 371h13v1h-13zM162 370h3v1h-3zM165 369h4v1h-4zM169 368h5v1h-5zM174 369h4v1h-4zM178 370h4v1h-4zM182 371h3v1h-3zM185 372h2v1h-2zM187 373h2v1h-2zM189 374h9v1h-9zM198 375h2v1h-2zM200 376h3v1h-3zM203 375h2v1h-2zM205 374h19v1h-19zM224 373h7v1h-7zM231 372h6v1h-6zM237 371h9v1h-9zM246 370h10v1h-10zM256 369h8v1h-8zM264 368h5v1h-5zM269 367h5v1h-5zM274 366h16v1h-16zM290 365h4v1h-4zM294 366h3v1h-3zM297 367h4v1h-4zM301 368h4v1h-4zM305 369h22v1h-22zM327 370h6v1h-6zM333 371h23v1h-23zM356 370h4v1h-4zM360 369h6v1h-6zM366 368h6v1h-6zM372 367h2v1h-2zM374 366h2v1h-2zM376 365h2v1h-2zM378 364h2v1h-2zM380 365h2v1h-2zM382 364h3v1h-3zM385 365h4v1h-4zM389 366h3v1h-3zM392 367h3v1h-3zM395 368h2v1h-2zM397 369h2v1h-2zM399 370h2v1h-2zM401 371h2v1h-2zM403 372h1v1h-1zM404 373h1v1h-1zM405 374h1v1h-1zM405 375h1v1h-1zM406 376h1v1h-1zM407 377h1v1h-1zM408 378h1v1h-1zM409 379h1v1h-1zM409 380h1v1h-1zM410 381h1v1h-1zM411 382h1v1h-1zM412 383h1v1h-1zM413 384h1v1h-1zM413 385h1v1h-1zM414 386h1v1h-1zM415 387h1v1h-1zM416 388h1v1h-1zM416 389h1v1h-1zM417 390h1v1h-1zM418 391h1v1h-1zM419 392h1v1h-1zM419 393h1v1h-1zM420 394h1v1h-1zM421 395h1v1h-1zM422 396h1v1h-1zM423 397h1v1h-1zM424 398h1v1h-1zM425 399h2v1h-2zM427 400h1v1h-1zM428 401h1v1h-1zM429 402h1v1h-1zM430 403h1v1h-1zM431 404h1v1h-1zM432 405h2v1h-2zM434 406h1v1h-1zM435 407h1v1h-1zM436 408h2v1h-2zM438 409h3v1h-3zM441 410h4v1h-4zM445 409h4v1h-4zM449 408h13v1h-13zM462 407h2v1h-2zM464 406h2v1h-2zM466 405h3v1h-3zM469 404h5v1h-5zM474 403h3v1h-3zM477 402h1v1h-1zM478 401h1v1h-1zM479 400h1v1h-1zM480 399h1v1h-1zM481 398h1v1h-1zM482 397h1v1h-1zM483 396h1v1h-1zM484 395h1v1h-1zM485 394h1v1h-1zM486 393h2v1h-2zM488 392h2v1h-2zM490 391h1v1h-1zM491 390h2v1h-2zM493 389h1v1h-1zM494 388h2v1h-2zM496 387h1v1h-1zM497 386h2v1h-2zM499 385h1v1h-1zM500 384h2v1h-2zM502 383h2v1h-2zM504 382h4v1h-4zM508 381h4v1h-4zM512 380h5v1h-5zM517 379h6v1h-6zM523 378h7v1h-7zM530 377h7v1h-7zM537 376h6v1h-6zM543 375h6v1h-6zM549 374h6v1h-6zM555 373h6v1h-6zM561 372h7v1h-7zM568 371h8v1h-8zM576 370h20v1h-20zM596 371h5v1h-5zM601 372h5v1h-5zM606 373h2v1h-2zM608 374h2v1h-2zM610 375h4v1h-4zM614 376h35v1h-35zM649 377h3v1h-3zM652 378h3v1h-3zM655 379h21v1h-21zM676 380h4v1h-4zM680 381h4v1h-4zM684 380h4v1h-4zM688 379h4v1h-4zM692 378h9v1h-9zM701 377h9v1h-9zM710 376h4v1h-4zM714 375h27v1h-27zM741 376h4v1h-4zM745 377h12v1h-12zM757 376h2v1h-2zM759 375h6v1h-6zM765 374h8v1h-8zM773 373h15v1h-15zM788 372h2v1h-2zM790 371h2v1h-2zM792 370h31v1h-31zM823 369h25v1h-25zM848 370h4v1h-4zM852 371h55v1h-55zM907 370h8v1h-8zM915 369h4v1h-4zM919 368h4v1h-4zM923 367h4v1h-4zM927 366h3v1h-3zM930 365h4v1h-4zM934 364h3v1h-3zM937 363h2v1h-2zM939 362h2v1h-2zM941 361h2v1h-2zM943 360h2v1h-2zM945 359h2v1h-2zM947 358h1v1h-1zM948 357h1v1h-1zM949 355h1v1h-1zM949 356h1v1h-1zM950 354h1v1h-1zM951 353h1v1h-1zM952 352h1v1h-1zM953 351h2v1h-2zM955 350h4v1h-4zM959 349h3v1h-3zM962 348h14v1h-14zM976 349h5v1h-5zM981 348h6v1h-6zM987 349h9v1h-9zM996 348h6v1h-6zM1002 347h3v1h-3zM1005 346h12v1h-12zM1017 347h3v1h-3zM1020 348h5v1h-5zM1025 349h6v1h-6zM1031 350h4v1h-4zM1035 351h2v1h-2zM1037 352h3v1h-3zM1040 353h2v1h-2zM1042 354h3v1h-3zM1045 355h18v1h-18zM1063 354h4v1h-4zM1067 353h15v1h-15zM1082 354h2v1h-2zM1084 355h2v1h-2zM1086 356h2v1h-2zM1088 357h3v1h-3zM1091 358h3v1h-3zM1094 359h4v1h-4zM1098 358h21v1h-21zM1119 357h78v1h-78zM1197 358h2v1h-2zM1199 359h3v1h-3zM1202 360h3v1h-3zM1205 361h4v1h-4zM1209 362h3v1h-3zM1212 363h3v1h-3zM1215 364h4v1h-4zM1219 365h5v1h-5zM1224 366h5v1h-5zM1229 367h4v1h-4zM1233 368h2v1h-2zM1235 367h1v1h-1zM1236 366h1v1h-1zM1237 364h1v1h-1zM1237 365h1v1h-1zM1238 363h1v1h-1zM1239 362h1v1h-1zM1240 361h1v1h-1zM1241 359h1v1h-1zM1241 360h1v1h-1zM1242 358h1v1h-1zM1243 357h1v1h-1z" fill="#ffff00"/>
<path d="M0 355h7v1h-7zM7 354h15v1h-15zM22 353h12v1h-12zM34 352h6v1h-6zM40 351h29v1h-29zM69 352h5v1h-5zM74 353h5v1h-5zM79 354h4v1h-4zM83 355h5v1h-5zM88 356h4v1h-4zM92 357h4v1h-4zM96 358h3v1h-3zM99 359h5v1h-5zM104 360h7v1h-7zM111 361h6v1h-6zM117 362h5v1h-5zM122 363h3v1h-3zM125 364h4v1h-4zM129 365h3v1h-3zM132 366h3v1h-3zM135 367h3v1h-3zM138 368h2v1h-2zM140 369h49v1h-49zM189 370h5v1h-5zM194 371h4v1h-4zM198 372h4v1h-4zM202 373h17v1h-17zM219 374h18v1h-18zM237 373h9v1h-9zM246 372h2v1h-2zM248 371h13v1h-13zM261 370h17v1h-17zM278 369h8v1h-8zM286 368h22v1h-22zM308 369h25v1h-25zM333 370h17v1h-17zM350 371h11v1h-11zM360 370h1v1h-1zM361 369h16v1h-16zM377 368h17v1h-17zM394 367h7v1h-7zM401 368h5v1h-5zM406 369h2v1h-2zM408 370h2v1h-2zM410 371h1v1h-1zM411 372h2v1h-2zM413 373h1v1h-1zM414 374h1v1h-1zM415 375h2v1h-2zM417 376h1v1h-1zM418 377h1v1h-1zM419 378h1v1h-1zM420 379h2v1h-2zM422 380h1v1h-1zM423 381h1v1h-1zM424 382h2v1h-2zM426 383h1v1h-1zM427 384h2v1h-2zM429 385h1v1h-1zM430 386h1v1h-1zM431 387h2v1h-2zM433 388h1v1h-1zM434 389h2v1h-2zM436 390h2v1h-2zM438 391h2v1h-2zM440 392h2v1h-2zM442 393h2v1h-2zM444 394h2v1h-2zM446 395h2v1h-2zM448 396h2v1h-2zM450 397h2v1h-2zM452 398h4v1h-4zM456 399h5v1h-5zM461 400h4v1h-4zM465 401h4v1h-4zM469 402h11v1h-11zM480 401h2v1h-2zM482 400h3v1h-3zM485 399h3v1h-3zM488 398h2v1h-2zM490 397h3v1h-3zM493 396h2v1h-2zM495 395h3v1h-3zM498 394h4v1h-4zM502 393h3v1h-3zM505 392h3v1h-3zM508 391h4v1h-4zM512 390h3v1h-3zM515 389h3v1h-3zM518 388h3v1h-3zM521 387h2v1h-2zM523 386h3v1h-3zM526 385h3v1h-3zM529 384h4v1h-4zM533 383h4v1h-4zM537 382h4v1h-4zM541 381h4v1h-4zM545 380h4v1h-4zM549 379h6v1h-6zM555 378h6v1h-6zM561 377h5v1h-5zM566 376h6v1h-6zM572 375h6v1h-6zM578 374h6v1h-6zM584 373h6v1h-6zM590 372h11v1h-11zM601 371h9v1h-9zM610 372h6v1h-6zM616 373h4v1h-4zM620 374h30v1h-30zM650 375h3v1h-3zM653 376h2v1h-2zM655 377h13v1h-13zM668 378h12v1h-12zM680 379h23v1h-23zM703 378h11v1h-11zM714 377h1v1h-1zM715 376h59v1h-59zM774 375h1v1h-1zM775 374h15v1h-15zM790 373h15v1h-15zM805 372h11v1h-11zM816 371h17v1h-17zM833 370h2v1h-2zM835 369h31v1h-31zM865 370h1v1h-1zM866 371h35v1h-35zM901 372h15v1h-15zM916 371h5v1h-5zM921 370h6v1h-6zM927 369h6v1h-6zM933 368h4v1h-4zM937 367h4v1h-4zM941 366h4v1h-4zM945 365h3v1h-3zM948 364h2v1h-2zM950 363h3v1h-3zM953 362h2v1h-2zM955 361h2v1h-2zM957 360h3v1h-3zM960 359h2v1h-2zM962 358h4v1h-4zM966 357h4v1h-4zM970 356h4v1h-4zM974 355h3v1h-3zM977 354h4v1h-4zM981 353h4v1h-4zM985 352h7v1h-7zM992 351h8v1h-8zM1000 350h6v1h-6zM1006 349h35v1h-35zM1041 350h5v1h-5zM1046 351h5v1h-5zM1051 352h14v1h-14zM1065 353h22v1h-22zM1087 354h8v1h-8zM1095 355h4v1h-4zM1099 356h17v1h-17zM1116 357h6v1h-6zM1122 356h38v1h-38zM1160 357h41v1h-41zM1201 358h8v1h-8zM1209 359h5v1h-5zM1214 360h5v1h-5zM1219 361h5v1h-5zM1224 362h5v1h-5zM1229 363h13v1h-13zM1242 362h2v1h-2z" fill="#0000ff"/>
<rect x="0" y="456" width="1244" height="1" fill="#0000ff"/>
<rect x="0" y="498" width="1244" height="1" fill="#ff0000"/>
<path d="M0 451h3v1h-3zM3 450h2v1h-2zM5 451h2v1h-2zM7 452h1v1h-1zM8 453h2v1h-2zM10 454h4v1h-4zM14 455h12v1h-12zM26 454h12v1h-12zM38 453h4v1h-4zM42 454h2v1h-2zM44 455h2v1h-2zM46 456h4v1h-4zM50 457h4v1h-4zM54 458h2v1h-2zM56 459h2v1h-2zM58 460h4v1h-4zM62 461h3v1h-3zM65 462h1v1h-1zM66 463h1v1h-1zM67 464h1v1h-1zM67 465h1v1h-1zM68 466h1v1h-1zM69 467h1v1h-1zM70 468h1v1h-1zM71 469h1v1h-1zM71 470h1v1h-1zM72 471h1v1h-1zM73 472h1v1h-1zM74 473h1v1h-1zM74 474h1v1h-1zM75 475h1v1h-1zM76 476h1v1h-1zM77 477h1v1h-1zM77 478h1v1h-1zM78 479h1v1h-1zM79 480h1v1h-1zM79 481h1v1h-1zM80 482h1v1h-1zM81 483h1v1h-1zM81 484h1v1h-1zM82 485h4v1h-4zM86 484h4v1h-4zM90 485h3v1h-3zM93 486h2v1h-2zM95 487h2v1h-2zM97 488h1v1h-1zM98 489h2v1h-2zM100 490h4v1h-4zM104 491h6v1h-6zM110 490h9v1h-9zM119 491h2v1h-2zM121 492h1v1h-1zM122 493h2v1h-2zM124 494h8v1h-8zM132 493h3v1h-3zM135 492h3v1h-3zM138 491h3v1h-3zM141 490h2v1h-2zM143 489h1v1h-1zM144 488h2v1h-2zM146 487h1v1h-1zM147 486h1v1h-1zM148 485h1v1h-1zM149 483h1v1h-1zM149 484h1v1h-1zM150 481h1v1h-1zM150 482h1v1h-1zM151 480h1v1h-1zM152 478h1v1h-1zM152 479h1v1h-1zM153 476h1v1h-1zM153 477h1v1h-1zM154 475h1v1h-1zM155 474h1v1h-1zM156 473h1v1h-1zM157 471h1v1h-1zM157 472h1v1h-1zM158 470h1v1h-1zM159 469h1v1h-1zM160 468h1v1h-1zM161 467h1v1h-1zM162 466h2v1h-2zM164 465h1v1h-1zM165 464h1v1h-1zM166 463h1v1h-1zM167 462h1v1h-1zM168 461h2v1h-2zM170 460h1v1h-1zM171 459h1v1h-1zM172 458h7v1h-7zM179 459h1v1h-1zM180 460h1v1h-1zM181 461h1v1h-1zM182 462h1v1h-1zM183 463h1v1h-1zM184 464h1v1h-1zM185 465h1v1h-1zM185 466h1v1h-1zM186 467h1v1h-1zM187 468h1v1h-1zM187 469h1v1h-1zM188 470h1v1h-1zM189 471h1v1h-1zM189 472h1v1h-1zM190 473h1v1h-1zM191 474h1v1h-1zM192 475h1v1h-1zM193 476h1v1h-1zM193 477h1v1h-1zM194 478h1v1h-1zM195 479h1v1h-1zM196 480h1v1h-1zM197 481h1v1h-1zM198 482h2v1h-2zM200 483h1v1h-1zM201 484h1v1h-1zM202 485h2v1h-2zM204 484h2v1h-2zM206 483h2v1h-2zM208 482h2v1h-2zM210 481h3v1h-3zM213 480h3v1h-3zM216 479h2v1h-2zM218 478h2v1h-2zM220 477h2v1h-2zM222 476h3v1h-3zM225 475h3v1h-3zM228 474h2v1h-2zM230 473h2v1h-2zM232 472h2v1h-2zM234 471h2v1h-2zM236 470h2v1h-2zM238 469h2v1h-2zM240 468h3v1h-3zM243 467h5v1h-5zM248 466h16v1h-16zM264 465h3v1h-3zM267 464h2v1h-2zM269 463h2v1h-2zM271 462h1v1h-1zM272 461h2v1h-2zM274 460h1v1h-1zM275 459h1v1h-1zM276 458h2v1h-2zM278 457h1v1h-1zM279 456h1v1h-1zM280 455h2v1h-2zM282 456h3v1h-3zM285 457h3v1h-3zM288 458h2v1h-2zM290 459h2v1h-2zM292 460h1v1h-1zM293 461h1v1h-1zM293 462h1v1h-1zM294 463h1v1h-1zM295 464h1v1h-1zM295 465h1v1h-1zM296 466h1v1h-1zM297 467h1v1h-1zM297 468h1v1h-1zM298 469h1v1h-1zM299 470h1v1h-1zM300 471h1v1h-1zM301 472h1v1h-1zM301 473h1v1h-1zM302 474h1v1h-1zM303 475h1v1h-1zM304 476h1v1h-1zM305 477h1v1h-1zM305 478h1v1h-1zM306 479h1v1h-1zM306 480h1v1h-1zM307 481h1v1h-1zM307 482h1v1h-1zM308 483h1v1h-1zM308 484h1v1h-1zM309 485h1v1h-1zM309 486h1v1h-1zM310 487h2v1h-2zM312 488h2v1h-2zM314 489h2v1h-2zM316 490h4v1h-4zM320 489h4v1h-4zM324 488h3v1h-3zM327 487h5v1h-5zM332 488h10v1h-10zM342 489h3v1h-3zM345 490h11v1h-11zM356 489h3v1h-3zM359 488h1v1h-1zM360 487h1v1h-1zM361 485h1v1h-1zM361 486h1v1h-1zM362 484h1v1h-1zM363 483h1v1h-1zM364 482h1v1h-1zM365 481h1v1h-1zM366 480h1v1h-1zM367 479h1v1h-1zM368 478h1v1h-1zM369 477h1v1h-1zM370 476h1v1h-1zM371 475h1v1h-1zM372 474h1v1h-1zM373 472h1v1h-1zM373 473h1v1h-1zM374 471h1v1h-1zM375 470h1v1h-1zM376 469h1v1h-1zM377 468h1v1h-1zM378 467h1v1h-1zM379 465h1v1h-1zM379 466h1v1h-1zM380 464h1v1h-1zM381 463h1v1h-1zM382 462h7v1h-7zM389 463h1v1h-1zM390 464h1v1h-1zM391 465h1v1h-1zM392 466h1v1h-1zM393 467h1v1h-1zM394 468h1v1h-1zM394 469h1v1h-1zM395 470h1v1h-1zM395 471h1v1h-1zM396 472h1v1h-1zM396 473h1v1h-1zM397 474h1v1h-1zM397 475h1v1h-1zM398 476h1v1h-1zM398 477h1v1h-1zM399 478h1v1h-1zM399 479h1v1h-1zM400 480h1v1h-1zM400 481h1v1h-1zM401 482h1v1h-1zM401 483h1v1h-1zM402 484h1v1h-1zM402 485h1v1h-1zM403 486h1v1h-1zM403 487h1v1h-1zM404 488h1v1h-1zM404 489h1v1h-1zM405 490h1v1h-1zM405 491h1v1h-1zM406 492h1v1h-1zM407 493h1v1h-1zM407 494h1v1h-1zM408 495h1v1h-1zM409 496h1v1h-1zM410 497h1v1h-1zM410 498h1v1h-1zM411 499h1v1h-1zM412 500h2v1h-2zM414 501h3v1h-3zM417 502h3v1h-3zM420 503h2v1h-2zM422 504h2v1h-2zM424 505h4v1h-4zM428 506h6v1h-6zM434 507h6v1h-6zM440 506h6v1h-6zM446 505h3v1h-3zM449 504h2v1h-2zM451 503h1v1h-1zM452 502h2v1h-2zM454 501h2v1h-2zM456 500h2v1h-2zM458 499h2v1h-2zM460 498h2v1h-2zM462 497h3v1h-3zM465 496h5v1h-5zM470 495h4v1h-4zM474 494h2v1h-2zM476 493h2v1h-2zM478 492h1v1h-1zM479 491h1v1h-1zM480 490h1v1h-1zM481 488h1v1h-1zM481 489h1v1h-1zM482 487h1v1h-1zM483 486h1v1h-1zM484 485h1v1h-1zM485 483h1v1h-1zM485 484h1v1h-1zM486 481h1v1h-1zM486 482h1v1h-1zM487 480h1v1h-1zM488 478h1v1h-1zM488 479h1v1h-1zM489 476h1v1h-1zM489 477h1v1h-1zM490 475h1v1h-1zM491 473h1v1h-1zM491 474h1v1h-1zM492 471h1v1h-1zM492 472h1v1h-1zM493 470h1v1h-1zM494 468h1v1h-1zM494 469h1v1h-1zM495 466h1v1h-1zM495 467h1v1h-1zM496 465h1v1h-1zM497 464h1v1h-1zM498 463h1v1h-1zM499 461h1v1h-1zM499 462h1v1h-1zM500 460h1v1h-1zM501 459h1v1h-1zM502 458h2v1h-2zM504 457h2v1h-2zM506 456h2v1h-2zM508 455h4v1h-4zM512 454h4v1h-4zM516 455h3v1h-3zM519 456h5v1h-5zM524 457h4v1h-4zM528 458h3v1h-3zM531 459h5v1h-5zM536 460h9v1h-9zM545 461h1v1h-1zM546 462h2v1h-2zM548 463h1v1h-1zM549 464h1v1h-1zM550 465h2v1h-2zM552 466h3v1h-3zM555 467h5v1h-5zM560 468h6v1h-6zM566 467h6v1h-6zM572 466h16v1h-16zM588 467h2v1h-2zM590 468h2v1h-2zM592 469h1v1h-1zM593 470h1v1h-1zM594 471h1v1h-1zM595 472h1v1h-1zM596 473h1v1h-1zM597 474h1v1h-1zM598 475h1v1h-1zM599 476h1v1h-1zM599 477h1v1h-1zM600 478h1v1h-1zM601 479h1v1h-1zM602 480h1v1h-1zM602 481h1v1h-1zM603 482h1v1h-1zM604 483h1v1h-1zM605 484h1v1h-1zM606 485h1v1h-1zM607 486h1v1h-1zM607 487h1v1h-1zM608 488h1v1h-1zM609 489h1v1h-1zM610 490h1v1h-1zM611 491h1v1h-1zM611 492h1v1h-1zM612 493h1v1h-1zM613 494h1v1h-1zM614 495h1v1h-1zM614 496h1v1h-1zM615 497h1v1h-1zM616 498h1v1h-1zM617 499h2v1h-2zM619 500h1v1h-1zM620 501h2v1h-2zM622 502h4v1h-4zM626 501h4v1h-4zM630 500h2v1h-2zM632 499h2v1h-2zM634 498h2v1h-2zM636 497h3v1h-3zM639 496h5v1h-5zM644 495h4v1h-4zM648 496h2v1h-2zM650 497h2v1h-2zM652 498h1v1h-1zM653 499h2v1h-2zM655 500h1v1h-1zM656 501h2v1h-2zM658 502h4v1h-4zM662 501h3v1h-3zM665 500h2v1h-2zM667 499h1v1h-1zM668 498h2v1h-2zM670 497h1v1h-1zM671 496h2v1h-2zM673 495h1v1h-1zM674 494h2v1h-2zM676 493h4v1h-4zM680 492h4v1h-4zM684 491h3v1h-3zM687 490h2v1h-2zM689 489h1v1h-1zM690 488h1v1h-1zM691 487h1v1h-1zM692 486h1v1h-1zM693 485h1v1h-1zM694 484h1v1h-1zM695 483h1v1h-1zM696 482h1v1h-1zM697 480h1v1h-1zM697 481h1v1h-1zM698 479h1v1h-1zM699 478h1v1h-1zM700 477h2v1h-2zM702 476h2v1h-2zM704 475h2v1h-2zM706 474h4v1h-4zM710 473h3v1h-3zM713 472h1v1h-1zM714 471h1v1h-1zM715 469h1v1h-1zM715 470h1v1h-1zM716 468h1v1h-1zM717 467h1v1h-1zM718 466h1v1h-1zM719 465h1v1h-1zM720 464h2v1h-2zM722 463h1v1h-1zM723 462h1v1h-1zM724 461h2v1h-2zM726 460h3v1h-3zM729 459h3v1h-3zM732 460h2v1h-2zM734 461h2v1h-2zM736 462h1v1h-1zM737 463h1v1h-1zM738 464h1v1h-1zM739 465h1v1h-1zM740 466h1v1h-1zM741 467h1v1h-1zM742 468h1v1h-1zM743 469h1v1h-1zM743 470h1v1h-1zM744 471h1v1h-1zM744 472h1v1h-1zM745 473h1v1h-1zM746 474h1v1h-1zM746 475h1v1h-1zM747 476h1v1h-1zM747 477h1v1h-1zM748 478h1v1h-1zM749 479h1v1h-1zM749 480h1v1h-1zM750 481h1v1h-1zM751 482h1v1h-1zM752 483h1v1h-1zM752 484h1v1h-1zM753 485h1v1h-1zM754 486h2v1h-2zM756 485h2v1h-2zM758 484h2v1h-2zM760 483h1v1h-1zM761 481h1v1h-1zM761 482h1v1h-1zM762 480h1v1h-1zM763 479h1v1h-1zM764 477h1v1h-1zM764 478h1v1h-1zM765 476h1v1h-1zM766 475h1v1h-1zM767 473h1v1h-1zM767 474h1v1h-1zM768 472h1v1h-1zM769 470h1v1h-1zM769 471h1v1h-1zM770 469h1v1h-1zM771 467h1v1h-1zM771 468h1v1h-1zM772 466h1v1h-1zM773 465h2v1h-2zM775 464h1v1h-1zM776 463h2v1h-2zM778 462h2v1h-2zM780 461h3v1h-3zM783 460h2v1h-2zM785 459h1v1h-1zM786 458h2v1h-2zM788 457h1v1h-1zM789 456h1v1h-1zM790 455h2v1h-2zM792 454h3v1h-3zM795 453h8v1h-8zM803 454h2v1h-2zM805 455h1v1h-1zM806 456h2v1h-2zM808 457h1v1h-1zM809 458h1v1h-1zM810 459h1v1h-1zM811 460h1v1h-1zM811 461h1v1h-1zM812 462h1v1h-1zM813 463h1v1h-1zM814 464h4v1h-4zM818 465h10v1h-10zM828 464h2v1h-2zM830 463h2v1h-2zM832 462h10v1h-10zM842 463h3v1h-3zM845 464h1v1h-1zM846 465h2v1h-2zM848 466h1v1h-1zM849 467h1v1h-1zM850 468h1v1h-1zM851 469h1v1h-1zM851 470h1v1h-1zM852 471h1v1h-1zM852 472h1v1h-1zM853 473h1v1h-1zM854 474h1v1h-1zM854 475h1v1h-1zM855 476h1v1h-1zM855 477h1v1h-1zM856 478h1v1h-1zM857 479h1v1h-1zM857 480h1v1h-1zM858 481h1v1h-1zM859 482h1v1h-1zM859 483h1v1h-1zM860 484h1v1h-1zM861 485h1v1h-1zM861 486h1v1h-1zM862 487h1v1h-1zM863 488h1v1h-1zM864 489h2v1h-2zM866 490h1v1h-1zM867 491h1v1h-1zM868 492h2v1h-2zM870 491h3v1h-3zM873 490h5v1h-5zM878 489h21v1h-21zM899 488h2v1h-2zM901 487h1v1h-1zM902 486h2v1h-2zM904 485h2v1h-2zM906 484h3v1h-3zM909 483h2v1h-2zM911 481h1v1h-1zM911 482h1v1h-1zM912 480h1v1h-1zM913 478h1v1h-1zM913 479h1v1h-1zM914 477h1v1h-1zM915 475h1v1h-1zM915 476h1v1h-1zM916 474h1v1h-1zM917 473h1v1h-1zM918 472h1v1h-1zM919 471h1v1h-1zM920 470h1v1h-1zM921 469h1v1h-1zM922 468h1v1h-1zM923 467h1v1h-1zM924 466h1v1h-1zM925 464h1v1h-1zM925 465h1v1h-1zM926 463h1v1h-1zM927 462h1v1h-1zM928 461h16v1h-16zM944 460h3v1h-3zM947 459h1v1h-1zM948 458h2v1h-2zM950 457h1v1h-1zM951 456h1v1h-1zM952 455h4v1h-4zM956 454h6v1h-6zM962 453h4v1h-4zM966 454h3v1h-3zM969 455h3v1h-3zM972 456h2v1h-2zM974 457h2v1h-2zM976 458h2v1h-2zM978 459h3v1h-3zM981 460h5v1h-5zM986 461h6v1h-6zM992 460h6v1h-6zM998 459h3v1h-3zM1001 458h2v1h-2zM1003 457h1v1h-1zM1004 456h2v1h-2zM1006 455h2v1h-2zM1008 454h2v1h-2zM1010 453h2v1h-2zM1012 452h2v1h-2zM1014 451h3v1h-3zM1017 450h2v1h-2zM1019 451h1v1h-1zM1020 452h1v1h-1zM1021 453h1v1h-1zM1022 454h1v1h-1zM1023 455h1v1h-1zM1024 456h1v1h-1zM1025 457h1v1h-1zM1026 458h1v1h-1zM1027 459h1v1h-1zM1028 460h1v1h-1zM1029 461h1v1h-1zM1030 462h1v1h-1zM1031 463h1v1h-1zM1032 464h1v1h-1zM1033 465h1v1h-1zM1033 466h1v1h-1zM1034 467h1v1h-1zM1035 468h1v1h-1zM1036 469h1v1h-1zM1037 470h1v1h-1zM1038 471h1v1h-1zM1039 472h1v1h-1zM1040 473h1v1h-1zM1041 474h1v1h-1zM1042 475h1v1h-1zM1043 476h2v1h-2zM1045 477h1v1h-1zM1046 478h2v1h-2zM1048 479h4v1h-4zM1052 478h3v1h-3zM1055 477h2v1h-2zM1057 476h1v1h-1zM1058 475h2v1h-2zM1060 474h1v1h-1zM1061 473h1v1h-1zM1062 472h1v1h-1zM1063 471h1v1h-1zM1064 470h1v1h-1zM1065 469h1v1h-1zM1066 468h1v1h-1zM1067 467h2v1h-2zM1069 466h1v1h-1zM1070 465h2v1h-2zM1072 464h1v1h-1zM1073 463h2v1h-2zM1075 462h1v1h-1zM1076 461h2v1h-2zM1078 460h2v1h-2zM1080 461h2v1h-2zM1082 462h2v1h-2zM1084 463h1v1h-1zM1085 464h1v1h-1zM1085 465h1v1h-1zM1086 466h1v1h-1zM1087 467h1v1h-1zM1088 468h1v1h-1zM1088 469h1v1h-1zM1089 470h1v1h-1zM1090 471h1v1h-1zM1091 472h1v1h-1zM1092 473h1v1h-1zM1093 474h1v1h-1zM1093 475h1v1h-1zM1094 476h1v1h-1zM1095 477h1v1h-1zM1096 478h2v1h-2zM1098 477h3v1h-3zM1101 476h2v1h-2zM1103 475h1v1h-1zM1104 474h1v1h-1zM1105 472h1v1h-1zM1105 473h1v1h-1zM1106 471h1v1h-1zM1107 470h1v1h-1zM1108 469h1v1h-1zM1109 468h1v1h-1zM1110 467h1v1h-1zM1111 466h1v1h-1zM1112 465h1v1h-1zM1113 464h1v1h-1zM1114 463h1v1h-1zM1115 462h1v1h-1zM1116 461h1v1h-1zM1117 460h1v1h-1zM1118 459h1v1h-1zM1119 458h1v1h-1zM1120 457h1v1h-1zM1121 456h1v1h-1zM1122 455h1v1h-1zM1123 454h1v1h-1zM1124 453h1v1h-1zM1125 452h1v1h-1zM1126 451h1v1h-1zM1127 450h2v1h-2zM1129 449h1v1h-1zM1130 448h2v1h-2zM1132 447h4v1h-4zM1136 448h22v1h-22zM1158 449h3v1h-3zM1161 450h3v1h-3zM1164 451h2v1h-2zM1166 452h2v1h-2zM1168 453h2v1h-2zM1170 454h3v1h-3zM1173 455h5v1h-5zM1178 454h6v1h-6zM1184 455h4v1h-4zM1188 454h3v1h-3zM1191 453h2v1h-2zM1193 454h2v1h-2zM1195 455h1v1h-1zM1196 456h2v1h-2zM1198 457h1v1h-1zM1199 458h1v1h-1zM1199 459h1v1h-1zM1200 460h1v1h-1zM1200 461h1v1h-1zM1201 462h1v1h-1zM1202 463h1v1h-1zM1202 464h1v1h-1zM1203 465h1v1h-1zM1203 466h1v1h-1zM1204 467h1v1h-1zM1204 468h1v1h-1zM1205 469h1v1h-1zM1205 470h1v1h-1zM1205 471h1v1h-1zM1206 472h1v1h-1zM1206 473h1v1h-1zM1207 474h1v1h-1zM1207 475h1v1h-1zM1207 476h1v1h-1zM1208 477h1v1h-1zM1208 478h1v1h-1zM1208 479h1v1h-1zM1209 480h1v1h-1zM1209 481h1v1h-1zM1210 482h1v1h-1zM1210 483h1v1h-1zM1211 484h1v1h-1zM1211 485h1v1h-1zM1212 486h1v1h-1zM1212 487h1v1h-1zM1213 488h1v1h-1zM1214 489h1v1h-1zM1214 490h1v1h-1zM1215 491h1v1h-1zM1215 492h1v1h-1zM1216 493h2v1h-2zM1218 494h3v1h-3zM1221 495h3v1h-3zM1224 494h2v1h-2zM1226 493h2v1h-2zM1228 492h2v1h-2zM1230 493h3v1h-3zM1233 494h2v1h-2zM1235 493h1v1h-1zM1236 492h1v1h-1zM1237 490h1v1h-1zM1237 491h1v1h-1zM1238 489h1v1h-1zM1239 488h1v1h-1zM1240 487h1v1h-1zM1241 485h1v1h-1zM1241 486h1v1h-1zM1242 484h1v1h-1zM1243 482h1v1h-1zM1243 483h1v1h-1z" fill="#ff0000"/>
<path d="M0 453h3v1h-3zM3 454h5v1h-5zM8 455h15v1h-15zM23 454h1v1h-1zM24 453h1v1h-1zM25 452h1v1h-1zM26 451h1v1h-1zM27 450h1v1h-1zM28 449h1v1h-1zM29 450h1v1h-1zM30 451h1v1h-1zM31 452h1v1h-1zM32 453h1v1h-1zM33 454h1v1h-1zM34 455h2v1h-2zM36 454h3v1h-3zM39 453h2v1h-2zM41 454h1v1h-1zM42 455h1v1h-1zM43 456h1v1h-1zM43 457h1v1h-1zM44 458h1v1h-1zM45 459h1v1h-1zM46 460h2v1h-2zM48 459h2v1h-2zM50 458h2v1h-2zM52 457h1v1h-1zM53 458h1v1h-1zM54 459h1v1h-1zM55 460h1v1h-1zM55 461h1v1h-1zM56 462h1v1h-1zM57 463h1v1h-1zM58 464h2v1h-2zM60 463h3v1h-3zM63 462h2v1h-2zM64 463h1v1h-1zM65 464h1v1h-1zM65 465h1v1h-1zM65 466h1v1h-1zM66 467h1v1h-1zM66 468h1v1h-1zM67 469h1v1h-1zM67 470h1v1h-1zM67 471h1v1h-1zM68 472h1v1h-1zM68 473h1v1h-1zM68 474h1v1h-1zM69 475h1v1h-1zM69 476h1v1h-1zM70 477h1v1h-1zM70 478h1v1h-1zM71 479h1v1h-1zM71 480h1v1h-1zM72 481h1v1h-1zM72 482h1v1h-1zM73 483h1v1h-1zM73 484h1v1h-1zM74 485h1v1h-1zM74 486h1v1h-1zM75 487h1v1h-1zM75 488h1v1h-1zM76 489h2v1h-2zM78 488h2v1h-2zM80 487h2v1h-2zM82 486h1v1h-1zM83 484h1v1h-1zM83 485h1v1h-1zM84 483h1v1h-1zM85 482h1v1h-1zM86 480h1v1h-1zM86 481h1v1h-1zM87 479h2v1h-2zM88 478h1v1h-1zM89 480h1v1h-1zM89 481h1v1h-1zM89 482h1v1h-1zM90 483h1v1h-1zM90 484h1v1h-1zM90 485h1v1h-1zM91 486h1v1h-1zM91 487h1v1h-1zM92 488h1v1h-1zM92 489h1v1h-1zM92 490h1v1h-1zM93 491h1v1h-1zM93 492h1v1h-1zM93 493h1v1h-1zM94 494h1v1h-1zM94 495h4v1h-4zM98 496h3v1h-3zM100 495h1v1h-1zM101 493h1v1h-1zM101 494h1v1h-1zM102 491h1v1h-1zM102 492h1v1h-1zM103 489h1v1h-1zM103 490h1v1h-1zM104 487h1v1h-1zM104 488h1v1h-1zM105 485h1v1h-1zM105 486h1v1h-1zM106 483h1v1h-1zM106 484h2v1h-2zM108 485h1v1h-1zM109 486h1v1h-1zM109 487h1v1h-1zM110 488h1v1h-1zM111 489h1v1h-1zM112 490h1v1h-1zM113 491h1v1h-1zM114 492h1v1h-1zM115 493h1v1h-1zM115 494h1v1h-1zM116 495h1v1h-1zM117 496h1v1h-1zM118 497h2v1h-2zM120 496h3v1h-3zM123 495h2v1h-2zM125 494h2v1h-2zM127 493h1v1h-1zM128 492h2v1h-2zM130 491h4v1h-4zM134 492h3v1h-3zM137 491h1v1h-1zM138 490h2v1h-2zM140 489h1v1h-1zM141 488h1v1h-1zM142 486h1v1h-1zM142 487h1v1h-1zM143 484h1v1h-1zM143 485h1v1h-1zM144 482h1v1h-1zM144 483h1v1h-1zM145 480h1v1h-1zM145 481h1v1h-1zM146 478h1v1h-1zM146 479h1v1h-1zM147 476h1v1h-1zM147 477h1v1h-1zM148 475h1v1h-1zM149 473h1v1h-1zM149 474h1v1h-1zM150 471h1v1h-1zM150 472h1v1h-1zM151 469h1v1h-1zM151 470h1v1h-1zM152 467h1v1h-1zM152 468h1v1h-1zM153 465h1v1h-1zM153 466h1v1h-1zM154 464h4v1h-4zM158 465h3v1h-3zM161 464h1v1h-1zM162 463h1v1h-1zM163 462h1v1h-1zM164 461h1v1h-1zM165 460h1v1h-1zM166 459h1v1h-1zM167 457h1v1h-1zM167 458h1v1h-1zM168 456h1v1h-1zM169 455h1v1h-1zM170 453h1v1h-1zM170 454h1v1h-1zM171 452h2v1h-2zM172 451h1v1h-1zM173 453h1v1h-1zM173 454h1v1h-1zM174 455h1v1h-1zM174 456h1v1h-1zM175 457h1v1h-1zM175 458h1v1h-1zM175 459h1v1h-1zM176 460h1v1h-1zM176 461h1v1h-1zM177 462h1v1h-1zM177 463h1v1h-1zM178 464h1v1h-1zM178 465h1v1h-1zM179 466h1v1h-1zM179 467h1v1h-1zM180 468h1v1h-1zM180 469h1v1h-1zM181 470h1v1h-1zM181 471h1v1h-1zM182 472h1v1h-1zM182 473h1v1h-1zM183 474h1v1h-1zM183 475h1v1h-1zM184 476h1v1h-1zM185 477h1v1h-1zM186 478h1v1h-1zM187 479h1v1h-1zM188 480h1v1h-1zM189 481h1v1h-1zM190 482h2v1h-2zM192 483h2v1h-2zM194 484h2v1h-2zM196 485h2v1h-2zM198 486h3v1h-3zM201 487h2v1h-2zM203 485h1v1h-1zM203 486h1v1h-1zM204 483h1v1h-1zM204 484h1v1h-1zM205 481h1v1h-1zM205 482h1v1h-1zM206 479h1v1h-1zM206 480h1v1h-1zM207 477h1v1h-1zM207 478h1v1h-1zM208 476h4v1h-4zM212 477h9v1h-9zM221 476h1v1h-1zM222 475h1v1h-1zM223 473h1v1h-1zM223 474h1v1h-1zM224 472h1v1h-1zM225 471h1v1h-1zM226 470h2v1h-2zM228 469h3v1h-3zM231 468h5v1h-5zM236 467h6v1h-6zM242 466h21v1h-21zM263 465h1v1h-1zM264 464h1v1h-1zM265 463h1v1h-1zM266 462h1v1h-1zM267 461h1v1h-1zM268 460h1v1h-1zM269 458h1v1h-1zM269 459h1v1h-1zM270 457h1v1h-1zM271 456h1v1h-1zM272 454h1v1h-1zM272 455h1v1h-1zM273 453h1v1h-1zM274 452h2v1h-2zM276 453h3v1h-3zM279 454h2v1h-2zM280 455h1v1h-1zM281 456h1v1h-1zM281 457h1v1h-1zM282 458h1v1h-1zM282 459h1v1h-1zM283 460h1v1h-1zM283 461h1v1h-1zM284 462h1v1h-1zM284 463h1v1h-1zM285 464h1v1h-1zM285 465h1v1h-1zM286 466h1v1h-1zM287 465h1v1h-1zM288 464h2v1h-2zM290 463h1v1h-1zM291 462h2v1h-2zM292 461h1v1h-1zM293 463h1v1h-1zM293 464h1v1h-1zM293 465h1v1h-1zM294 466h1v1h-1zM294 467h1v1h-1zM294 468h1v1h-1zM295 469h1v1h-1zM295 470h1v1h-1zM296 471h1v1h-1zM296 472h1v1h-1zM296 473h1v1h-1zM297 474h1v1h-1zM297 475h1v1h-1zM297 476h1v1h-1zM298 477h1v1h-1zM298 478h1v1h-1zM299 479h1v1h-1zM299 480h1v1h-1zM300 481h1v1h-1zM300 482h1v1h-1zM301 483h1v1h-1zM301 484h1v1h-1zM302 485h1v1h-1zM302 486h1v1h-1zM303 487h1v1h-1zM303 488h1v1h-1zM304 489h1v1h-1zM305 490h2v1h-2zM307 491h1v1h-1zM308 492h2v1h-2zM310 493h1v1h-1zM311 492h2v1h-2zM313 491h1v1h-1zM314 490h2v1h-2zM316 489h2v1h-2zM318 488h2v1h-2zM320 487h2v1h-2zM322 486h4v1h-4zM326 485h3v1h-3zM329 486h1v1h-1zM330 487h1v1h-1zM331 488h1v1h-1zM332 489h1v1h-1zM333 490h1v1h-1zM334 491h2v1h-2zM336 490h2v1h-2zM338 489h2v1h-2zM340 488h1v1h-1zM341 489h1v1h-1zM342 490h2v1h-2zM344 491h1v1h-1zM345 492h1v1h-1zM346 493h1v1h-1zM347 492h1v1h-1zM348 491h2v1h-2zM350 490h1v1h-1zM351 489h1v1h-1zM352 488h2v1h-2zM354 487h3v1h-3zM357 486h2v1h-2zM358 485h1v1h-1zM359 483h1v1h-1zM359 484h1v1h-1zM360 480h1v1h-1zM360 481h1v1h-1zM360 482h1v1h-1zM361 478h1v1h-1zM361 479h1v1h-1zM362 475h1v1h-1zM362 476h1v1h-1zM362 477h1v1h-1zM363 473h1v1h-1zM363 474h1v1h-1zM364 471h7v1h-7zM364 472h1v1h-1zM371 470h1v1h-1zM372 469h1v1h-1zM373 467h1v1h-1zM373 468h1v1h-1zM374 466h1v1h-1zM375 465h1v1h-1zM376 464h1v1h-1zM377 462h1v1h-1zM377 463h1v1h-1zM378 460h1v1h-1zM378 461h1v1h-1zM379 458h1v1h-1zM379 459h1v1h-1zM380 456h1v1h-1zM380 457h1v1h-1zM381 454h2v1h-2zM381 455h1v1h-1zM382 453h1v1h-1zM383 455h1v1h-1zM383 456h1v1h-1zM384 457h1v1h-1zM384 458h1v1h-1zM384 459h1v1h-1zM385 460h1v1h-1zM385 461h1v1h-1zM386 462h1v1h-1zM386 463h1v1h-1zM386 464h1v1h-1zM387 465h1v1h-1zM387 466h1v1h-1zM388 467h1v1h-1zM388 468h1v1h-1zM388 469h1v1h-1zM389 470h1v1h-1zM389 471h1v1h-1zM390 472h1v1h-1zM390 473h1v1h-1zM391 474h1v1h-1zM391 475h1v1h-1zM392 476h1v1h-1zM392 477h1v1h-1zM393 478h1v1h-1zM393 479h1v1h-1zM394 480h1v1h-1zM394 481h1v1h-1zM395 482h1v1h-1zM395 483h1v1h-1zM395 484h1v1h-1zM396 485h1v1h-1zM396 486h1v1h-1zM397 487h1v1h-1zM397 488h1v1h-1zM397 489h1v1h-1zM398 490h1v1h-1zM398 491h1v1h-1zM398 492h1v1h-1zM399 493h1v1h-1zM399 494h1v1h-1zM400 495h1v1h-1zM400 496h1v1h-1zM401 497h2v1h-2zM403 498h1v1h-1zM404 499h2v1h-2zM406 500h2v1h-2zM408 501h2v1h-2zM410 502h2v1h-2zM412 503h2v1h-2zM414 504h3v1h-3zM417 505h3v1h-3zM420 506h2v1h-2zM422 507h2v1h-2zM424 508h2v1h-2zM426 507h2v1h-2zM428 506h2v1h-2zM430 505h4v1h-4zM434 506h6v1h-6zM440 507h3v1h-3zM443 506h1v1h-1zM444 505h1v1h-1zM445 504h1v1h-1zM446 503h1v1h-1zM447 502h1v1h-1zM448 501h1v1h-1zM449 500h2v1h-2zM451 499h1v1h-1zM452 498h2v1h-2zM454 497h4v1h-4zM458 498h3v1h-3zM461 497h2v1h-2zM463 496h1v1h-1zM464 495h2v1h-2zM466 494h2v1h-2zM468 493h3v1h-3zM471 492h2v1h-2zM473 491h2v1h-2zM475 490h1v1h-1zM476 489h2v1h-2zM478 487h1v1h-1zM478 488h1v1h-1zM479 485h1v1h-1zM479 486h1v1h-1zM480 483h1v1h-1zM480 484h1v1h-1zM481 481h1v1h-1zM481 482h1v1h-1zM482 479h1v1h-1zM482 480h1v1h-1zM483 477h1v1h-1zM483 478h1v1h-1zM484 474h1v1h-1zM484 475h1v1h-1zM484 476h1v1h-1zM485 472h1v1h-1zM485 473h1v1h-1zM486 470h1v1h-1zM486 471h1v1h-1zM487 468h1v1h-1zM487 469h1v1h-1zM488 466h1v1h-1zM488 467h1v1h-1zM489 464h1v1h-1zM489 465h1v1h-1zM490 463h2v1h-2zM492 462h2v1h-2zM494 461h2v1h-2zM496 460h1v1h-1zM497 458h1v1h-1zM497 459h1v1h-1zM498 457h1v1h-1zM499 455h1v1h-1zM499 456h1v1h-1zM500 454h1v1h-1zM501 452h1v1h-1zM501 453h1v1h-1zM502 451h1v1h-1zM503 452h2v1h-2zM505 453h1v1h-1zM506 454h2v1h-2zM508 455h8v1h-8zM516 456h3v1h-3zM519 457h5v1h-5zM524 458h4v1h-4zM528 459h3v1h-3zM531 460h5v1h-5zM536 461h6v1h-6zM542 462h3v1h-3zM545 463h1v1h-1zM545 464h1v1h-1zM546 465h1v1h-1zM546 466h1v1h-1zM547 467h1v1h-1zM547 468h1v1h-1zM548 469h1v1h-1zM548 470h1v1h-1zM549 471h1v1h-1zM549 472h1v1h-1zM550 473h1v1h-1zM551 472h1v1h-1zM552 471h1v1h-1zM553 469h1v1h-1zM553 470h1v1h-1zM554 468h1v1h-1zM555 467h1v1h-1zM556 466h31v1h-31zM587 467h1v1h-1zM587 468h1v1h-1zM588 469h1v1h-1zM588 470h1v1h-1zM589 471h1v1h-1zM589 472h1v1h-1zM590 473h1v1h-1zM590 474h1v1h-1zM591 475h1v1h-1zM591 476h1v1h-1zM592 477h1v1h-1zM593 478h1v1h-1zM594 479h1v1h-1zM595 480h1v1h-1zM596 481h1v1h-1zM597 482h1v1h-1zM598 483h1v1h-1zM599 484h1v1h-1zM600 485h1v1h-1zM601 486h1v1h-1zM602 487h1v1h-1zM603 488h1v1h-1zM604 489h1v1h-1zM605 490h1v1h-1zM605 491h1v1h-1zM606 492h1v1h-1zM606 493h1v1h-1zM607 494h1v1h-1zM608 495h1v1h-1zM608 496h1v1h-1zM609 497h1v1h-1zM609 498h1v1h-1zM610 499h1v1h-1zM611 500h1v1h-1zM612 501h1v1h-1zM613 502h1v1h-1zM613 503h1v1h-1zM614 504h1v1h-1zM615 505h1v1h-1zM616 506h1v1h-1zM617 505h1v1h-1zM618 504h1v1h-1zM619 503h1v1h-1zM620 502h1v1h-1zM621 501h1v1h-1zM622 500h2v1h-2zM624 499h2v1h-2zM626 498h2v1h-2zM628 497h4v1h-4zM632 496h6v1h-6zM638 495h9v1h-9zM647 496h1v1h-1zM648 497h1v1h-1zM649 498h1v1h-1zM649 499h1v1h-1zM650 500h1v1h-1zM651 501h1v1h-1zM652 502h1v1h-1zM653 503h1v1h-1zM654 504h2v1h-2zM656 505h1v1h-1zM657 506h1v1h-1zM658 507h1v1h-1zM659 505h1v1h-1zM659 506h1v1h-1zM660 503h1v1h-1zM660 504h1v1h-1zM661 501h1v1h-1zM661 502h1v1h-1zM662 499h1v1h-1zM662 500h1v1h-1zM663 497h1v1h-1zM663 498h1v1h-1zM664 496h1v1h-1zM665 495h1v1h-1zM666 494h1v1h-1zM667 493h1v1h-1zM668 492h1v1h-1zM669 491h1v1h-1zM670 490h2v1h-2zM672 491h3v1h-3zM675 492h8v1h-8zM683 491h1v1h-1zM684 490h1v1h-1zM685 488h1v1h-1zM685 489h1v1h-1zM686 487h1v1h-1zM687 486h1v1h-1zM688 484h1v1h-1zM688 485h1v1h-1zM689 482h1v1h-1zM689 483h1v1h-1zM690 480h1v1h-1zM690 481h1v1h-1zM691 478h1v1h-1zM691 479h1v1h-1zM692 476h1v1h-1zM692 477h1v1h-1zM693 474h1v1h-1zM693 475h1v1h-1zM694 472h2v1h-2zM694 473h1v1h-1zM696 473h2v1h-2zM698 474h2v1h-2zM700 475h4v1h-4zM704 476h3v1h-3zM707 474h1v1h-1zM707 475h1v1h-1zM708 473h1v1h-1zM709 472h1v1h-1zM710 470h1v1h-1zM710 471h1v1h-1zM711 469h1v1h-1zM712 467h1v1h-1zM712 468h1v1h-1zM713 465h1v1h-1zM713 466h1v1h-1zM714 463h1v1h-1zM714 464h1v1h-1zM715 461h1v1h-1zM715 462h1v1h-1zM716 459h1v1h-1zM716 460h1v1h-1zM717 457h1v1h-1zM717 458h1v1h-1zM718 455h1v1h-1zM718 456h2v1h-2zM720 457h2v1h-2zM722 458h1v1h-1zM723 459h1v1h-1zM724 460h2v1h-2zM726 461h2v1h-2zM728 462h2v1h-2zM730 463h4v1h-4zM734 464h3v1h-3zM736 465h1v1h-1zM737 466h1v1h-1zM737 467h1v1h-1zM738 468h1v1h-1zM738 469h1v1h-1zM739 470h1v1h-1zM739 471h1v1h-1zM740 472h1v1h-1zM740 473h1v1h-1zM741 474h1v1h-1zM741 475h1v1h-1zM742 476h1v1h-1zM742 477h1v1h-1zM743 478h1v1h-1zM743 479h1v1h-1zM743 480h1v1h-1zM744 481h1v1h-1zM744 482h1v1h-1zM744 483h1v1h-1zM745 484h1v1h-1zM745 485h1v1h-1zM745 486h1v1h-1zM746 487h1v1h-1zM746 488h1v1h-1zM746 489h1v1h-1zM747 490h1v1h-1zM747 491h1v1h-1zM747 492h1v1h-1zM748 493h1v1h-1zM748 494h2v1h-2zM750 493h2v1h-2zM752 492h2v1h-2zM754 489h1v1h-1zM754 490h1v1h-1zM754 491h1v1h-1zM755 485h1v1h-1zM755 486h1v1h-1zM755 487h1v1h-1zM755 488h1v1h-1zM756 481h1v1h-1zM756 482h1v1h-1zM756 483h1v1h-1zM756 484h1v1h-1zM757 477h1v1h-1zM757 478h1v1h-1zM757 479h1v1h-1zM757 480h1v1h-1zM758 473h1v1h-1zM758 474h1v1h-1zM758 475h1v1h-1zM758 476h1v1h-1zM759 469h1v1h-1zM759 470h1v1h-1zM759 471h1v1h-1zM759 472h1v1h-1zM760 467h4v1h-4zM760 468h1v1h-1zM764 466h9v1h-9zM772 465h1v1h-1zM773 463h1v1h-1zM773 464h1v1h-1zM774 461h1v1h-1zM774 462h1v1h-1zM775 459h1v1h-1zM775 460h1v1h-1zM776 457h1v1h-1zM776 458h1v1h-1zM777 455h1v1h-1zM777 456h1v1h-1zM778 454h1v1h-1zM779 455h1v1h-1zM780 456h1v1h-1zM781 457h1v1h-1zM782 458h1v1h-1zM783 459h1v1h-1zM784 460h1v1h-1zM785 458h1v1h-1zM785 459h1v1h-1zM786 457h1v1h-1zM787 455h1v1h-1zM787 456h1v1h-1zM788 454h1v1h-1zM789 452h1v1h-1zM789 453h1v1h-1zM790 451h1v1h-1zM791 450h2v1h-2zM793 449h1v1h-1zM794 448h3v1h-3zM796 447h1v1h-1zM797 449h1v1h-1zM797 450h1v1h-1zM798 451h1v1h-1zM798 452h1v1h-1zM798 453h1v1h-1zM799 454h1v1h-1zM799 455h1v1h-1zM800 456h1v1h-1zM800 457h1v1h-1zM800 458h1v1h-1zM801 459h1v1h-1zM801 460h1v1h-1zM802 461h1v1h-1zM802 462h4v1h-4zM806 461h3v1h-3zM809 462h1v1h-1zM809 463h1v1h-1zM810 464h1v1h-1zM811 465h1v1h-1zM812 466h1v1h-1zM812 467h1v1h-1zM813 468h1v1h-1zM814 469h1v1h-1zM815 468h1v1h-1zM816 467h2v1h-2zM818 466h1v1h-1zM819 465h1v1h-1zM820 464h2v1h-2zM822 463h3v1h-3zM825 462h5v1h-5zM830 461h6v1h-6zM836 462h4v1h-4zM840 463h3v1h-3zM843 464h2v1h-2zM844 465h1v1h-1zM845 466h1v1h-1zM845 467h1v1h-1zM846 468h1v1h-1zM846 469h1v1h-1zM847 470h1v1h-1zM847 471h1v1h-1zM848 472h1v1h-1zM848 473h1v1h-1zM849 474h1v1h-1zM849 475h1v1h-1zM850 476h1v1h-1zM850 477h1v1h-1zM851 478h1v1h-1zM851 479h1v1h-1zM851 480h1v1h-1zM852 481h1v1h-1zM852 482h1v1h-1zM852 483h1v1h-1zM853 484h1v1h-1zM853 485h1v1h-1zM853 486h1v1h-1zM854 487h1v1h-1zM854 488h1v1h-1zM854 489h1v1h-1zM855 490h1v1h-1zM855 491h1v1h-1zM855 492h1v1h-1zM856 493h1v1h-1zM856 494h2v1h-2zM858 493h2v1h-2zM860 492h2v1h-2zM862 491h4v1h-4zM866 490h6v1h-6zM872 489h27v1h-27zM898 488h1v1h-1zM899 486h1v1h-1zM899 487h1v1h-1zM900 484h1v1h-1zM900 485h1v1h-1zM901 482h1v1h-1zM901 483h1v1h-1zM902 480h1v1h-1zM902 481h1v1h-1zM903 478h1v1h-1zM903 479h1v1h-1zM904 477h1v1h-1zM905 478h1v1h-1zM906 479h1v1h-1zM907 480h1v1h-1zM908 481h1v1h-1zM909 482h2v1h-2zM910 483h1v1h-1zM911 478h1v1h-1zM911 479h1v1h-1zM911 480h1v1h-1zM911 481h1v1h-1zM912 475h1v1h-1zM912 476h1v1h-1zM912 477h1v1h-1zM913 472h1v1h-1zM913 473h1v1h-1zM913 474h1v1h-1zM914 468h1v1h-1zM914 469h1v1h-1zM914 470h1v1h-1zM914 471h1v1h-1zM915 465h1v1h-1zM915 466h1v1h-1zM915 467h1v1h-1zM916 463h2v1h-2zM916 464h1v1h-1zM918 462h3v1h-3zM921 461h3v1h-3zM924 460h3v1h-3zM927 459h2v1h-2zM929 460h1v1h-1zM930 461h2v1h-2zM932 462h1v1h-1zM933 463h1v1h-1zM934 464h1v1h-1zM935 463h1v1h-1zM936 462h1v1h-1zM937 461h1v1h-1zM938 460h1v1h-1zM939 459h1v1h-1zM940 458h4v1h-4zM944 459h3v1h-3zM947 457h1v1h-1zM947 458h1v1h-1zM948 456h1v1h-1zM949 455h1v1h-1zM950 453h1v1h-1zM950 454h1v1h-1zM951 452h1v1h-1zM952 451h2v1h-2zM954 452h2v1h-2zM956 453h2v1h-2zM958 454h4v1h-4zM962 455h3v1h-3zM965 456h2v1h-2zM967 457h1v1h-1zM968 458h2v1h-2zM970 459h2v1h-2zM972 460h3v1h-3zM975 461h5v1h-5zM980 460h4v1h-4zM984 461h2v1h-2zM986 462h2v1h-2zM988 463h2v1h-2zM990 462h2v1h-2zM992 461h2v1h-2zM994 460h1v1h-1zM995 459h2v1h-2zM997 458h1v1h-1zM998 457h2v1h-2zM1000 456h1v1h-1zM1001 455h1v1h-1zM1002 454h1v1h-1zM1003 452h1v1h-1zM1003 453h1v1h-1zM1004 451h1v1h-1zM1005 450h1v1h-1zM1006 449h2v1h-2zM1008 450h3v1h-3zM1011 451h5v1h-5zM1016 452h3v1h-3zM1019 453h1v1h-1zM1019 454h1v1h-1zM1020 455h1v1h-1zM1020 456h1v1h-1zM1021 457h1v1h-1zM1021 458h1v1h-1zM1022 459h1v1h-1zM1022 460h1v1h-1zM1023 461h1v1h-1zM1023 462h1v1h-1zM1024 463h1v1h-1zM1025 464h1v1h-1zM1026 465h1v1h-1zM1027 466h1v1h-1zM1027 467h1v1h-1zM1028 468h1v1h-1zM1029 469h1v1h-1zM1030 470h2v1h-2zM1032 471h2v1h-2zM1034 472h2v1h-2zM1036 473h1v1h-1zM1037 474h1v1h-1zM1037 475h1v1h-1zM1038 476h1v1h-1zM1038 477h1v1h-1zM1039 478h1v1h-1zM1039 479h1v1h-1zM1040 480h1v1h-1zM1040 481h1v1h-1zM1041 482h1v1h-1zM1041 483h1v1h-1zM1042 484h1v1h-1zM1043 483h2v1h-2zM1045 482h1v1h-1zM1046 481h2v1h-2zM1048 480h1v1h-1zM1049 478h1v1h-1zM1049 479h1v1h-1zM1050 476h1v1h-1zM1050 477h1v1h-1zM1051 475h1v1h-1zM1052 473h1v1h-1zM1052 474h1v1h-1zM1053 471h1v1h-1zM1053 472h1v1h-1zM1054 470h7v1h-7zM1061 469h1v1h-1zM1062 468h1v1h-1zM1063 466h1v1h-1zM1063 467h1v1h-1zM1064 465h1v1h-1zM1065 464h1v1h-1zM1066 463h2v1h-2zM1068 462h2v1h-2zM1070 461h2v1h-2zM1072 460h2v1h-2zM1074 459h3v1h-3zM1077 458h2v1h-2zM1078 459h1v1h-1zM1079 460h1v1h-1zM1079 461h1v1h-1zM1080 462h1v1h-1zM1080 463h1v1h-1zM1081 464h1v1h-1zM1081 465h1v1h-1zM1082 466h1v1h-1zM1082 467h1v1h-1zM1083 468h1v1h-1zM1083 469h1v1h-1zM1084 470h1v1h-1zM1084 471h1v1h-1zM1084 472h1v1h-1zM1085 473h1v1h-1zM1085 474h1v1h-1zM1086 475h1v1h-1zM1086 476h1v1h-1zM1087 477h1v1h-1zM1087 478h1v1h-1zM1088 479h1v1h-1zM1088 480h1v1h-1zM1089 481h1v1h-1zM1089 482h1v1h-1zM1090 483h2v1h-2zM1090 484h1v1h-1zM1092 482h1v1h-1zM1093 480h1v1h-1zM1093 481h1v1h-1zM1094 479h1v1h-1zM1095 478h1v1h-1zM1096 477h1v1h-1zM1097 475h1v1h-1zM1097 476h1v1h-1zM1098 474h1v1h-1zM1099 472h1v1h-1zM1099 473h1v1h-1zM1100 471h1v1h-1zM1101 469h1v1h-1zM1101 470h1v1h-1zM1102 468h1v1h-1zM1103 467h1v1h-1zM1104 466h1v1h-1zM1105 465h1v1h-1zM1106 464h1v1h-1zM1107 463h1v1h-1zM1108 462h2v1h-2zM1110 461h2v1h-2zM1112 460h2v1h-2zM1114 459h1v1h-1zM1115 457h1v1h-1zM1115 458h1v1h-1zM1116 456h1v1h-1zM1117 455h1v1h-1zM1118 453h1v1h-1zM1118 454h1v1h-1zM1119 452h1v1h-1zM1120 451h1v1h-1zM1121 450h2v1h-2zM1123 449h1v1h-1zM1124 448h2v1h-2zM1126 447h2v1h-2zM1128 446h3v1h-3zM1131 445h2v1h-2zM1133 446h1v1h-1zM1134 447h1v1h-1zM1135 448h1v1h-1zM1135 449h1v1h-1zM1136 450h1v1h-1zM1137 451h1v1h-1zM1138 452h1v1h-1zM1139 451h1v1h-1zM1140 450h2v1h-2zM1142 449h1v1h-1zM1143 448h1v1h-1zM1144 447h2v1h-2zM1146 446h3v1h-3zM1149 445h2v1h-2zM1151 446h1v1h-1zM1152 447h1v1h-1zM1153 448h1v1h-1zM1154 449h1v1h-1zM1155 450h1v1h-1zM1156 451h2v1h-2zM1158 452h3v1h-3zM1161 453h3v1h-3zM1164 454h3v1h-3zM1167 455h3v1h-3zM1170 456h3v1h-3zM1173 457h2v1h-2zM1175 456h1v1h-1zM1176 455h1v1h-1zM1177 453h1v1h-1zM1177 454h1v1h-1zM1178 452h1v1h-1zM1179 451h1v1h-1zM1180 450h1v1h-1zM1181 451h1v1h-1zM1181 452h1v1h-1zM1182 453h1v1h-1zM1183 454h1v1h-1zM1184 455h1v1h-1zM1184 456h1v1h-1zM1185 457h1v1h-1zM1186 458h1v1h-1zM1187 456h1v1h-1zM1187 457h1v1h-1zM1188 455h1v1h-1zM1189 454h1v1h-1zM1190 452h1v1h-1zM1190 453h1v1h-1zM1191 451h2v1h-2zM1192 450h1v1h-1zM1193 452h1v1h-1zM1193 453h1v1h-1zM1194 454h1v1h-1zM1194 455h1v1h-1zM1195 456h1v1h-1zM1195 457h1v1h-1zM1196 458h1v1h-1zM1196 459h1v1h-1zM1197 460h1v1h-1zM1197 461h1v1h-1zM1198 462h1v1h-1zM1198 463h1v1h-1zM1198 464h1v1h-1zM1198 465h1v1h-1zM1199 466h1v1h-1zM1199 467h1v1h-1zM1199 468h1v1h-1zM1199 469h1v1h-1zM1200 470h1v1h-1zM1200 471h1v1h-1zM1200 472h1v1h-1zM1200 473h1v1h-1zM1201 474h1v1h-1zM1201 475h1v1h-1zM1201 476h1v1h-1zM1201 477h1v1h-1zM1202 478h1v1h-1zM1202 479h1v1h-1zM1202 480h1v1h-1zM1202 481h1v1h-1zM1203 482h1v1h-1zM1203 483h1v1h-1zM1203 484h1v1h-1zM1203 485h1v1h-1zM1204 486h1v1h-1zM1204 487h1v1h-1zM1204 488h1v1h-1zM1205 489h1v1h-1zM1205 490h1v1h-1zM1206 491h1v1h-1zM1206 492h1v1h-1zM1207 493h1v1h-1zM1207 494h1v1h-1zM1208 495h1v1h-1zM1208 496h1v1h-1zM1209 497h1v1h-1zM1209 498h1v1h-1zM1210 499h2v1h-2zM1210 500h1v1h-1zM1212 498h1v1h-1zM1213 496h1v1h-1zM1213 497h1v1h-1zM1214 495h1v1h-1zM1215 494h1v1h-1zM1216 493h2v1h-2zM1218 492h3v1h-3zM1221 491h5v1h-5zM1226 490h3v1h-3zM1229 491h1v1h-1zM1229 492h1v1h-1zM1230 493h1v1h-1zM1230 494h1v1h-1zM1231 495h1v1h-1zM1231 496h1v1h-1zM1232 497h1v1h-1zM1232 498h1v1h-1zM1233 499h2v1h-2zM1233 500h2v1h-2zM1234 501h1v1h-1zM1235 494h1v1h-1zM1235 495h1v1h-1zM1235 496h1v1h-1zM1235 497h1v1h-1zM1235 498h1v1h-1zM1236 489h1v1h-1zM1236 490h1v1h-1zM1236 491h1v1h-1zM1236 492h1v1h-1zM1236 493h1v1h-1zM1237 484h1v1h-1zM1237 485h1v1h-1zM1237 486h1v1h-1zM1237 487h1v1h-1zM1237 488h1v1h-1zM1238 479h1v1h-1zM1238 480h1v1h-1zM1238 481h1v1h-1zM1238 482h1v1h-1zM1238 483h1v1h-1zM1239 474h1v1h-1zM1239 475h1v1h-1zM1239 476h1v1h-1zM1239 477h1v1h-1zM1239 478h1v1h-1zM1240 471h1v1h-1zM1240 472h1v1h-1zM1240 473h1v1h-1zM1241 470h1v1h-1zM1242 469h1v1h-1zM1243 468h1v1h-1z" fill="#0000ff"/>
</g>
<rect x="1244" y="4" width="1" height="550" fill="#000"/>
<rect x="0" y="522" width="1277" height="1" fill="#000"/>
<rect x="1245" y="22" width="5" height="1" fill="#000"/>
<rect x="1245" y="66" width="5" height="1" fill="#000"/>
<rect x="1245" y="111" width="5" height="1" fill="#000"/>
<rect x="1245" y="155" width="5" height="1" fill="#000"/>
<rect x="1245" y="200" width="5" height="1" fill="#000"/>
<rect x="1245" y="249" width="5" height="1" fill="#000"/>
<rect x="1245" y="286" width="5" height="1" fill="#000"/>
<rect x="1245" y="346" width="5" height="1" fill="#000"/>
<rect x="1245" y="384" width="5" height="1" fill="#000"/>
<rect x="1245" y="443" width="5" height="1" fill="#000"/>
<rect x="1245" y="480" width="5" height="1" fill="#000"/>
<rect x="4" y="523" width="1" height="4" fill="#000"/>
<rect x="52" y="523" width="1" height="4" fill="#000"/>
<rect x="148" y="523" width="1" height="4" fill="#000"/>
<rect x="244" y="523" width="1" height="4" fill="#000"/>
<rect x="340" y="523" width="1" height="4" fill="#000"/>
<rect x="436" y="523" width="1" height="4" fill="#000"/>
<rect x="544" y="523" width="1" height="4" fill="#000"/>
<rect x="640" y="523" width="1" height="4" fill="#000"/>
<rect x="736" y="523" width="1" height="4" fill="#000"/>
<rect x="832" y="523" width="1" height="4" fill="#000"/>
<rect x="928" y="523" width="1" height="4" fill="#000"/>
<rect x="1024" y="523" width="1" height="9" fill="#000"/>
<rect x="1120" y="523" width="1" height="4" fill="#000"/>
<rect x="1216" y="523" width="1" height="4" fill="#000"/>
<rect x="1247.5" y="312.5" width="31" height="13" fill="#fff" stroke="#000" stroke-width="1"/>
<rect x="1278" y="300" width="30" height="40" fill="#fff"/>
<rect x="1277" y="312" width="1" height="14" fill="#d9d9d9"/>
<rect x="0" y="553" width="1277" height="4" fill="#efefef"/>
<rect x="440" y="553" width="387" height="4" fill="#f6f6f6" stroke="none"/>
<rect x="1104" y="553" width="17" height="4" fill="#e6e6e6"/>
<rect x="1104" y="553" width="17" height="1" fill="#8c8c8c"/>
<rect x="1104" y="553" width="1" height="4" fill="#8c8c8c"/>
<rect x="1105" y="554" width="16" height="1" fill="#fff"/>
<rect x="1121" y="553" width="17" height="4" fill="#e6e6e6"/>
<rect x="1121" y="553" width="17" height="1" fill="#8c8c8c"/>
<rect x="1121" y="553" width="1" height="4" fill="#8c8c8c"/>
<rect x="1122" y="554" width="16" height="1" fill="#fff"/>
<rect x="1127" y="556" width="2" height="1" fill="#303030"/>
<rect x="1138" y="553" width="17" height="4" fill="#e6e6e6"/>
<rect x="1138" y="553" width="17" height="1" fill="#8c8c8c"/>
<rect x="1138" y="553" width="1" height="4" fill="#8c8c8c"/>
<rect x="1139" y="554" width="16" height="1" fill="#fff"/>
<rect x="1155" y="553" width="17" height="4" fill="#e6e6e6"/>
<rect x="1155" y="553" width="17" height="1" fill="#8c8c8c"/>
<rect x="1155" y="553" width="1" height="4" fill="#8c8c8c"/>
<rect x="1156" y="554" width="16" height="1" fill="#fff"/>
<rect x="1161" y="556" width="2" height="1" fill="#303030"/>
<rect x="1172" y="553" width="17" height="4" fill="#e6e6e6"/>
<rect x="1172" y="553" width="17" height="1" fill="#8c8c8c"/>
<rect x="1172" y="553" width="1" height="4" fill="#8c8c8c"/>
<rect x="1173" y="554" width="16" height="1" fill="#fff"/>
<rect x="1189" y="553" width="17" height="4" fill="#e6e6e6"/>
<rect x="1189" y="553" width="17" height="1" fill="#8c8c8c"/>
<rect x="1189" y="553" width="1" height="4" fill="#8c8c8c"/>
<rect x="1190" y="554" width="16" height="1" fill="#fff"/>
<rect x="1206" y="553" width="17" height="4" fill="#e6e6e6"/>
<rect x="1206" y="553" width="17" height="1" fill="#8c8c8c"/>
<rect x="1206" y="553" width="1" height="4" fill="#8c8c8c"/>
<rect x="1207" y="554" width="16" height="1" fill="#fff"/>
<rect x="1212" y="556" width="6" height="1" fill="#303030"/>
<rect x="1223" y="553" width="17" height="4" fill="#e6e6e6"/>
<rect x="1223" y="553" width="17" height="1" fill="#8c8c8c"/>
<rect x="1223" y="553" width="1" height="4" fill="#8c8c8c"/>
<rect x="1224" y="554" width="16" height="1" fill="#fff"/>
<rect x="1229" y="556" width="2" height="1" fill="#303030"/>
<rect x="1240" y="553" width="17" height="4" fill="#e6e6e6"/>
<rect x="1240" y="553" width="17" height="1" fill="#8c8c8c"/>
<rect x="1240" y="553" width="1" height="4" fill="#8c8c8c"/>
<rect x="1241" y="554" width="16" height="1" fill="#fff"/>
<rect x="1246" y="556" width="6" height="1" fill="#303030"/>
<rect x="1257" y="553" width="17" height="4" fill="#e6e6e6"/>
<rect x="1257" y="553" width="17" height="1" fill="#8c8c8c"/>
<rect x="1257" y="553" width="1" height="4" fill="#8c8c8c"/>
<rect x="1258" y="554" width="16" height="1" fill="#fff"/>
<rect x="1263" y="556" width="6" height="1" fill="#303030"/>
<rect x="1274" y="553" width="3" height="4" fill="#e6e6e6"/>
<rect x="1274" y="553" width="3" height="1" fill="#8c8c8c"/>
<rect x="1274" y="553" width="1" height="4" fill="#8c8c8c"/>
<rect x="1275" y="554" width="2" height="1" fill="#fff"/>
</svg>
<div class="t" style="left:2px;top:8px;"><span class="j">日経</span><span class="l">225mini&nbsp;12/09(&nbsp;5</span><span class="j">分</span><span class="l">,&nbsp;2012/07/14&nbsp;-&nbsp;2012/07/19&nbsp;)</span></div>
<div class="t" style="left:316px;top:8px;"><span class="j">一目均衡表</span><span class="l">(&nbsp;9,&nbsp;26,&nbsp;52&nbsp;)</span></div>
<div class="t" style="left:474px;top:8px;"><span class="j">移動平均</span><span class="l">(&nbsp;Close,&nbsp;5&nbsp;)</span></div>
<div class="t" style="left:614px;top:8px;"><span class="j">移動平均</span><span class="l">(&nbsp;Close,&nbsp;25&nbsp;)</span></div>
<div class="t" style="left:760px;top:8px;"><span class="j">移動平均</span><span class="l">(&nbsp;Close,&nbsp;10&nbsp;)</span></div>
<div class="t" style="left:906px;top:8px;"><span class="j">移動平均</span><span class="l">(&nbsp;Close,&nbsp;75&nbsp;)</span></div>
<div class="t" style="left:1052px;top:8px;"><span class="j">移動平均</span><span class="l">(&nbsp;Close,&nbsp;75&nbsp;)</span></div>
<div class="t" style="left:2px;top:22px;"><span class="j">移動平均</span><span class="l">(&nbsp;Close,&nbsp;150&nbsp;)</span></div>
<div class="t" style="left:154px;top:22px;"><span class="j">移動平均</span><span class="l">(&nbsp;Close,&nbsp;20&nbsp;)</span></div>
<div class="t" style="left:300px;top:22px;"><span class="j">移動平均</span><span class="l">(&nbsp;Close,&nbsp;40&nbsp;)</span></div>
<div class="t" style="left:2px;top:235px;"><span class="j">出来高</span></div>
<div class="t" style="left:2px;top:331px;"><span class="l">MACD(&nbsp;12,&nbsp;26,&nbsp;9&nbsp;)</span></div>
<div class="t" style="left:2px;top:429px;"><span class="j">スロー・ストキャスティクス</span><span class="l">(&nbsp;14,&nbsp;3,&nbsp;80,&nbsp;20&nbsp;)</span></div>
<div class="t" style="left:1252px;top:19px;width:24px;overflow:hidden"><span class="l">8,820</span></div>
<div class="t" style="left:1252px;top:63px;width:24px;overflow:hidden"><span class="l">8,795</span></div>
<div class="t" style="left:1252px;top:108px;width:24px;overflow:hidden"><span class="l">8,770</span></div>
<div class="t" style="left:1252px;top:152px;width:24px;overflow:hidden"><span class="l">8,745</span></div>
<div class="t" style="left:1252px;top:197px;width:24px;overflow:hidden"><span class="l">8,720</span></div>
<div class="t" style="left:1252px;top:246px;width:24px;overflow:hidden"><span class="l">180.0</span></div>
<div class="t" style="left:1252px;top:283px;width:24px;overflow:hidden"><span class="l">75.00</span></div>
<div class="t" style="left:1252px;top:343px;width:24px;overflow:hidden"><span class="l">9.500</span></div>
<div class="t" style="left:1252px;top:381px;width:24px;overflow:hidden"><span class="l">-5.00</span></div>
<div class="t" style="left:1252px;top:440px;width:24px;overflow:hidden"><span class="l">100.0</span></div>
<div class="t" style="left:1252px;top:477px;width:24px;overflow:hidden"><span class="l">45.00</span></div>
<div class="t" style="left:1249px;top:314px;width:28px;overflow:hidden"><span class="l" style="font-size:17px;width:12px;text-align:center;transform:none;line-height:12px;vertical-align:-1px">×</span><span class="l">&nbsp;100</span></div>
<div class="t" style="left:3px;top:533px;"><span class="l">02:40</span></div>
<div class="t" style="left:51px;top:533px;"><span class="l">09:20</span></div>
<div class="t" style="left:147px;top:533px;"><span class="l">10:40</span></div>
<div class="t" style="left:243px;top:533px;"><span class="l">12:00</span></div>
<div class="t" style="left:339px;top:533px;"><span class="l">13:20</span></div>
<div class="t" style="left:435px;top:533px;"><span class="l">14:40</span></div>
<div class="t" style="left:543px;top:533px;"><span class="l">17:20</span></div>
<div class="t" style="left:639px;top:533px;"><span class="l">18:40</span></div>
<div class="t" style="left:735px;top:533px;"><span class="l">20:00</span></div>
<div class="t" style="left:831px;top:533px;"><span class="l">21:20</span></div>
<div class="t" style="left:927px;top:533px;"><span class="l">22:40</span></div>
<div class="t" style="left:1023px;top:533px;"><span class="l">07/19</span></div>
<div class="t" style="left:1119px;top:533px;"><span class="l">01:20</span></div>
<div class="t" style="left:1215px;top:533px;width:29px;overflow:hidden"><span class="l">02:40</span></div>
</body></html>
